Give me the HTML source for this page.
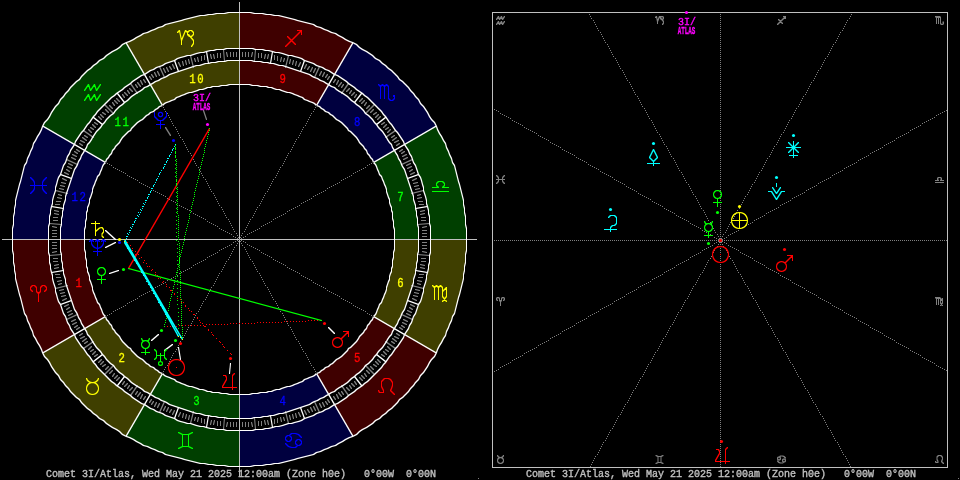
<!DOCTYPE html><html><head><meta charset="utf-8"><title>Comet 3I/Atlas</title><style>html,body{margin:0;padding:0;background:#000;overflow:hidden}svg{display:block}text{white-space:pre;font-family:"Liberation Mono",monospace;stroke-width:.35px;paint-order:stroke}.l{fill:none;stroke-width:1;stroke-linecap:square;stroke-linejoin:round}.p{fill:none;stroke-width:1;shape-rendering:crispEdges}</style></head><body>
<svg width="960" height="480" viewBox="0 0 960 480"><rect width="960" height="480" fill="#000"/>
<path fill="#3f0000" d="M12.5 239.5A227 227 0 0 0 42.91 353L105.27 317A155 155 0 0 1 84.5 239.5Z"/>
<path fill="#3f3f00" d="M42.91 353A227 227 0 0 0 126 436.09L162 373.73A155 155 0 0 1 105.27 317Z"/>
<path fill="#003f00" d="M126 436.09A227 227 0 0 0 239.5 466.5L239.5 394.5A155 155 0 0 1 162 373.73Z"/>
<path fill="#00003f" d="M239.5 466.5A227 227 0 0 0 353 436.09L317 373.73A155 155 0 0 1 239.5 394.5Z"/>
<path fill="#3f0000" d="M353 436.09A227 227 0 0 0 436.09 353L373.73 317A155 155 0 0 1 317 373.73Z"/>
<path fill="#3f3f00" d="M436.09 353A227 227 0 0 0 466.5 239.5L394.5 239.5A155 155 0 0 1 373.73 317Z"/>
<path fill="#003f00" d="M466.5 239.5A227 227 0 0 0 436.09 126L373.73 162A155 155 0 0 1 394.5 239.5Z"/>
<path fill="#00003f" d="M436.09 126A227 227 0 0 0 353 42.91L317 105.27A155 155 0 0 1 373.73 162Z"/>
<path fill="#3f0000" d="M353 42.91A227 227 0 0 0 239.5 12.5L239.5 84.5A155 155 0 0 1 317 105.27Z"/>
<path fill="#3f3f00" d="M239.5 12.5A227 227 0 0 0 126 42.91L162 105.27A155 155 0 0 1 239.5 84.5Z"/>
<path fill="#003f00" d="M126 42.91A227 227 0 0 0 42.91 126L105.27 162A155 155 0 0 1 162 105.27Z"/>
<path fill="#00003f" d="M42.91 126A227 227 0 0 0 12.5 239.5L84.5 239.5A155 155 0 0 1 105.27 162Z"/>
<circle cx="239.5" cy="239.5" r="185" fill="none" stroke="#000000" stroke-width="12"/>
<path transform="translate(.5,.5)" fill="#808080" d="M51.5 241.5H56.5V242.5H51.5ZM51.5 244.5H56.5V245.5H51.5ZM51.5 247.5H56.5V248.5H51.5ZM51.5 251.5L55.5 250.5L56.5 250.5L56.5 251.5L52.5 252.5L51.5 252.5ZM48.5 254.5L60.5 253.5L61.5 253.5L61.5 254.5L49.5 255.5L48.5 255.5ZM52.5 257.5H57.5V258.5H52.5ZM52.5 260.5H57.5V261.5H52.5ZM53.5 264.5L57.5 263.5L58.5 263.5L58.5 264.5L54.5 265.5L53.5 265.5ZM53.5 267.5L57.5 266.5L58.5 266.5L58.5 267.5L54.5 268.5L53.5 268.5Z"/>
<path transform="translate(.5,.5)" fill="#ffffff" d="M50.5 271.5L62.5 269.5L63.5 269.5L63.5 270.5L51.5 272.5L50.5 272.5Z"/>
<path transform="translate(.5,.5)" fill="#808080" d="M54.5 273.5H59.5V274.5H54.5ZM55.5 276.5H60.5V277.5H55.5ZM56.5 280.5L60.5 279.5L61.5 279.5L61.5 280.5L57.5 281.5L56.5 281.5ZM57.5 283.5L60.5 282.5L61.5 282.5L61.5 283.5L58.5 284.5L57.5 284.5ZM54.5 287.5L66.5 284.5L67.5 284.5L67.5 285.5L55.5 288.5L54.5 288.5ZM58.5 289.5L62.5 288.5L63.5 288.5L63.5 289.5L59.5 290.5L58.5 290.5ZM59.5 292.5L63.5 291.5L64.5 291.5L64.5 292.5L60.5 293.5L59.5 293.5ZM60.5 295.5L64.5 294.5L65.5 294.5L65.5 295.5L61.5 296.5L60.5 296.5ZM61.5 299.5L65.5 297.5L66.5 297.5L66.5 298.5L62.5 300.5L61.5 300.5Z"/>
<path transform="translate(.5,.5)" fill="#ffffff" d="M59.5 303.5L70.5 299.5L71.5 299.5L71.5 300.5L60.5 304.5L59.5 304.5Z"/>
<path transform="translate(.5,.5)" fill="#808080" d="M63.5 305.5L67.5 303.5L68.5 303.5L68.5 304.5L64.5 306.5L63.5 306.5ZM65.5 308.5L68.5 306.5L69.5 306.5L69.5 307.5L66.5 309.5L65.5 309.5ZM66.5 311.5L70.5 309.5L71.5 309.5L71.5 310.5L67.5 312.5L66.5 312.5ZM67.5 314.5L71.5 312.5L72.5 312.5L72.5 313.5L68.5 315.5L67.5 315.5ZM65.5 318.5L76.5 313.5L77.5 313.5L77.5 314.5L66.5 319.5L65.5 319.5ZM70.5 320.5L74.5 318.5L75.5 318.5L75.5 319.5L71.5 321.5L70.5 321.5ZM71.5 323.5L75.5 321.5L76.5 321.5L76.5 322.5L72.5 324.5L71.5 324.5ZM73.5 326.5L76.5 324.5L77.5 324.5L77.5 325.5L74.5 327.5L73.5 327.5ZM75.5 328.5L78.5 326.5L79.5 326.5L79.5 327.5L76.5 329.5L75.5 329.5Z"/>
<path transform="translate(.5,.5)" fill="#ffffff" d="M42.5 351.5L104.5 315.5L105.5 315.5L105.5 316.5L43.5 352.5L42.5 352.5Z"/>
<path transform="translate(.5,.5)" fill="#808080" d="M78.5 334.5L81.5 332.5L82.5 332.5L82.5 333.5L79.5 335.5L78.5 335.5ZM79.5 337.5L83.5 335.5L84.5 335.5L84.5 336.5L80.5 338.5L79.5 338.5ZM81.5 340.5L85.5 337.5L86.5 337.5L86.5 338.5L82.5 341.5L81.5 341.5ZM83.5 342.5L86.5 340.5L87.5 340.5L87.5 341.5L84.5 343.5L83.5 343.5ZM82.5 347.5L92.5 340.5L93.5 340.5L93.5 341.5L83.5 348.5L82.5 348.5ZM87.5 348.5L90.5 345.5L91.5 345.5L91.5 346.5L88.5 349.5L87.5 349.5ZM89.5 350.5L92.5 348.5L93.5 348.5L93.5 349.5L90.5 351.5L89.5 351.5ZM91.5 353.5L94.5 350.5L95.5 350.5L95.5 351.5L92.5 354.5L91.5 354.5ZM93.5 355.5L96.5 353.5L97.5 353.5L97.5 354.5L94.5 356.5L93.5 356.5Z"/>
<path transform="translate(.5,.5)" fill="#ffffff" d="M92.5 360.5L101.5 353.5L102.5 353.5L102.5 354.5L93.5 361.5L92.5 361.5Z"/>
<path transform="translate(.5,.5)" fill="#808080" d="M97.5 361.5L100.5 358.5L101.5 358.5L101.5 359.5L98.5 362.5L97.5 362.5ZM99.5 363.5L102.5 360.5L103.5 360.5L103.5 361.5L100.5 364.5L99.5 364.5ZM101.5 365.5L104.5 363.5L105.5 363.5L105.5 364.5L102.5 366.5L101.5 366.5ZM104.5 368.5L107.5 365.5L108.5 365.5L108.5 366.5L105.5 369.5L104.5 369.5ZM103.5 373.5L112.5 364.5L113.5 364.5L113.5 365.5L104.5 374.5L103.5 374.5ZM108.5 372.5L111.5 369.5L112.5 369.5L112.5 370.5L109.5 373.5L108.5 373.5ZM111.5 375.5L113.5 372.5L114.5 372.5L114.5 373.5L112.5 376.5L111.5 376.5ZM113.5 377.5L116.5 374.5L117.5 374.5L117.5 375.5L114.5 378.5L113.5 378.5ZM115.5 379.5L118.5 376.5L119.5 376.5L119.5 377.5L116.5 380.5L115.5 380.5Z"/>
<path transform="translate(.5,.5)" fill="#ffffff" d="M116.5 384.5L123.5 375.5L124.5 375.5L124.5 376.5L117.5 385.5L116.5 385.5Z"/>
<path transform="translate(.5,.5)" fill="#808080" d="M121.5 383.5L123.5 380.5L124.5 380.5L124.5 381.5L122.5 384.5L121.5 384.5ZM123.5 385.5L126.5 382.5L127.5 382.5L127.5 383.5L124.5 386.5L123.5 386.5ZM126.5 387.5L128.5 384.5L129.5 384.5L129.5 385.5L127.5 388.5L126.5 388.5ZM128.5 389.5L131.5 386.5L132.5 386.5L132.5 387.5L129.5 390.5L128.5 390.5ZM129.5 394.5L136.5 384.5L137.5 384.5L137.5 385.5L130.5 395.5L129.5 395.5ZM134.5 393.5L136.5 390.5L137.5 390.5L137.5 391.5L135.5 394.5L134.5 394.5ZM136.5 395.5L139.5 391.5L140.5 391.5L140.5 392.5L137.5 396.5L136.5 396.5ZM139.5 397.5L141.5 393.5L142.5 393.5L142.5 394.5L140.5 398.5L139.5 398.5ZM142.5 398.5L144.5 395.5L145.5 395.5L145.5 396.5L143.5 399.5L142.5 399.5Z"/>
<path transform="translate(.5,.5)" fill="#ffffff" d="M125.5 434.5L161.5 372.5L162.5 372.5L162.5 373.5L126.5 435.5L125.5 435.5Z"/>
<path transform="translate(.5,.5)" fill="#808080" d="M148.5 401.5L150.5 398.5L151.5 398.5L151.5 399.5L149.5 402.5L148.5 402.5ZM150.5 403.5L152.5 400.5L153.5 400.5L153.5 401.5L151.5 404.5L150.5 404.5ZM153.5 405.5L155.5 401.5L156.5 401.5L156.5 402.5L154.5 406.5L153.5 406.5ZM156.5 406.5L158.5 402.5L159.5 402.5L159.5 403.5L157.5 407.5L156.5 407.5ZM158.5 411.5L163.5 400.5L164.5 400.5L164.5 401.5L159.5 412.5L158.5 412.5ZM162.5 409.5L164.5 405.5L165.5 405.5L165.5 406.5L163.5 410.5L162.5 410.5ZM165.5 410.5L167.5 406.5L168.5 406.5L168.5 407.5L166.5 411.5L165.5 411.5ZM168.5 411.5L170.5 408.5L171.5 408.5L171.5 409.5L169.5 412.5L168.5 412.5ZM171.5 413.5L173.5 409.5L174.5 409.5L174.5 410.5L172.5 414.5L171.5 414.5Z"/>
<path transform="translate(.5,.5)" fill="#ffffff" d="M173.5 417.5L177.5 406.5L178.5 406.5L178.5 407.5L174.5 418.5L173.5 418.5Z"/>
<path transform="translate(.5,.5)" fill="#808080" d="M177.5 415.5L179.5 411.5L180.5 411.5L180.5 412.5L178.5 416.5L177.5 416.5ZM181.5 416.5L182.5 412.5L183.5 412.5L183.5 413.5L182.5 417.5L181.5 417.5ZM184.5 417.5L185.5 413.5L186.5 413.5L186.5 414.5L185.5 418.5L184.5 418.5ZM187.5 418.5L188.5 414.5L189.5 414.5L189.5 415.5L188.5 419.5L187.5 419.5ZM189.5 422.5L192.5 410.5L193.5 410.5L193.5 411.5L190.5 423.5L189.5 423.5ZM193.5 419.5L194.5 416.5L195.5 416.5L195.5 417.5L194.5 420.5L193.5 420.5ZM196.5 420.5L197.5 416.5L198.5 416.5L198.5 417.5L197.5 421.5L196.5 421.5ZM200.5 417.5H201.5V422.5H200.5ZM203.5 418.5H204.5V423.5H203.5Z"/>
<path transform="translate(.5,.5)" fill="#ffffff" d="M205.5 426.5L207.5 414.5L208.5 414.5L208.5 415.5L206.5 427.5L205.5 427.5Z"/>
<path transform="translate(.5,.5)" fill="#808080" d="M209.5 423.5L210.5 419.5L211.5 419.5L211.5 420.5L210.5 424.5L209.5 424.5ZM212.5 423.5L213.5 419.5L214.5 419.5L214.5 420.5L213.5 424.5L212.5 424.5ZM216.5 420.5H217.5V425.5H216.5ZM219.5 420.5H220.5V425.5H219.5ZM222.5 428.5L223.5 416.5L224.5 416.5L224.5 417.5L223.5 429.5L222.5 429.5ZM225.5 425.5L226.5 421.5L227.5 421.5L227.5 422.5L226.5 426.5L225.5 426.5ZM229.5 421.5H230.5V426.5H229.5ZM232.5 421.5H233.5V426.5H232.5ZM235.5 421.5H236.5V426.5H235.5ZM241.5 421.5H242.5V426.5H241.5ZM244.5 421.5H245.5V426.5H244.5ZM247.5 421.5H248.5V426.5H247.5ZM250.5 421.5L251.5 421.5L252.5 425.5L252.5 426.5L251.5 426.5L250.5 422.5ZM253.5 416.5L254.5 416.5L255.5 428.5L255.5 429.5L254.5 429.5L253.5 417.5ZM257.5 420.5H258.5V425.5H257.5ZM260.5 420.5H261.5V425.5H260.5ZM263.5 419.5L264.5 419.5L265.5 423.5L265.5 424.5L264.5 424.5L263.5 420.5ZM266.5 419.5L267.5 419.5L268.5 423.5L268.5 424.5L267.5 424.5L266.5 420.5Z"/>
<path transform="translate(.5,.5)" fill="#ffffff" d="M269.5 414.5L270.5 414.5L272.5 426.5L272.5 427.5L271.5 427.5L269.5 415.5Z"/>
<path transform="translate(.5,.5)" fill="#808080" d="M273.5 418.5H274.5V423.5H273.5ZM276.5 417.5H277.5V422.5H276.5ZM279.5 416.5L280.5 416.5L281.5 420.5L281.5 421.5L280.5 421.5L279.5 417.5ZM282.5 416.5L283.5 416.5L284.5 419.5L284.5 420.5L283.5 420.5L282.5 417.5ZM284.5 410.5L285.5 410.5L288.5 422.5L288.5 423.5L287.5 423.5L284.5 411.5ZM288.5 414.5L289.5 414.5L290.5 418.5L290.5 419.5L289.5 419.5L288.5 415.5ZM291.5 413.5L292.5 413.5L293.5 417.5L293.5 418.5L292.5 418.5L291.5 414.5ZM294.5 412.5L295.5 412.5L296.5 416.5L296.5 417.5L295.5 417.5L294.5 413.5ZM297.5 411.5L298.5 411.5L300.5 415.5L300.5 416.5L299.5 416.5L297.5 412.5Z"/>
<path transform="translate(.5,.5)" fill="#ffffff" d="M299.5 406.5L300.5 406.5L304.5 417.5L304.5 418.5L303.5 418.5L299.5 407.5Z"/>
<path transform="translate(.5,.5)" fill="#808080" d="M303.5 409.5L304.5 409.5L306.5 413.5L306.5 414.5L305.5 414.5L303.5 410.5ZM306.5 408.5L307.5 408.5L309.5 411.5L309.5 412.5L308.5 412.5L306.5 409.5ZM309.5 406.5L310.5 406.5L312.5 410.5L312.5 411.5L311.5 411.5L309.5 407.5ZM312.5 405.5L313.5 405.5L315.5 409.5L315.5 410.5L314.5 410.5L312.5 406.5ZM313.5 400.5L314.5 400.5L319.5 411.5L319.5 412.5L318.5 412.5L313.5 401.5ZM318.5 402.5L319.5 402.5L321.5 406.5L321.5 407.5L320.5 407.5L318.5 403.5ZM321.5 401.5L322.5 401.5L324.5 405.5L324.5 406.5L323.5 406.5L321.5 402.5ZM324.5 400.5L325.5 400.5L327.5 403.5L327.5 404.5L326.5 404.5L324.5 401.5ZM326.5 398.5L327.5 398.5L329.5 401.5L329.5 402.5L328.5 402.5L326.5 399.5Z"/>
<path transform="translate(.5,.5)" fill="#ffffff" d="M315.5 372.5L316.5 372.5L352.5 434.5L352.5 435.5L351.5 435.5L315.5 373.5Z"/>
<path transform="translate(.5,.5)" fill="#808080" d="M332.5 395.5L333.5 395.5L335.5 398.5L335.5 399.5L334.5 399.5L332.5 396.5ZM335.5 393.5L336.5 393.5L338.5 397.5L338.5 398.5L337.5 398.5L335.5 394.5ZM337.5 391.5L338.5 391.5L341.5 395.5L341.5 396.5L340.5 396.5L337.5 392.5ZM340.5 390.5L341.5 390.5L343.5 393.5L343.5 394.5L342.5 394.5L340.5 391.5ZM340.5 384.5L341.5 384.5L348.5 394.5L348.5 395.5L347.5 395.5L340.5 385.5ZM345.5 386.5L346.5 386.5L349.5 389.5L349.5 390.5L348.5 390.5L345.5 387.5ZM348.5 384.5L349.5 384.5L351.5 387.5L351.5 388.5L350.5 388.5L348.5 385.5ZM350.5 382.5L351.5 382.5L354.5 385.5L354.5 386.5L353.5 386.5L350.5 383.5ZM353.5 380.5L354.5 380.5L356.5 383.5L356.5 384.5L355.5 384.5L353.5 381.5Z"/>
<path transform="translate(.5,.5)" fill="#ffffff" d="M353.5 375.5L354.5 375.5L361.5 384.5L361.5 385.5L360.5 385.5L353.5 376.5Z"/>
<path transform="translate(.5,.5)" fill="#808080" d="M358.5 376.5L359.5 376.5L362.5 379.5L362.5 380.5L361.5 380.5L358.5 377.5ZM360.5 374.5L361.5 374.5L364.5 377.5L364.5 378.5L363.5 378.5L360.5 375.5ZM363.5 372.5L364.5 372.5L366.5 375.5L366.5 376.5L365.5 376.5L363.5 373.5ZM365.5 369.5L366.5 369.5L369.5 372.5L369.5 373.5L368.5 373.5L365.5 370.5ZM364.5 364.5L365.5 364.5L374.5 373.5L374.5 374.5L373.5 374.5L364.5 365.5ZM369.5 365.5L370.5 365.5L373.5 368.5L373.5 369.5L372.5 369.5L369.5 366.5ZM372.5 363.5L373.5 363.5L376.5 365.5L376.5 366.5L375.5 366.5L372.5 364.5ZM374.5 360.5L375.5 360.5L378.5 363.5L378.5 364.5L377.5 364.5L374.5 361.5ZM376.5 358.5L377.5 358.5L380.5 361.5L380.5 362.5L379.5 362.5L376.5 359.5Z"/>
<path transform="translate(.5,.5)" fill="#ffffff" d="M375.5 353.5L376.5 353.5L385.5 360.5L385.5 361.5L384.5 361.5L375.5 354.5Z"/>
<path transform="translate(.5,.5)" fill="#808080" d="M380.5 353.5L381.5 353.5L384.5 355.5L384.5 356.5L383.5 356.5L380.5 354.5ZM382.5 350.5L383.5 350.5L386.5 353.5L386.5 354.5L385.5 354.5L382.5 351.5ZM384.5 348.5L385.5 348.5L388.5 350.5L388.5 351.5L387.5 351.5L384.5 349.5ZM386.5 345.5L387.5 345.5L390.5 348.5L390.5 349.5L389.5 349.5L386.5 346.5ZM384.5 340.5L385.5 340.5L395.5 347.5L395.5 348.5L394.5 348.5L384.5 341.5ZM390.5 340.5L391.5 340.5L394.5 342.5L394.5 343.5L393.5 343.5L390.5 341.5ZM391.5 337.5L392.5 337.5L396.5 340.5L396.5 341.5L395.5 341.5L391.5 338.5ZM393.5 335.5L394.5 335.5L398.5 337.5L398.5 338.5L397.5 338.5L393.5 336.5ZM395.5 332.5L396.5 332.5L399.5 334.5L399.5 335.5L398.5 335.5L395.5 333.5Z"/>
<path transform="translate(.5,.5)" fill="#ffffff" d="M372.5 315.5L373.5 315.5L435.5 351.5L435.5 352.5L434.5 352.5L372.5 316.5Z"/>
<path transform="translate(.5,.5)" fill="#808080" d="M398.5 326.5L399.5 326.5L402.5 328.5L402.5 329.5L401.5 329.5L398.5 327.5ZM400.5 324.5L401.5 324.5L404.5 326.5L404.5 327.5L403.5 327.5L400.5 325.5ZM401.5 321.5L402.5 321.5L406.5 323.5L406.5 324.5L405.5 324.5L401.5 322.5ZM402.5 318.5L403.5 318.5L407.5 320.5L407.5 321.5L406.5 321.5L402.5 319.5ZM400.5 313.5L401.5 313.5L412.5 318.5L412.5 319.5L411.5 319.5L400.5 314.5ZM405.5 312.5L406.5 312.5L410.5 314.5L410.5 315.5L409.5 315.5L405.5 313.5ZM406.5 309.5L407.5 309.5L411.5 311.5L411.5 312.5L410.5 312.5L406.5 310.5ZM408.5 306.5L409.5 306.5L412.5 308.5L412.5 309.5L411.5 309.5L408.5 307.5ZM409.5 303.5L410.5 303.5L414.5 305.5L414.5 306.5L413.5 306.5L409.5 304.5Z"/>
<path transform="translate(.5,.5)" fill="#ffffff" d="M406.5 299.5L407.5 299.5L418.5 303.5L418.5 304.5L417.5 304.5L406.5 300.5Z"/>
<path transform="translate(.5,.5)" fill="#808080" d="M411.5 297.5L412.5 297.5L416.5 299.5L416.5 300.5L415.5 300.5L411.5 298.5ZM412.5 294.5L413.5 294.5L417.5 295.5L417.5 296.5L416.5 296.5L412.5 295.5ZM413.5 291.5L414.5 291.5L418.5 292.5L418.5 293.5L417.5 293.5L413.5 292.5ZM414.5 288.5L415.5 288.5L419.5 289.5L419.5 290.5L418.5 290.5L414.5 289.5ZM410.5 284.5L411.5 284.5L423.5 287.5L423.5 288.5L422.5 288.5L410.5 285.5ZM416.5 282.5L417.5 282.5L420.5 283.5L420.5 284.5L419.5 284.5L416.5 283.5ZM416.5 279.5L417.5 279.5L421.5 280.5L421.5 281.5L420.5 281.5L416.5 280.5ZM417.5 276.5H422.5V277.5H417.5ZM418.5 273.5H423.5V274.5H418.5Z"/>
<path transform="translate(.5,.5)" fill="#ffffff" d="M414.5 269.5L415.5 269.5L427.5 271.5L427.5 272.5L426.5 272.5L414.5 270.5Z"/>
<path transform="translate(.5,.5)" fill="#808080" d="M419.5 266.5L420.5 266.5L424.5 267.5L424.5 268.5L423.5 268.5L419.5 267.5ZM419.5 263.5L420.5 263.5L424.5 264.5L424.5 265.5L423.5 265.5L419.5 264.5ZM420.5 260.5H425.5V261.5H420.5ZM420.5 257.5H425.5V258.5H420.5ZM416.5 253.5L417.5 253.5L429.5 254.5L429.5 255.5L428.5 255.5L416.5 254.5ZM421.5 250.5L422.5 250.5L426.5 251.5L426.5 252.5L425.5 252.5L421.5 251.5ZM421.5 247.5H426.5V248.5H421.5ZM421.5 244.5H426.5V245.5H421.5ZM421.5 241.5H426.5V242.5H421.5ZM421.5 235.5H426.5V236.5H421.5ZM421.5 232.5H426.5V233.5H421.5ZM421.5 229.5H426.5V230.5H421.5ZM421.5 226.5L425.5 225.5L426.5 225.5L426.5 226.5L422.5 227.5L421.5 227.5ZM416.5 223.5L428.5 222.5L429.5 222.5L429.5 223.5L417.5 224.5L416.5 224.5ZM420.5 219.5H425.5V220.5H420.5ZM420.5 216.5H425.5V217.5H420.5ZM419.5 213.5L423.5 212.5L424.5 212.5L424.5 213.5L420.5 214.5L419.5 214.5ZM419.5 210.5L423.5 209.5L424.5 209.5L424.5 210.5L420.5 211.5L419.5 211.5Z"/>
<path transform="translate(.5,.5)" fill="#ffffff" d="M414.5 207.5L426.5 205.5L427.5 205.5L427.5 206.5L415.5 208.5L414.5 208.5Z"/>
<path transform="translate(.5,.5)" fill="#808080" d="M418.5 203.5H423.5V204.5H418.5ZM417.5 200.5H422.5V201.5H417.5ZM416.5 197.5L420.5 196.5L421.5 196.5L421.5 197.5L417.5 198.5L416.5 198.5ZM416.5 194.5L419.5 193.5L420.5 193.5L420.5 194.5L417.5 195.5L416.5 195.5ZM410.5 192.5L422.5 189.5L423.5 189.5L423.5 190.5L411.5 193.5L410.5 193.5ZM414.5 188.5L418.5 187.5L419.5 187.5L419.5 188.5L415.5 189.5L414.5 189.5ZM413.5 185.5L417.5 184.5L418.5 184.5L418.5 185.5L414.5 186.5L413.5 186.5ZM412.5 182.5L416.5 181.5L417.5 181.5L417.5 182.5L413.5 183.5L412.5 183.5ZM411.5 179.5L415.5 177.5L416.5 177.5L416.5 178.5L412.5 180.5L411.5 180.5Z"/>
<path transform="translate(.5,.5)" fill="#ffffff" d="M406.5 177.5L417.5 173.5L418.5 173.5L418.5 174.5L407.5 178.5L406.5 178.5Z"/>
<path transform="translate(.5,.5)" fill="#808080" d="M409.5 173.5L413.5 171.5L414.5 171.5L414.5 172.5L410.5 174.5L409.5 174.5ZM408.5 170.5L411.5 168.5L412.5 168.5L412.5 169.5L409.5 171.5L408.5 171.5ZM406.5 167.5L410.5 165.5L411.5 165.5L411.5 166.5L407.5 168.5L406.5 168.5ZM405.5 164.5L409.5 162.5L410.5 162.5L410.5 163.5L406.5 165.5L405.5 165.5ZM400.5 163.5L411.5 158.5L412.5 158.5L412.5 159.5L401.5 164.5L400.5 164.5ZM402.5 158.5L406.5 156.5L407.5 156.5L407.5 157.5L403.5 159.5L402.5 159.5ZM401.5 155.5L405.5 153.5L406.5 153.5L406.5 154.5L402.5 156.5L401.5 156.5ZM400.5 152.5L403.5 150.5L404.5 150.5L404.5 151.5L401.5 153.5L400.5 153.5ZM398.5 150.5L401.5 148.5L402.5 148.5L402.5 149.5L399.5 151.5L398.5 151.5Z"/>
<path transform="translate(.5,.5)" fill="#ffffff" d="M372.5 161.5L434.5 125.5L435.5 125.5L435.5 126.5L373.5 162.5L372.5 162.5Z"/>
<path transform="translate(.5,.5)" fill="#808080" d="M395.5 144.5L398.5 142.5L399.5 142.5L399.5 143.5L396.5 145.5L395.5 145.5ZM393.5 141.5L397.5 139.5L398.5 139.5L398.5 140.5L394.5 142.5L393.5 142.5ZM391.5 139.5L395.5 136.5L396.5 136.5L396.5 137.5L392.5 140.5L391.5 140.5ZM390.5 136.5L393.5 134.5L394.5 134.5L394.5 135.5L391.5 137.5L390.5 137.5ZM384.5 136.5L394.5 129.5L395.5 129.5L395.5 130.5L385.5 137.5L384.5 137.5ZM386.5 131.5L389.5 128.5L390.5 128.5L390.5 129.5L387.5 132.5L386.5 132.5ZM384.5 128.5L387.5 126.5L388.5 126.5L388.5 127.5L385.5 129.5L384.5 129.5ZM382.5 126.5L385.5 123.5L386.5 123.5L386.5 124.5L383.5 127.5L382.5 127.5ZM380.5 123.5L383.5 121.5L384.5 121.5L384.5 122.5L381.5 124.5L380.5 124.5Z"/>
<path transform="translate(.5,.5)" fill="#ffffff" d="M375.5 123.5L384.5 116.5L385.5 116.5L385.5 117.5L376.5 124.5L375.5 124.5Z"/>
<path transform="translate(.5,.5)" fill="#808080" d="M376.5 118.5L379.5 115.5L380.5 115.5L380.5 116.5L377.5 119.5L376.5 119.5ZM374.5 116.5L377.5 113.5L378.5 113.5L378.5 114.5L375.5 117.5L374.5 117.5ZM372.5 113.5L375.5 111.5L376.5 111.5L376.5 112.5L373.5 114.5L372.5 114.5ZM369.5 111.5L372.5 108.5L373.5 108.5L373.5 109.5L370.5 112.5L369.5 112.5ZM364.5 112.5L373.5 103.5L374.5 103.5L374.5 104.5L365.5 113.5L364.5 113.5ZM365.5 107.5L368.5 104.5L369.5 104.5L369.5 105.5L366.5 108.5L365.5 108.5ZM363.5 104.5L365.5 101.5L366.5 101.5L366.5 102.5L364.5 105.5L363.5 105.5ZM360.5 102.5L363.5 99.5L364.5 99.5L364.5 100.5L361.5 103.5L360.5 103.5ZM358.5 100.5L361.5 97.5L362.5 97.5L362.5 98.5L359.5 101.5L358.5 101.5Z"/>
<path transform="translate(.5,.5)" fill="#ffffff" d="M353.5 101.5L360.5 92.5L361.5 92.5L361.5 93.5L354.5 102.5L353.5 102.5Z"/>
<path transform="translate(.5,.5)" fill="#808080" d="M353.5 96.5L355.5 93.5L356.5 93.5L356.5 94.5L354.5 97.5L353.5 97.5ZM350.5 94.5L353.5 91.5L354.5 91.5L354.5 92.5L351.5 95.5L350.5 95.5ZM348.5 92.5L350.5 89.5L351.5 89.5L351.5 90.5L349.5 93.5L348.5 93.5ZM345.5 90.5L348.5 87.5L349.5 87.5L349.5 88.5L346.5 91.5L345.5 91.5ZM340.5 92.5L347.5 82.5L348.5 82.5L348.5 83.5L341.5 93.5L340.5 93.5ZM340.5 86.5L342.5 83.5L343.5 83.5L343.5 84.5L341.5 87.5L340.5 87.5ZM337.5 85.5L340.5 81.5L341.5 81.5L341.5 82.5L338.5 86.5L337.5 86.5ZM335.5 83.5L337.5 79.5L338.5 79.5L338.5 80.5L336.5 84.5L335.5 84.5ZM332.5 81.5L334.5 78.5L335.5 78.5L335.5 79.5L333.5 82.5L332.5 82.5Z"/>
<path transform="translate(.5,.5)" fill="#ffffff" d="M315.5 104.5L351.5 42.5L352.5 42.5L352.5 43.5L316.5 105.5L315.5 105.5Z"/>
<path transform="translate(.5,.5)" fill="#808080" d="M326.5 78.5L328.5 75.5L329.5 75.5L329.5 76.5L327.5 79.5L326.5 79.5ZM324.5 76.5L326.5 73.5L327.5 73.5L327.5 74.5L325.5 77.5L324.5 77.5ZM321.5 75.5L323.5 71.5L324.5 71.5L324.5 72.5L322.5 76.5L321.5 76.5ZM318.5 74.5L320.5 70.5L321.5 70.5L321.5 71.5L319.5 75.5L318.5 75.5ZM313.5 76.5L318.5 65.5L319.5 65.5L319.5 66.5L314.5 77.5L313.5 77.5ZM312.5 71.5L314.5 67.5L315.5 67.5L315.5 68.5L313.5 72.5L312.5 72.5ZM309.5 70.5L311.5 66.5L312.5 66.5L312.5 67.5L310.5 71.5L309.5 71.5ZM306.5 68.5L308.5 65.5L309.5 65.5L309.5 66.5L307.5 69.5L306.5 69.5ZM303.5 67.5L305.5 63.5L306.5 63.5L306.5 64.5L304.5 68.5L303.5 68.5Z"/>
<path transform="translate(.5,.5)" fill="#ffffff" d="M299.5 70.5L303.5 59.5L304.5 59.5L304.5 60.5L300.5 71.5L299.5 71.5Z"/>
<path transform="translate(.5,.5)" fill="#808080" d="M297.5 65.5L299.5 61.5L300.5 61.5L300.5 62.5L298.5 66.5L297.5 66.5ZM294.5 64.5L295.5 60.5L296.5 60.5L296.5 61.5L295.5 65.5L294.5 65.5ZM291.5 63.5L292.5 59.5L293.5 59.5L293.5 60.5L292.5 64.5L291.5 64.5ZM288.5 62.5L289.5 58.5L290.5 58.5L290.5 59.5L289.5 63.5L288.5 63.5ZM284.5 66.5L287.5 54.5L288.5 54.5L288.5 55.5L285.5 67.5L284.5 67.5ZM282.5 60.5L283.5 57.5L284.5 57.5L284.5 58.5L283.5 61.5L282.5 61.5ZM279.5 60.5L280.5 56.5L281.5 56.5L281.5 57.5L280.5 61.5L279.5 61.5ZM276.5 55.5H277.5V60.5H276.5ZM273.5 54.5H274.5V59.5H273.5Z"/>
<path transform="translate(.5,.5)" fill="#ffffff" d="M269.5 62.5L271.5 50.5L272.5 50.5L272.5 51.5L270.5 63.5L269.5 63.5Z"/>
<path transform="translate(.5,.5)" fill="#808080" d="M266.5 57.5L267.5 53.5L268.5 53.5L268.5 54.5L267.5 58.5L266.5 58.5ZM263.5 57.5L264.5 53.5L265.5 53.5L265.5 54.5L264.5 58.5L263.5 58.5ZM260.5 52.5H261.5V57.5H260.5ZM257.5 52.5H258.5V57.5H257.5ZM253.5 60.5L254.5 48.5L255.5 48.5L255.5 49.5L254.5 61.5L253.5 61.5ZM250.5 55.5L251.5 51.5L252.5 51.5L252.5 52.5L251.5 56.5L250.5 56.5ZM247.5 51.5H248.5V56.5H247.5ZM244.5 51.5H245.5V56.5H244.5ZM241.5 51.5H242.5V56.5H241.5ZM235.5 51.5H236.5V56.5H235.5ZM232.5 51.5H233.5V56.5H232.5ZM229.5 51.5H230.5V56.5H229.5ZM225.5 51.5L226.5 51.5L227.5 55.5L227.5 56.5L226.5 56.5L225.5 52.5ZM222.5 48.5L223.5 48.5L224.5 60.5L224.5 61.5L223.5 61.5L222.5 49.5ZM219.5 52.5H220.5V57.5H219.5ZM216.5 52.5H217.5V57.5H216.5ZM212.5 53.5L213.5 53.5L214.5 57.5L214.5 58.5L213.5 58.5L212.5 54.5ZM209.5 53.5L210.5 53.5L211.5 57.5L211.5 58.5L210.5 58.5L209.5 54.5Z"/>
<path transform="translate(.5,.5)" fill="#ffffff" d="M205.5 50.5L206.5 50.5L208.5 62.5L208.5 63.5L207.5 63.5L205.5 51.5Z"/>
<path transform="translate(.5,.5)" fill="#808080" d="M203.5 54.5H204.5V59.5H203.5ZM200.5 55.5H201.5V60.5H200.5ZM196.5 56.5L197.5 56.5L198.5 60.5L198.5 61.5L197.5 61.5L196.5 57.5ZM193.5 57.5L194.5 57.5L195.5 60.5L195.5 61.5L194.5 61.5L193.5 58.5ZM189.5 54.5L190.5 54.5L193.5 66.5L193.5 67.5L192.5 67.5L189.5 55.5ZM187.5 58.5L188.5 58.5L189.5 62.5L189.5 63.5L188.5 63.5L187.5 59.5ZM184.5 59.5L185.5 59.5L186.5 63.5L186.5 64.5L185.5 64.5L184.5 60.5ZM181.5 60.5L182.5 60.5L183.5 64.5L183.5 65.5L182.5 65.5L181.5 61.5ZM177.5 61.5L178.5 61.5L180.5 65.5L180.5 66.5L179.5 66.5L177.5 62.5Z"/>
<path transform="translate(.5,.5)" fill="#ffffff" d="M173.5 59.5L174.5 59.5L178.5 70.5L178.5 71.5L177.5 71.5L173.5 60.5Z"/>
<path transform="translate(.5,.5)" fill="#808080" d="M171.5 63.5L172.5 63.5L174.5 67.5L174.5 68.5L173.5 68.5L171.5 64.5ZM168.5 65.5L169.5 65.5L171.5 68.5L171.5 69.5L170.5 69.5L168.5 66.5ZM165.5 66.5L166.5 66.5L168.5 70.5L168.5 71.5L167.5 71.5L165.5 67.5ZM162.5 67.5L163.5 67.5L165.5 71.5L165.5 72.5L164.5 72.5L162.5 68.5ZM158.5 65.5L159.5 65.5L164.5 76.5L164.5 77.5L163.5 77.5L158.5 66.5ZM156.5 70.5L157.5 70.5L159.5 74.5L159.5 75.5L158.5 75.5L156.5 71.5ZM153.5 71.5L154.5 71.5L156.5 75.5L156.5 76.5L155.5 76.5L153.5 72.5ZM150.5 73.5L151.5 73.5L153.5 76.5L153.5 77.5L152.5 77.5L150.5 74.5ZM148.5 75.5L149.5 75.5L151.5 78.5L151.5 79.5L150.5 79.5L148.5 76.5Z"/>
<path transform="translate(.5,.5)" fill="#ffffff" d="M125.5 42.5L126.5 42.5L162.5 104.5L162.5 105.5L161.5 105.5L125.5 43.5Z"/>
<path transform="translate(.5,.5)" fill="#808080" d="M142.5 78.5L143.5 78.5L145.5 81.5L145.5 82.5L144.5 82.5L142.5 79.5ZM139.5 79.5L140.5 79.5L142.5 83.5L142.5 84.5L141.5 84.5L139.5 80.5ZM136.5 81.5L137.5 81.5L140.5 85.5L140.5 86.5L139.5 86.5L136.5 82.5ZM134.5 83.5L135.5 83.5L137.5 86.5L137.5 87.5L136.5 87.5L134.5 84.5ZM129.5 82.5L130.5 82.5L137.5 92.5L137.5 93.5L136.5 93.5L129.5 83.5ZM128.5 87.5L129.5 87.5L132.5 90.5L132.5 91.5L131.5 91.5L128.5 88.5ZM126.5 89.5L127.5 89.5L129.5 92.5L129.5 93.5L128.5 93.5L126.5 90.5ZM123.5 91.5L124.5 91.5L127.5 94.5L127.5 95.5L126.5 95.5L123.5 92.5ZM121.5 93.5L122.5 93.5L124.5 96.5L124.5 97.5L123.5 97.5L121.5 94.5Z"/>
<path transform="translate(.5,.5)" fill="#ffffff" d="M116.5 92.5L117.5 92.5L124.5 101.5L124.5 102.5L123.5 102.5L116.5 93.5Z"/>
<path transform="translate(.5,.5)" fill="#808080" d="M115.5 97.5L116.5 97.5L119.5 100.5L119.5 101.5L118.5 101.5L115.5 98.5ZM113.5 99.5L114.5 99.5L117.5 102.5L117.5 103.5L116.5 103.5L113.5 100.5ZM111.5 101.5L112.5 101.5L114.5 104.5L114.5 105.5L113.5 105.5L111.5 102.5ZM108.5 104.5L109.5 104.5L112.5 107.5L112.5 108.5L111.5 108.5L108.5 105.5ZM103.5 103.5L104.5 103.5L113.5 112.5L113.5 113.5L112.5 113.5L103.5 104.5ZM104.5 108.5L105.5 108.5L108.5 111.5L108.5 112.5L107.5 112.5L104.5 109.5ZM101.5 111.5L102.5 111.5L105.5 113.5L105.5 114.5L104.5 114.5L101.5 112.5ZM99.5 113.5L100.5 113.5L103.5 116.5L103.5 117.5L102.5 117.5L99.5 114.5ZM97.5 115.5L98.5 115.5L101.5 118.5L101.5 119.5L100.5 119.5L97.5 116.5Z"/>
<path transform="translate(.5,.5)" fill="#ffffff" d="M92.5 116.5L93.5 116.5L102.5 123.5L102.5 124.5L101.5 124.5L92.5 117.5Z"/>
<path transform="translate(.5,.5)" fill="#808080" d="M93.5 121.5L94.5 121.5L97.5 123.5L97.5 124.5L96.5 124.5L93.5 122.5ZM91.5 123.5L92.5 123.5L95.5 126.5L95.5 127.5L94.5 127.5L91.5 124.5ZM89.5 126.5L90.5 126.5L93.5 128.5L93.5 129.5L92.5 129.5L89.5 127.5ZM87.5 128.5L88.5 128.5L91.5 131.5L91.5 132.5L90.5 132.5L87.5 129.5ZM82.5 129.5L83.5 129.5L93.5 136.5L93.5 137.5L92.5 137.5L82.5 130.5ZM83.5 134.5L84.5 134.5L87.5 136.5L87.5 137.5L86.5 137.5L83.5 135.5ZM81.5 136.5L82.5 136.5L86.5 139.5L86.5 140.5L85.5 140.5L81.5 137.5ZM79.5 139.5L80.5 139.5L84.5 141.5L84.5 142.5L83.5 142.5L79.5 140.5ZM78.5 142.5L79.5 142.5L82.5 144.5L82.5 145.5L81.5 145.5L78.5 143.5Z"/>
<path transform="translate(.5,.5)" fill="#ffffff" d="M42.5 125.5L43.5 125.5L105.5 161.5L105.5 162.5L104.5 162.5L42.5 126.5Z"/>
<path transform="translate(.5,.5)" fill="#808080" d="M75.5 148.5L76.5 148.5L79.5 150.5L79.5 151.5L78.5 151.5L75.5 149.5ZM73.5 150.5L74.5 150.5L77.5 152.5L77.5 153.5L76.5 153.5L73.5 151.5ZM71.5 153.5L72.5 153.5L76.5 155.5L76.5 156.5L75.5 156.5L71.5 154.5ZM70.5 156.5L71.5 156.5L75.5 158.5L75.5 159.5L74.5 159.5L70.5 157.5ZM65.5 158.5L66.5 158.5L77.5 163.5L77.5 164.5L76.5 164.5L65.5 159.5ZM67.5 162.5L68.5 162.5L72.5 164.5L72.5 165.5L71.5 165.5L67.5 163.5ZM66.5 165.5L67.5 165.5L71.5 167.5L71.5 168.5L70.5 168.5L66.5 166.5ZM65.5 168.5L66.5 168.5L69.5 170.5L69.5 171.5L68.5 171.5L65.5 169.5ZM63.5 171.5L64.5 171.5L68.5 173.5L68.5 174.5L67.5 174.5L63.5 172.5Z"/>
<path transform="translate(.5,.5)" fill="#ffffff" d="M59.5 173.5L60.5 173.5L71.5 177.5L71.5 178.5L70.5 178.5L59.5 174.5Z"/>
<path transform="translate(.5,.5)" fill="#808080" d="M61.5 177.5L62.5 177.5L66.5 179.5L66.5 180.5L65.5 180.5L61.5 178.5ZM60.5 181.5L61.5 181.5L65.5 182.5L65.5 183.5L64.5 183.5L60.5 182.5ZM59.5 184.5L60.5 184.5L64.5 185.5L64.5 186.5L63.5 186.5L59.5 185.5ZM58.5 187.5L59.5 187.5L63.5 188.5L63.5 189.5L62.5 189.5L58.5 188.5ZM54.5 189.5L55.5 189.5L67.5 192.5L67.5 193.5L66.5 193.5L54.5 190.5ZM57.5 193.5L58.5 193.5L61.5 194.5L61.5 195.5L60.5 195.5L57.5 194.5ZM56.5 196.5L57.5 196.5L61.5 197.5L61.5 198.5L60.5 198.5L56.5 197.5ZM55.5 200.5H60.5V201.5H55.5ZM54.5 203.5H59.5V204.5H54.5Z"/>
<path transform="translate(.5,.5)" fill="#ffffff" d="M50.5 205.5L51.5 205.5L63.5 207.5L63.5 208.5L62.5 208.5L50.5 206.5Z"/>
<path transform="translate(.5,.5)" fill="#808080" d="M53.5 209.5L54.5 209.5L58.5 210.5L58.5 211.5L57.5 211.5L53.5 210.5ZM53.5 212.5L54.5 212.5L58.5 213.5L58.5 214.5L57.5 214.5L53.5 213.5ZM52.5 216.5H57.5V217.5H52.5ZM52.5 219.5H57.5V220.5H52.5ZM48.5 222.5L49.5 222.5L61.5 223.5L61.5 224.5L60.5 224.5L48.5 223.5ZM51.5 225.5L52.5 225.5L56.5 226.5L56.5 227.5L55.5 227.5L51.5 226.5ZM51.5 229.5H56.5V230.5H51.5ZM51.5 232.5H56.5V233.5H51.5ZM51.5 235.5H56.5V236.5H51.5Z"/>
<path transform="translate(.5,.5)" fill="#c0c0c0" d="M1.5 238.5H476.5V239.5H1.5ZM238.5 1.5H239.5V476.5H238.5Z"/>
<path transform="translate(.5,.5)" fill="#ffffff" d="M465.5 238.5H466.5V242.5H465.5ZM465.5 241.5H466.5V246.5H465.5ZM465.5 245.5H466.5V250.5H465.5ZM464.5 253.5L465.5 249.5L466.5 249.5L466.5 250.5L465.5 254.5L464.5 254.5ZM464.5 253.5H465.5V258.5H464.5ZM464.5 257.5H465.5V262.5H464.5ZM463.5 265.5L464.5 261.5L465.5 261.5L465.5 262.5L464.5 266.5L463.5 266.5ZM463.5 265.5H464.5V270.5H463.5ZM462.5 273.5L463.5 269.5L464.5 269.5L464.5 270.5L463.5 274.5L462.5 274.5ZM462.5 273.5H463.5V278.5H462.5ZM461.5 281.5L462.5 277.5L463.5 277.5L463.5 278.5L462.5 282.5L461.5 282.5ZM460.5 285.5L461.5 281.5L462.5 281.5L462.5 282.5L461.5 286.5L460.5 286.5ZM459.5 289.5L460.5 285.5L461.5 285.5L461.5 286.5L460.5 290.5L459.5 290.5ZM458.5 293.5L459.5 289.5L460.5 289.5L460.5 290.5L459.5 294.5L458.5 294.5ZM457.5 296.5L458.5 293.5L459.5 293.5L459.5 294.5L458.5 297.5L457.5 297.5ZM456.5 300.5L457.5 296.5L458.5 296.5L458.5 297.5L457.5 301.5L456.5 301.5ZM455.5 304.5L456.5 300.5L457.5 300.5L457.5 301.5L456.5 305.5L455.5 305.5ZM454.5 308.5L455.5 304.5L456.5 304.5L456.5 305.5L455.5 309.5L454.5 309.5ZM453.5 312.5L454.5 308.5L455.5 308.5L455.5 309.5L454.5 313.5L453.5 313.5ZM451.5 315.5L453.5 312.5L454.5 312.5L454.5 313.5L452.5 316.5L451.5 316.5ZM450.5 319.5L451.5 315.5L452.5 315.5L452.5 316.5L451.5 320.5L450.5 320.5ZM448.5 323.5L450.5 319.5L451.5 319.5L451.5 320.5L449.5 324.5L448.5 324.5ZM447.5 326.5L448.5 323.5L449.5 323.5L449.5 324.5L448.5 327.5L447.5 327.5ZM445.5 330.5L447.5 326.5L448.5 326.5L448.5 327.5L446.5 331.5L445.5 331.5ZM444.5 334.5L445.5 330.5L446.5 330.5L446.5 331.5L445.5 335.5L444.5 335.5ZM442.5 337.5L444.5 334.5L445.5 334.5L445.5 335.5L443.5 338.5L442.5 338.5ZM440.5 341.5L442.5 337.5L443.5 337.5L443.5 338.5L441.5 342.5L440.5 342.5ZM438.5 344.5L440.5 341.5L441.5 341.5L441.5 342.5L439.5 345.5L438.5 345.5ZM436.5 348.5L438.5 344.5L439.5 344.5L439.5 345.5L437.5 349.5L436.5 349.5ZM435.5 351.5L436.5 348.5L437.5 348.5L437.5 349.5L436.5 352.5L435.5 352.5ZM433.5 355.5L435.5 351.5L436.5 351.5L436.5 352.5L434.5 356.5L433.5 356.5ZM430.5 358.5L433.5 355.5L434.5 355.5L434.5 356.5L431.5 359.5L430.5 359.5ZM428.5 361.5L430.5 358.5L431.5 358.5L431.5 359.5L429.5 362.5L428.5 362.5ZM426.5 365.5L428.5 361.5L429.5 361.5L429.5 362.5L427.5 366.5L426.5 366.5ZM424.5 368.5L426.5 365.5L427.5 365.5L427.5 366.5L425.5 369.5L424.5 369.5ZM422.5 371.5L424.5 368.5L425.5 368.5L425.5 369.5L423.5 372.5L422.5 372.5ZM419.5 374.5L422.5 371.5L423.5 371.5L423.5 372.5L420.5 375.5L419.5 375.5ZM417.5 378.5L419.5 374.5L420.5 374.5L420.5 375.5L418.5 379.5L417.5 379.5ZM414.5 381.5L417.5 378.5L418.5 378.5L418.5 379.5L415.5 382.5L414.5 382.5ZM412.5 384.5L414.5 381.5L415.5 381.5L415.5 382.5L413.5 385.5L412.5 385.5ZM409.5 387.5L412.5 384.5L413.5 384.5L413.5 385.5L410.5 388.5L409.5 388.5ZM407.5 390.5L409.5 387.5L410.5 387.5L410.5 388.5L408.5 391.5L407.5 391.5ZM404.5 393.5L407.5 390.5L408.5 390.5L408.5 391.5L405.5 394.5L404.5 394.5ZM401.5 396.5L404.5 393.5L405.5 393.5L405.5 394.5L402.5 397.5L401.5 397.5ZM398.5 398.5L401.5 396.5L402.5 396.5L402.5 397.5L399.5 399.5L398.5 399.5ZM396.5 401.5L398.5 398.5L399.5 398.5L399.5 399.5L397.5 402.5L396.5 402.5ZM393.5 404.5L396.5 401.5L397.5 401.5L397.5 402.5L394.5 405.5L393.5 405.5ZM390.5 407.5L393.5 404.5L394.5 404.5L394.5 405.5L391.5 408.5L390.5 408.5ZM387.5 409.5L390.5 407.5L391.5 407.5L391.5 408.5L388.5 410.5L387.5 410.5ZM384.5 412.5L387.5 409.5L388.5 409.5L388.5 410.5L385.5 413.5L384.5 413.5ZM381.5 414.5L384.5 412.5L385.5 412.5L385.5 413.5L382.5 415.5L381.5 415.5ZM378.5 417.5L381.5 414.5L382.5 414.5L382.5 415.5L379.5 418.5L378.5 418.5ZM374.5 419.5L378.5 417.5L379.5 417.5L379.5 418.5L375.5 420.5L374.5 420.5ZM371.5 422.5L374.5 419.5L375.5 419.5L375.5 420.5L372.5 423.5L371.5 423.5ZM368.5 424.5L371.5 422.5L372.5 422.5L372.5 423.5L369.5 425.5L368.5 425.5ZM365.5 426.5L368.5 424.5L369.5 424.5L369.5 425.5L366.5 427.5L365.5 427.5ZM361.5 428.5L365.5 426.5L366.5 426.5L366.5 427.5L362.5 429.5L361.5 429.5ZM358.5 430.5L361.5 428.5L362.5 428.5L362.5 429.5L359.5 431.5L358.5 431.5ZM355.5 433.5L358.5 430.5L359.5 430.5L359.5 431.5L356.5 434.5L355.5 434.5ZM351.5 435.5L355.5 433.5L356.5 433.5L356.5 434.5L352.5 436.5L351.5 436.5ZM348.5 436.5L351.5 435.5L352.5 435.5L352.5 436.5L349.5 437.5L348.5 437.5ZM344.5 438.5L348.5 436.5L349.5 436.5L349.5 437.5L345.5 439.5L344.5 439.5ZM341.5 440.5L344.5 438.5L345.5 438.5L345.5 439.5L342.5 441.5L341.5 441.5ZM337.5 442.5L341.5 440.5L342.5 440.5L342.5 441.5L338.5 443.5L337.5 443.5ZM334.5 444.5L337.5 442.5L338.5 442.5L338.5 443.5L335.5 445.5L334.5 445.5ZM330.5 445.5L334.5 444.5L335.5 444.5L335.5 445.5L331.5 446.5L330.5 446.5ZM326.5 447.5L330.5 445.5L331.5 445.5L331.5 446.5L327.5 448.5L326.5 448.5ZM323.5 448.5L326.5 447.5L327.5 447.5L327.5 448.5L324.5 449.5L323.5 449.5ZM319.5 450.5L323.5 448.5L324.5 448.5L324.5 449.5L320.5 451.5L319.5 451.5ZM315.5 451.5L319.5 450.5L320.5 450.5L320.5 451.5L316.5 452.5L315.5 452.5ZM312.5 453.5L315.5 451.5L316.5 451.5L316.5 452.5L313.5 454.5L312.5 454.5ZM308.5 454.5L312.5 453.5L313.5 453.5L313.5 454.5L309.5 455.5L308.5 455.5ZM304.5 455.5L308.5 454.5L309.5 454.5L309.5 455.5L305.5 456.5L304.5 456.5ZM300.5 456.5L304.5 455.5L305.5 455.5L305.5 456.5L301.5 457.5L300.5 457.5ZM296.5 457.5L300.5 456.5L301.5 456.5L301.5 457.5L297.5 458.5L296.5 458.5ZM293.5 458.5L296.5 457.5L297.5 457.5L297.5 458.5L294.5 459.5L293.5 459.5ZM289.5 459.5L293.5 458.5L294.5 458.5L294.5 459.5L290.5 460.5L289.5 460.5ZM285.5 460.5L289.5 459.5L290.5 459.5L290.5 460.5L286.5 461.5L285.5 461.5ZM281.5 461.5L285.5 460.5L286.5 460.5L286.5 461.5L282.5 462.5L281.5 462.5ZM277.5 462.5L281.5 461.5L282.5 461.5L282.5 462.5L278.5 463.5L277.5 463.5ZM273.5 462.5H278.5V463.5H273.5ZM269.5 463.5L273.5 462.5L274.5 462.5L274.5 463.5L270.5 464.5L269.5 464.5ZM265.5 463.5H270.5V464.5H265.5ZM261.5 464.5L265.5 463.5L266.5 463.5L266.5 464.5L262.5 465.5L261.5 465.5ZM257.5 464.5H262.5V465.5H257.5ZM253.5 464.5H258.5V465.5H253.5ZM249.5 465.5L253.5 464.5L254.5 464.5L254.5 465.5L250.5 466.5L249.5 466.5ZM245.5 465.5H250.5V466.5H245.5ZM241.5 465.5H246.5V466.5H241.5ZM238.5 465.5H242.5V466.5H238.5ZM235.5 465.5H239.5V466.5H235.5ZM231.5 465.5H236.5V466.5H231.5ZM227.5 465.5H232.5V466.5H227.5ZM223.5 464.5L224.5 464.5L228.5 465.5L228.5 466.5L227.5 466.5L223.5 465.5ZM219.5 464.5H224.5V465.5H219.5ZM215.5 464.5H220.5V465.5H215.5ZM211.5 463.5L212.5 463.5L216.5 464.5L216.5 465.5L215.5 465.5L211.5 464.5ZM207.5 463.5H212.5V464.5H207.5ZM203.5 462.5L204.5 462.5L208.5 463.5L208.5 464.5L207.5 464.5L203.5 463.5ZM199.5 462.5H204.5V463.5H199.5ZM195.5 461.5L196.5 461.5L200.5 462.5L200.5 463.5L199.5 463.5L195.5 462.5ZM191.5 460.5L192.5 460.5L196.5 461.5L196.5 462.5L195.5 462.5L191.5 461.5ZM187.5 459.5L188.5 459.5L192.5 460.5L192.5 461.5L191.5 461.5L187.5 460.5ZM183.5 458.5L184.5 458.5L188.5 459.5L188.5 460.5L187.5 460.5L183.5 459.5ZM180.5 457.5L181.5 457.5L184.5 458.5L184.5 459.5L183.5 459.5L180.5 458.5ZM176.5 456.5L177.5 456.5L181.5 457.5L181.5 458.5L180.5 458.5L176.5 457.5ZM172.5 455.5L173.5 455.5L177.5 456.5L177.5 457.5L176.5 457.5L172.5 456.5ZM168.5 454.5L169.5 454.5L173.5 455.5L173.5 456.5L172.5 456.5L168.5 455.5ZM164.5 453.5L165.5 453.5L169.5 454.5L169.5 455.5L168.5 455.5L164.5 454.5ZM161.5 451.5L162.5 451.5L165.5 453.5L165.5 454.5L164.5 454.5L161.5 452.5ZM157.5 450.5L158.5 450.5L162.5 451.5L162.5 452.5L161.5 452.5L157.5 451.5ZM153.5 448.5L154.5 448.5L158.5 450.5L158.5 451.5L157.5 451.5L153.5 449.5ZM150.5 447.5L151.5 447.5L154.5 448.5L154.5 449.5L153.5 449.5L150.5 448.5ZM146.5 445.5L147.5 445.5L151.5 447.5L151.5 448.5L150.5 448.5L146.5 446.5ZM142.5 444.5L143.5 444.5L147.5 445.5L147.5 446.5L146.5 446.5L142.5 445.5ZM139.5 442.5L140.5 442.5L143.5 444.5L143.5 445.5L142.5 445.5L139.5 443.5ZM135.5 440.5L136.5 440.5L140.5 442.5L140.5 443.5L139.5 443.5L135.5 441.5ZM132.5 438.5L133.5 438.5L136.5 440.5L136.5 441.5L135.5 441.5L132.5 439.5ZM128.5 436.5L129.5 436.5L133.5 438.5L133.5 439.5L132.5 439.5L128.5 437.5ZM125.5 435.5L126.5 435.5L129.5 436.5L129.5 437.5L128.5 437.5L125.5 436.5ZM121.5 433.5L122.5 433.5L126.5 435.5L126.5 436.5L125.5 436.5L121.5 434.5ZM118.5 430.5L119.5 430.5L122.5 433.5L122.5 434.5L121.5 434.5L118.5 431.5ZM115.5 428.5L116.5 428.5L119.5 430.5L119.5 431.5L118.5 431.5L115.5 429.5ZM111.5 426.5L112.5 426.5L116.5 428.5L116.5 429.5L115.5 429.5L111.5 427.5ZM108.5 424.5L109.5 424.5L112.5 426.5L112.5 427.5L111.5 427.5L108.5 425.5ZM105.5 422.5L106.5 422.5L109.5 424.5L109.5 425.5L108.5 425.5L105.5 423.5ZM102.5 419.5L103.5 419.5L106.5 422.5L106.5 423.5L105.5 423.5L102.5 420.5ZM98.5 417.5L99.5 417.5L103.5 419.5L103.5 420.5L102.5 420.5L98.5 418.5ZM95.5 414.5L96.5 414.5L99.5 417.5L99.5 418.5L98.5 418.5L95.5 415.5ZM92.5 412.5L93.5 412.5L96.5 414.5L96.5 415.5L95.5 415.5L92.5 413.5ZM89.5 409.5L90.5 409.5L93.5 412.5L93.5 413.5L92.5 413.5L89.5 410.5ZM86.5 407.5L87.5 407.5L90.5 409.5L90.5 410.5L89.5 410.5L86.5 408.5ZM83.5 404.5L84.5 404.5L87.5 407.5L87.5 408.5L86.5 408.5L83.5 405.5ZM80.5 401.5L81.5 401.5L84.5 404.5L84.5 405.5L83.5 405.5L80.5 402.5ZM78.5 398.5L79.5 398.5L81.5 401.5L81.5 402.5L80.5 402.5L78.5 399.5ZM75.5 396.5L76.5 396.5L79.5 398.5L79.5 399.5L78.5 399.5L75.5 397.5ZM72.5 393.5L73.5 393.5L76.5 396.5L76.5 397.5L75.5 397.5L72.5 394.5ZM69.5 390.5L70.5 390.5L73.5 393.5L73.5 394.5L72.5 394.5L69.5 391.5ZM67.5 387.5L68.5 387.5L70.5 390.5L70.5 391.5L69.5 391.5L67.5 388.5ZM64.5 384.5L65.5 384.5L68.5 387.5L68.5 388.5L67.5 388.5L64.5 385.5ZM62.5 381.5L63.5 381.5L65.5 384.5L65.5 385.5L64.5 385.5L62.5 382.5ZM59.5 378.5L60.5 378.5L63.5 381.5L63.5 382.5L62.5 382.5L59.5 379.5ZM57.5 374.5L58.5 374.5L60.5 378.5L60.5 379.5L59.5 379.5L57.5 375.5ZM54.5 371.5L55.5 371.5L58.5 374.5L58.5 375.5L57.5 375.5L54.5 372.5ZM52.5 368.5L53.5 368.5L55.5 371.5L55.5 372.5L54.5 372.5L52.5 369.5ZM50.5 365.5L51.5 365.5L53.5 368.5L53.5 369.5L52.5 369.5L50.5 366.5ZM48.5 361.5L49.5 361.5L51.5 365.5L51.5 366.5L50.5 366.5L48.5 362.5ZM46.5 358.5L47.5 358.5L49.5 361.5L49.5 362.5L48.5 362.5L46.5 359.5ZM43.5 355.5L44.5 355.5L47.5 358.5L47.5 359.5L46.5 359.5L43.5 356.5ZM41.5 351.5L42.5 351.5L44.5 355.5L44.5 356.5L43.5 356.5L41.5 352.5ZM40.5 348.5L41.5 348.5L42.5 351.5L42.5 352.5L41.5 352.5L40.5 349.5ZM38.5 344.5L39.5 344.5L41.5 348.5L41.5 349.5L40.5 349.5L38.5 345.5ZM36.5 341.5L37.5 341.5L39.5 344.5L39.5 345.5L38.5 345.5L36.5 342.5ZM34.5 337.5L35.5 337.5L37.5 341.5L37.5 342.5L36.5 342.5L34.5 338.5ZM32.5 334.5L33.5 334.5L35.5 337.5L35.5 338.5L34.5 338.5L32.5 335.5ZM31.5 330.5L32.5 330.5L33.5 334.5L33.5 335.5L32.5 335.5L31.5 331.5ZM29.5 326.5L30.5 326.5L32.5 330.5L32.5 331.5L31.5 331.5L29.5 327.5ZM28.5 323.5L29.5 323.5L30.5 326.5L30.5 327.5L29.5 327.5L28.5 324.5ZM26.5 319.5L27.5 319.5L29.5 323.5L29.5 324.5L28.5 324.5L26.5 320.5ZM25.5 315.5L26.5 315.5L27.5 319.5L27.5 320.5L26.5 320.5L25.5 316.5ZM23.5 312.5L24.5 312.5L26.5 315.5L26.5 316.5L25.5 316.5L23.5 313.5ZM22.5 308.5L23.5 308.5L24.5 312.5L24.5 313.5L23.5 313.5L22.5 309.5ZM21.5 304.5L22.5 304.5L23.5 308.5L23.5 309.5L22.5 309.5L21.5 305.5ZM20.5 300.5L21.5 300.5L22.5 304.5L22.5 305.5L21.5 305.5L20.5 301.5ZM19.5 296.5L20.5 296.5L21.5 300.5L21.5 301.5L20.5 301.5L19.5 297.5ZM18.5 293.5L19.5 293.5L20.5 296.5L20.5 297.5L19.5 297.5L18.5 294.5ZM17.5 289.5L18.5 289.5L19.5 293.5L19.5 294.5L18.5 294.5L17.5 290.5ZM16.5 285.5L17.5 285.5L18.5 289.5L18.5 290.5L17.5 290.5L16.5 286.5ZM15.5 281.5L16.5 281.5L17.5 285.5L17.5 286.5L16.5 286.5L15.5 282.5ZM14.5 277.5L15.5 277.5L16.5 281.5L16.5 282.5L15.5 282.5L14.5 278.5ZM14.5 273.5H15.5V278.5H14.5ZM13.5 269.5L14.5 269.5L15.5 273.5L15.5 274.5L14.5 274.5L13.5 270.5ZM13.5 265.5H14.5V270.5H13.5ZM12.5 261.5L13.5 261.5L14.5 265.5L14.5 266.5L13.5 266.5L12.5 262.5ZM12.5 257.5H13.5V262.5H12.5ZM12.5 253.5H13.5V258.5H12.5ZM11.5 249.5L12.5 249.5L13.5 253.5L13.5 254.5L12.5 254.5L11.5 250.5ZM11.5 245.5H12.5V250.5H11.5ZM11.5 241.5H12.5V246.5H11.5ZM11.5 238.5H12.5V242.5H11.5ZM11.5 235.5H12.5V239.5H11.5ZM11.5 231.5H12.5V236.5H11.5ZM11.5 227.5H12.5V232.5H11.5ZM11.5 227.5L12.5 223.5L13.5 223.5L13.5 224.5L12.5 228.5L11.5 228.5ZM12.5 219.5H13.5V224.5H12.5ZM12.5 215.5H13.5V220.5H12.5ZM12.5 215.5L13.5 211.5L14.5 211.5L14.5 212.5L13.5 216.5L12.5 216.5ZM13.5 207.5H14.5V212.5H13.5ZM13.5 207.5L14.5 203.5L15.5 203.5L15.5 204.5L14.5 208.5L13.5 208.5ZM14.5 199.5H15.5V204.5H14.5ZM14.5 199.5L15.5 195.5L16.5 195.5L16.5 196.5L15.5 200.5L14.5 200.5ZM15.5 195.5L16.5 191.5L17.5 191.5L17.5 192.5L16.5 196.5L15.5 196.5ZM16.5 191.5L17.5 187.5L18.5 187.5L18.5 188.5L17.5 192.5L16.5 192.5ZM17.5 187.5L18.5 183.5L19.5 183.5L19.5 184.5L18.5 188.5L17.5 188.5ZM18.5 183.5L19.5 180.5L20.5 180.5L20.5 181.5L19.5 184.5L18.5 184.5ZM19.5 180.5L20.5 176.5L21.5 176.5L21.5 177.5L20.5 181.5L19.5 181.5ZM20.5 176.5L21.5 172.5L22.5 172.5L22.5 173.5L21.5 177.5L20.5 177.5ZM21.5 172.5L22.5 168.5L23.5 168.5L23.5 169.5L22.5 173.5L21.5 173.5ZM22.5 168.5L23.5 164.5L24.5 164.5L24.5 165.5L23.5 169.5L22.5 169.5ZM23.5 164.5L25.5 161.5L26.5 161.5L26.5 162.5L24.5 165.5L23.5 165.5ZM25.5 161.5L26.5 157.5L27.5 157.5L27.5 158.5L26.5 162.5L25.5 162.5ZM26.5 157.5L28.5 153.5L29.5 153.5L29.5 154.5L27.5 158.5L26.5 158.5ZM28.5 153.5L29.5 150.5L30.5 150.5L30.5 151.5L29.5 154.5L28.5 154.5ZM29.5 150.5L31.5 146.5L32.5 146.5L32.5 147.5L30.5 151.5L29.5 151.5ZM31.5 146.5L32.5 142.5L33.5 142.5L33.5 143.5L32.5 147.5L31.5 147.5ZM32.5 142.5L34.5 139.5L35.5 139.5L35.5 140.5L33.5 143.5L32.5 143.5ZM34.5 139.5L36.5 135.5L37.5 135.5L37.5 136.5L35.5 140.5L34.5 140.5ZM36.5 135.5L38.5 132.5L39.5 132.5L39.5 133.5L37.5 136.5L36.5 136.5ZM38.5 132.5L40.5 128.5L41.5 128.5L41.5 129.5L39.5 133.5L38.5 133.5ZM40.5 128.5L41.5 125.5L42.5 125.5L42.5 126.5L41.5 129.5L40.5 129.5ZM41.5 125.5L43.5 121.5L44.5 121.5L44.5 122.5L42.5 126.5L41.5 126.5ZM43.5 121.5L46.5 118.5L47.5 118.5L47.5 119.5L44.5 122.5L43.5 122.5ZM46.5 118.5L48.5 115.5L49.5 115.5L49.5 116.5L47.5 119.5L46.5 119.5ZM48.5 115.5L50.5 111.5L51.5 111.5L51.5 112.5L49.5 116.5L48.5 116.5ZM50.5 111.5L52.5 108.5L53.5 108.5L53.5 109.5L51.5 112.5L50.5 112.5ZM52.5 108.5L54.5 105.5L55.5 105.5L55.5 106.5L53.5 109.5L52.5 109.5ZM54.5 105.5L57.5 102.5L58.5 102.5L58.5 103.5L55.5 106.5L54.5 106.5ZM57.5 102.5L59.5 98.5L60.5 98.5L60.5 99.5L58.5 103.5L57.5 103.5ZM59.5 98.5L62.5 95.5L63.5 95.5L63.5 96.5L60.5 99.5L59.5 99.5ZM62.5 95.5L64.5 92.5L65.5 92.5L65.5 93.5L63.5 96.5L62.5 96.5ZM64.5 92.5L67.5 89.5L68.5 89.5L68.5 90.5L65.5 93.5L64.5 93.5ZM67.5 89.5L69.5 86.5L70.5 86.5L70.5 87.5L68.5 90.5L67.5 90.5ZM69.5 86.5L72.5 83.5L73.5 83.5L73.5 84.5L70.5 87.5L69.5 87.5ZM72.5 83.5L75.5 80.5L76.5 80.5L76.5 81.5L73.5 84.5L72.5 84.5ZM75.5 80.5L78.5 78.5L79.5 78.5L79.5 79.5L76.5 81.5L75.5 81.5ZM78.5 78.5L80.5 75.5L81.5 75.5L81.5 76.5L79.5 79.5L78.5 79.5ZM80.5 75.5L83.5 72.5L84.5 72.5L84.5 73.5L81.5 76.5L80.5 76.5ZM83.5 72.5L86.5 69.5L87.5 69.5L87.5 70.5L84.5 73.5L83.5 73.5ZM86.5 69.5L89.5 67.5L90.5 67.5L90.5 68.5L87.5 70.5L86.5 70.5ZM89.5 67.5L92.5 64.5L93.5 64.5L93.5 65.5L90.5 68.5L89.5 68.5ZM92.5 64.5L95.5 62.5L96.5 62.5L96.5 63.5L93.5 65.5L92.5 65.5ZM95.5 62.5L98.5 59.5L99.5 59.5L99.5 60.5L96.5 63.5L95.5 63.5ZM98.5 59.5L102.5 57.5L103.5 57.5L103.5 58.5L99.5 60.5L98.5 60.5ZM102.5 57.5L105.5 54.5L106.5 54.5L106.5 55.5L103.5 58.5L102.5 58.5ZM105.5 54.5L108.5 52.5L109.5 52.5L109.5 53.5L106.5 55.5L105.5 55.5ZM108.5 52.5L111.5 50.5L112.5 50.5L112.5 51.5L109.5 53.5L108.5 53.5ZM111.5 50.5L115.5 48.5L116.5 48.5L116.5 49.5L112.5 51.5L111.5 51.5ZM115.5 48.5L118.5 46.5L119.5 46.5L119.5 47.5L116.5 49.5L115.5 49.5ZM118.5 46.5L121.5 43.5L122.5 43.5L122.5 44.5L119.5 47.5L118.5 47.5ZM121.5 43.5L125.5 41.5L126.5 41.5L126.5 42.5L122.5 44.5L121.5 44.5ZM125.5 41.5L128.5 40.5L129.5 40.5L129.5 41.5L126.5 42.5L125.5 42.5ZM128.5 40.5L132.5 38.5L133.5 38.5L133.5 39.5L129.5 41.5L128.5 41.5ZM132.5 38.5L135.5 36.5L136.5 36.5L136.5 37.5L133.5 39.5L132.5 39.5ZM135.5 36.5L139.5 34.5L140.5 34.5L140.5 35.5L136.5 37.5L135.5 37.5ZM139.5 34.5L142.5 32.5L143.5 32.5L143.5 33.5L140.5 35.5L139.5 35.5ZM142.5 32.5L146.5 31.5L147.5 31.5L147.5 32.5L143.5 33.5L142.5 33.5ZM146.5 31.5L150.5 29.5L151.5 29.5L151.5 30.5L147.5 32.5L146.5 32.5ZM150.5 29.5L153.5 28.5L154.5 28.5L154.5 29.5L151.5 30.5L150.5 30.5ZM153.5 28.5L157.5 26.5L158.5 26.5L158.5 27.5L154.5 29.5L153.5 29.5ZM157.5 26.5L161.5 25.5L162.5 25.5L162.5 26.5L158.5 27.5L157.5 27.5ZM161.5 25.5L164.5 23.5L165.5 23.5L165.5 24.5L162.5 26.5L161.5 26.5ZM164.5 23.5L168.5 22.5L169.5 22.5L169.5 23.5L165.5 24.5L164.5 24.5ZM168.5 22.5L172.5 21.5L173.5 21.5L173.5 22.5L169.5 23.5L168.5 23.5ZM172.5 21.5L176.5 20.5L177.5 20.5L177.5 21.5L173.5 22.5L172.5 22.5ZM176.5 20.5L180.5 19.5L181.5 19.5L181.5 20.5L177.5 21.5L176.5 21.5ZM180.5 19.5L183.5 18.5L184.5 18.5L184.5 19.5L181.5 20.5L180.5 20.5ZM183.5 18.5L187.5 17.5L188.5 17.5L188.5 18.5L184.5 19.5L183.5 19.5ZM187.5 17.5L191.5 16.5L192.5 16.5L192.5 17.5L188.5 18.5L187.5 18.5ZM191.5 16.5L195.5 15.5L196.5 15.5L196.5 16.5L192.5 17.5L191.5 17.5ZM195.5 15.5L199.5 14.5L200.5 14.5L200.5 15.5L196.5 16.5L195.5 16.5ZM199.5 14.5H204.5V15.5H199.5ZM203.5 14.5L207.5 13.5L208.5 13.5L208.5 14.5L204.5 15.5L203.5 15.5ZM207.5 13.5H212.5V14.5H207.5ZM211.5 13.5L215.5 12.5L216.5 12.5L216.5 13.5L212.5 14.5L211.5 14.5ZM215.5 12.5H220.5V13.5H215.5ZM219.5 12.5H224.5V13.5H219.5ZM223.5 12.5L227.5 11.5L228.5 11.5L228.5 12.5L224.5 13.5L223.5 13.5ZM227.5 11.5H232.5V12.5H227.5ZM231.5 11.5H236.5V12.5H231.5ZM235.5 11.5H239.5V12.5H235.5ZM238.5 11.5H242.5V12.5H238.5ZM241.5 11.5H246.5V12.5H241.5ZM245.5 11.5H250.5V12.5H245.5ZM249.5 11.5L250.5 11.5L254.5 12.5L254.5 13.5L253.5 13.5L249.5 12.5ZM253.5 12.5H258.5V13.5H253.5ZM257.5 12.5H262.5V13.5H257.5ZM261.5 12.5L262.5 12.5L266.5 13.5L266.5 14.5L265.5 14.5L261.5 13.5ZM265.5 13.5H270.5V14.5H265.5ZM269.5 13.5L270.5 13.5L274.5 14.5L274.5 15.5L273.5 15.5L269.5 14.5ZM273.5 14.5H278.5V15.5H273.5ZM277.5 14.5L278.5 14.5L282.5 15.5L282.5 16.5L281.5 16.5L277.5 15.5ZM281.5 15.5L282.5 15.5L286.5 16.5L286.5 17.5L285.5 17.5L281.5 16.5ZM285.5 16.5L286.5 16.5L290.5 17.5L290.5 18.5L289.5 18.5L285.5 17.5ZM289.5 17.5L290.5 17.5L294.5 18.5L294.5 19.5L293.5 19.5L289.5 18.5ZM293.5 18.5L294.5 18.5L297.5 19.5L297.5 20.5L296.5 20.5L293.5 19.5ZM296.5 19.5L297.5 19.5L301.5 20.5L301.5 21.5L300.5 21.5L296.5 20.5ZM300.5 20.5L301.5 20.5L305.5 21.5L305.5 22.5L304.5 22.5L300.5 21.5ZM304.5 21.5L305.5 21.5L309.5 22.5L309.5 23.5L308.5 23.5L304.5 22.5ZM308.5 22.5L309.5 22.5L313.5 23.5L313.5 24.5L312.5 24.5L308.5 23.5ZM312.5 23.5L313.5 23.5L316.5 25.5L316.5 26.5L315.5 26.5L312.5 24.5ZM315.5 25.5L316.5 25.5L320.5 26.5L320.5 27.5L319.5 27.5L315.5 26.5ZM319.5 26.5L320.5 26.5L324.5 28.5L324.5 29.5L323.5 29.5L319.5 27.5ZM323.5 28.5L324.5 28.5L327.5 29.5L327.5 30.5L326.5 30.5L323.5 29.5ZM326.5 29.5L327.5 29.5L331.5 31.5L331.5 32.5L330.5 32.5L326.5 30.5ZM330.5 31.5L331.5 31.5L335.5 32.5L335.5 33.5L334.5 33.5L330.5 32.5ZM334.5 32.5L335.5 32.5L338.5 34.5L338.5 35.5L337.5 35.5L334.5 33.5ZM337.5 34.5L338.5 34.5L342.5 36.5L342.5 37.5L341.5 37.5L337.5 35.5ZM341.5 36.5L342.5 36.5L345.5 38.5L345.5 39.5L344.5 39.5L341.5 37.5ZM344.5 38.5L345.5 38.5L349.5 40.5L349.5 41.5L348.5 41.5L344.5 39.5ZM348.5 40.5L349.5 40.5L352.5 41.5L352.5 42.5L351.5 42.5L348.5 41.5ZM351.5 41.5L352.5 41.5L356.5 43.5L356.5 44.5L355.5 44.5L351.5 42.5ZM355.5 43.5L356.5 43.5L359.5 46.5L359.5 47.5L358.5 47.5L355.5 44.5ZM358.5 46.5L359.5 46.5L362.5 48.5L362.5 49.5L361.5 49.5L358.5 47.5ZM361.5 48.5L362.5 48.5L366.5 50.5L366.5 51.5L365.5 51.5L361.5 49.5ZM365.5 50.5L366.5 50.5L369.5 52.5L369.5 53.5L368.5 53.5L365.5 51.5ZM368.5 52.5L369.5 52.5L372.5 54.5L372.5 55.5L371.5 55.5L368.5 53.5ZM371.5 54.5L372.5 54.5L375.5 57.5L375.5 58.5L374.5 58.5L371.5 55.5ZM374.5 57.5L375.5 57.5L379.5 59.5L379.5 60.5L378.5 60.5L374.5 58.5ZM378.5 59.5L379.5 59.5L382.5 62.5L382.5 63.5L381.5 63.5L378.5 60.5ZM381.5 62.5L382.5 62.5L385.5 64.5L385.5 65.5L384.5 65.5L381.5 63.5ZM384.5 64.5L385.5 64.5L388.5 67.5L388.5 68.5L387.5 68.5L384.5 65.5ZM387.5 67.5L388.5 67.5L391.5 69.5L391.5 70.5L390.5 70.5L387.5 68.5ZM390.5 69.5L391.5 69.5L394.5 72.5L394.5 73.5L393.5 73.5L390.5 70.5ZM393.5 72.5L394.5 72.5L397.5 75.5L397.5 76.5L396.5 76.5L393.5 73.5ZM396.5 75.5L397.5 75.5L399.5 78.5L399.5 79.5L398.5 79.5L396.5 76.5ZM398.5 78.5L399.5 78.5L402.5 80.5L402.5 81.5L401.5 81.5L398.5 79.5ZM401.5 80.5L402.5 80.5L405.5 83.5L405.5 84.5L404.5 84.5L401.5 81.5ZM404.5 83.5L405.5 83.5L408.5 86.5L408.5 87.5L407.5 87.5L404.5 84.5ZM407.5 86.5L408.5 86.5L410.5 89.5L410.5 90.5L409.5 90.5L407.5 87.5ZM409.5 89.5L410.5 89.5L413.5 92.5L413.5 93.5L412.5 93.5L409.5 90.5ZM412.5 92.5L413.5 92.5L415.5 95.5L415.5 96.5L414.5 96.5L412.5 93.5ZM414.5 95.5L415.5 95.5L418.5 98.5L418.5 99.5L417.5 99.5L414.5 96.5ZM417.5 98.5L418.5 98.5L420.5 102.5L420.5 103.5L419.5 103.5L417.5 99.5ZM419.5 102.5L420.5 102.5L423.5 105.5L423.5 106.5L422.5 106.5L419.5 103.5ZM422.5 105.5L423.5 105.5L425.5 108.5L425.5 109.5L424.5 109.5L422.5 106.5ZM424.5 108.5L425.5 108.5L427.5 111.5L427.5 112.5L426.5 112.5L424.5 109.5ZM426.5 111.5L427.5 111.5L429.5 115.5L429.5 116.5L428.5 116.5L426.5 112.5ZM428.5 115.5L429.5 115.5L431.5 118.5L431.5 119.5L430.5 119.5L428.5 116.5ZM430.5 118.5L431.5 118.5L434.5 121.5L434.5 122.5L433.5 122.5L430.5 119.5ZM433.5 121.5L434.5 121.5L436.5 125.5L436.5 126.5L435.5 126.5L433.5 122.5ZM435.5 125.5L436.5 125.5L437.5 128.5L437.5 129.5L436.5 129.5L435.5 126.5ZM436.5 128.5L437.5 128.5L439.5 132.5L439.5 133.5L438.5 133.5L436.5 129.5ZM438.5 132.5L439.5 132.5L441.5 135.5L441.5 136.5L440.5 136.5L438.5 133.5ZM440.5 135.5L441.5 135.5L443.5 139.5L443.5 140.5L442.5 140.5L440.5 136.5ZM442.5 139.5L443.5 139.5L445.5 142.5L445.5 143.5L444.5 143.5L442.5 140.5ZM444.5 142.5L445.5 142.5L446.5 146.5L446.5 147.5L445.5 147.5L444.5 143.5ZM445.5 146.5L446.5 146.5L448.5 150.5L448.5 151.5L447.5 151.5L445.5 147.5ZM447.5 150.5L448.5 150.5L449.5 153.5L449.5 154.5L448.5 154.5L447.5 151.5ZM448.5 153.5L449.5 153.5L451.5 157.5L451.5 158.5L450.5 158.5L448.5 154.5ZM450.5 157.5L451.5 157.5L452.5 161.5L452.5 162.5L451.5 162.5L450.5 158.5ZM451.5 161.5L452.5 161.5L454.5 164.5L454.5 165.5L453.5 165.5L451.5 162.5ZM453.5 164.5L454.5 164.5L455.5 168.5L455.5 169.5L454.5 169.5L453.5 165.5ZM454.5 168.5L455.5 168.5L456.5 172.5L456.5 173.5L455.5 173.5L454.5 169.5ZM455.5 172.5L456.5 172.5L457.5 176.5L457.5 177.5L456.5 177.5L455.5 173.5ZM456.5 176.5L457.5 176.5L458.5 180.5L458.5 181.5L457.5 181.5L456.5 177.5ZM457.5 180.5L458.5 180.5L459.5 183.5L459.5 184.5L458.5 184.5L457.5 181.5ZM458.5 183.5L459.5 183.5L460.5 187.5L460.5 188.5L459.5 188.5L458.5 184.5ZM459.5 187.5L460.5 187.5L461.5 191.5L461.5 192.5L460.5 192.5L459.5 188.5ZM460.5 191.5L461.5 191.5L462.5 195.5L462.5 196.5L461.5 196.5L460.5 192.5ZM461.5 195.5L462.5 195.5L463.5 199.5L463.5 200.5L462.5 200.5L461.5 196.5ZM462.5 199.5H463.5V204.5H462.5ZM462.5 203.5L463.5 203.5L464.5 207.5L464.5 208.5L463.5 208.5L462.5 204.5ZM463.5 207.5H464.5V212.5H463.5ZM463.5 211.5L464.5 211.5L465.5 215.5L465.5 216.5L464.5 216.5L463.5 212.5ZM464.5 215.5H465.5V220.5H464.5ZM464.5 219.5H465.5V224.5H464.5ZM464.5 223.5L465.5 223.5L466.5 227.5L466.5 228.5L465.5 228.5L464.5 224.5ZM465.5 227.5H466.5V232.5H465.5ZM465.5 231.5H466.5V236.5H465.5ZM465.5 235.5H466.5V239.5H465.5ZM429.5 238.5H430.5V242.5H429.5ZM429.5 241.5H430.5V245.5H429.5ZM429.5 244.5H430.5V249.5H429.5ZM429.5 248.5H430.5V252.5H429.5ZM428.5 254.5L429.5 251.5L430.5 251.5L430.5 252.5L429.5 255.5L428.5 255.5ZM428.5 254.5H429.5V259.5H428.5ZM428.5 258.5H429.5V262.5H428.5ZM427.5 264.5L428.5 261.5L429.5 261.5L429.5 262.5L428.5 265.5L427.5 265.5ZM427.5 264.5H428.5V268.5H427.5ZM426.5 271.5L427.5 267.5L428.5 267.5L428.5 268.5L427.5 272.5L426.5 272.5ZM425.5 274.5L426.5 271.5L427.5 271.5L427.5 272.5L426.5 275.5L425.5 275.5ZM425.5 274.5H426.5V278.5H425.5ZM424.5 281.5L425.5 277.5L426.5 277.5L426.5 278.5L425.5 282.5L424.5 282.5ZM423.5 284.5L424.5 281.5L425.5 281.5L425.5 282.5L424.5 285.5L423.5 285.5ZM422.5 287.5L423.5 284.5L424.5 284.5L424.5 285.5L423.5 288.5L422.5 288.5ZM422.5 287.5H423.5V291.5H422.5ZM421.5 293.5L422.5 290.5L423.5 290.5L423.5 291.5L422.5 294.5L421.5 294.5ZM420.5 297.5L421.5 293.5L422.5 293.5L422.5 294.5L421.5 298.5L420.5 298.5ZM419.5 300.5L420.5 297.5L421.5 297.5L421.5 298.5L420.5 301.5L419.5 301.5ZM417.5 303.5L419.5 300.5L420.5 300.5L420.5 301.5L418.5 304.5L417.5 304.5ZM416.5 306.5L417.5 303.5L418.5 303.5L418.5 304.5L417.5 307.5L416.5 307.5ZM415.5 309.5L416.5 306.5L417.5 306.5L417.5 307.5L416.5 310.5L415.5 310.5ZM414.5 312.5L415.5 309.5L416.5 309.5L416.5 310.5L415.5 313.5L414.5 313.5ZM412.5 315.5L414.5 312.5L415.5 312.5L415.5 313.5L413.5 316.5L412.5 316.5ZM411.5 318.5L412.5 315.5L413.5 315.5L413.5 316.5L412.5 319.5L411.5 319.5ZM410.5 321.5L411.5 318.5L412.5 318.5L412.5 319.5L411.5 322.5L410.5 322.5ZM408.5 324.5L410.5 321.5L411.5 321.5L411.5 322.5L409.5 325.5L408.5 325.5ZM407.5 327.5L408.5 324.5L409.5 324.5L409.5 325.5L408.5 328.5L407.5 328.5ZM405.5 330.5L407.5 327.5L408.5 327.5L408.5 328.5L406.5 331.5L405.5 331.5ZM403.5 333.5L405.5 330.5L406.5 330.5L406.5 331.5L404.5 334.5L403.5 334.5ZM402.5 336.5L403.5 333.5L404.5 333.5L404.5 334.5L403.5 337.5L402.5 337.5ZM400.5 339.5L402.5 336.5L403.5 336.5L403.5 337.5L401.5 340.5L400.5 340.5ZM398.5 342.5L400.5 339.5L401.5 339.5L401.5 340.5L399.5 343.5L398.5 343.5ZM396.5 345.5L398.5 342.5L399.5 342.5L399.5 343.5L397.5 346.5L396.5 346.5ZM394.5 347.5L396.5 345.5L397.5 345.5L397.5 346.5L395.5 348.5L394.5 348.5ZM392.5 350.5L394.5 347.5L395.5 347.5L395.5 348.5L393.5 351.5L392.5 351.5ZM390.5 353.5L392.5 350.5L393.5 350.5L393.5 351.5L391.5 354.5L390.5 354.5ZM388.5 355.5L390.5 353.5L391.5 353.5L391.5 354.5L389.5 356.5L388.5 356.5ZM386.5 358.5L388.5 355.5L389.5 355.5L389.5 356.5L387.5 359.5L386.5 359.5ZM384.5 361.5L386.5 358.5L387.5 358.5L387.5 359.5L385.5 362.5L384.5 362.5ZM382.5 363.5L384.5 361.5L385.5 361.5L385.5 362.5L383.5 364.5L382.5 364.5ZM380.5 366.5L382.5 363.5L383.5 363.5L383.5 364.5L381.5 367.5L380.5 367.5ZM378.5 368.5L380.5 366.5L381.5 366.5L381.5 367.5L379.5 369.5L378.5 369.5ZM375.5 371.5L378.5 368.5L379.5 368.5L379.5 369.5L376.5 372.5L375.5 372.5ZM373.5 373.5L375.5 371.5L376.5 371.5L376.5 372.5L374.5 374.5L373.5 374.5ZM371.5 375.5L373.5 373.5L374.5 373.5L374.5 374.5L372.5 376.5L371.5 376.5ZM368.5 378.5L371.5 375.5L372.5 375.5L372.5 376.5L369.5 379.5L368.5 379.5ZM366.5 380.5L368.5 378.5L369.5 378.5L369.5 379.5L367.5 381.5L366.5 381.5ZM363.5 382.5L366.5 380.5L367.5 380.5L367.5 381.5L364.5 383.5L363.5 383.5ZM361.5 384.5L363.5 382.5L364.5 382.5L364.5 383.5L362.5 385.5L361.5 385.5ZM358.5 386.5L361.5 384.5L362.5 384.5L362.5 385.5L359.5 387.5L358.5 387.5ZM355.5 388.5L358.5 386.5L359.5 386.5L359.5 387.5L356.5 389.5L355.5 389.5ZM353.5 390.5L355.5 388.5L356.5 388.5L356.5 389.5L354.5 391.5L353.5 391.5ZM350.5 392.5L353.5 390.5L354.5 390.5L354.5 391.5L351.5 393.5L350.5 393.5ZM347.5 394.5L350.5 392.5L351.5 392.5L351.5 393.5L348.5 395.5L347.5 395.5ZM345.5 396.5L347.5 394.5L348.5 394.5L348.5 395.5L346.5 397.5L345.5 397.5ZM342.5 398.5L345.5 396.5L346.5 396.5L346.5 397.5L343.5 399.5L342.5 399.5ZM339.5 400.5L342.5 398.5L343.5 398.5L343.5 399.5L340.5 401.5L339.5 401.5ZM336.5 402.5L339.5 400.5L340.5 400.5L340.5 401.5L337.5 403.5L336.5 403.5ZM333.5 403.5L336.5 402.5L337.5 402.5L337.5 403.5L334.5 404.5L333.5 404.5ZM330.5 405.5L333.5 403.5L334.5 403.5L334.5 404.5L331.5 406.5L330.5 406.5ZM327.5 407.5L330.5 405.5L331.5 405.5L331.5 406.5L328.5 408.5L327.5 408.5ZM324.5 408.5L327.5 407.5L328.5 407.5L328.5 408.5L325.5 409.5L324.5 409.5ZM321.5 410.5L324.5 408.5L325.5 408.5L325.5 409.5L322.5 411.5L321.5 411.5ZM318.5 411.5L321.5 410.5L322.5 410.5L322.5 411.5L319.5 412.5L318.5 412.5ZM315.5 412.5L318.5 411.5L319.5 411.5L319.5 412.5L316.5 413.5L315.5 413.5ZM312.5 414.5L315.5 412.5L316.5 412.5L316.5 413.5L313.5 415.5L312.5 415.5ZM309.5 415.5L312.5 414.5L313.5 414.5L313.5 415.5L310.5 416.5L309.5 416.5ZM306.5 416.5L309.5 415.5L310.5 415.5L310.5 416.5L307.5 417.5L306.5 417.5ZM303.5 417.5L306.5 416.5L307.5 416.5L307.5 417.5L304.5 418.5L303.5 418.5ZM300.5 419.5L303.5 417.5L304.5 417.5L304.5 418.5L301.5 420.5L300.5 420.5ZM297.5 420.5L300.5 419.5L301.5 419.5L301.5 420.5L298.5 421.5L297.5 421.5ZM293.5 421.5L297.5 420.5L298.5 420.5L298.5 421.5L294.5 422.5L293.5 422.5ZM290.5 422.5L293.5 421.5L294.5 421.5L294.5 422.5L291.5 423.5L290.5 423.5ZM287.5 422.5H291.5V423.5H287.5ZM284.5 423.5L287.5 422.5L288.5 422.5L288.5 423.5L285.5 424.5L284.5 424.5ZM281.5 424.5L284.5 423.5L285.5 423.5L285.5 424.5L282.5 425.5L281.5 425.5ZM277.5 425.5L281.5 424.5L282.5 424.5L282.5 425.5L278.5 426.5L277.5 426.5ZM274.5 425.5H278.5V426.5H274.5ZM271.5 426.5L274.5 425.5L275.5 425.5L275.5 426.5L272.5 427.5L271.5 427.5ZM267.5 427.5L271.5 426.5L272.5 426.5L272.5 427.5L268.5 428.5L267.5 428.5ZM264.5 427.5H268.5V428.5H264.5ZM261.5 428.5L264.5 427.5L265.5 427.5L265.5 428.5L262.5 429.5L261.5 429.5ZM258.5 428.5H262.5V429.5H258.5ZM254.5 428.5H259.5V429.5H254.5ZM251.5 429.5L254.5 428.5L255.5 428.5L255.5 429.5L252.5 430.5L251.5 430.5ZM248.5 429.5H252.5V430.5H248.5ZM244.5 429.5H249.5V430.5H244.5ZM241.5 429.5H245.5V430.5H241.5ZM238.5 429.5H242.5V430.5H238.5ZM235.5 429.5H239.5V430.5H235.5ZM232.5 429.5H236.5V430.5H232.5ZM228.5 429.5H233.5V430.5H228.5ZM225.5 429.5H229.5V430.5H225.5ZM222.5 428.5L223.5 428.5L226.5 429.5L226.5 430.5L225.5 430.5L222.5 429.5ZM218.5 428.5H223.5V429.5H218.5ZM215.5 428.5H219.5V429.5H215.5ZM212.5 427.5L213.5 427.5L216.5 428.5L216.5 429.5L215.5 429.5L212.5 428.5ZM209.5 427.5H213.5V428.5H209.5ZM205.5 426.5L206.5 426.5L210.5 427.5L210.5 428.5L209.5 428.5L205.5 427.5ZM202.5 425.5L203.5 425.5L206.5 426.5L206.5 427.5L205.5 427.5L202.5 426.5ZM199.5 425.5H203.5V426.5H199.5ZM195.5 424.5L196.5 424.5L200.5 425.5L200.5 426.5L199.5 426.5L195.5 425.5ZM192.5 423.5L193.5 423.5L196.5 424.5L196.5 425.5L195.5 425.5L192.5 424.5ZM189.5 422.5L190.5 422.5L193.5 423.5L193.5 424.5L192.5 424.5L189.5 423.5ZM186.5 422.5H190.5V423.5H186.5ZM183.5 421.5L184.5 421.5L187.5 422.5L187.5 423.5L186.5 423.5L183.5 422.5ZM179.5 420.5L180.5 420.5L184.5 421.5L184.5 422.5L183.5 422.5L179.5 421.5ZM176.5 419.5L177.5 419.5L180.5 420.5L180.5 421.5L179.5 421.5L176.5 420.5ZM173.5 417.5L174.5 417.5L177.5 419.5L177.5 420.5L176.5 420.5L173.5 418.5ZM170.5 416.5L171.5 416.5L174.5 417.5L174.5 418.5L173.5 418.5L170.5 417.5ZM167.5 415.5L168.5 415.5L171.5 416.5L171.5 417.5L170.5 417.5L167.5 416.5ZM164.5 414.5L165.5 414.5L168.5 415.5L168.5 416.5L167.5 416.5L164.5 415.5ZM161.5 412.5L162.5 412.5L165.5 414.5L165.5 415.5L164.5 415.5L161.5 413.5ZM158.5 411.5L159.5 411.5L162.5 412.5L162.5 413.5L161.5 413.5L158.5 412.5ZM155.5 410.5L156.5 410.5L159.5 411.5L159.5 412.5L158.5 412.5L155.5 411.5ZM152.5 408.5L153.5 408.5L156.5 410.5L156.5 411.5L155.5 411.5L152.5 409.5ZM149.5 407.5L150.5 407.5L153.5 408.5L153.5 409.5L152.5 409.5L149.5 408.5ZM146.5 405.5L147.5 405.5L150.5 407.5L150.5 408.5L149.5 408.5L146.5 406.5ZM143.5 403.5L144.5 403.5L147.5 405.5L147.5 406.5L146.5 406.5L143.5 404.5ZM140.5 402.5L141.5 402.5L144.5 403.5L144.5 404.5L143.5 404.5L140.5 403.5ZM137.5 400.5L138.5 400.5L141.5 402.5L141.5 403.5L140.5 403.5L137.5 401.5ZM134.5 398.5L135.5 398.5L138.5 400.5L138.5 401.5L137.5 401.5L134.5 399.5ZM131.5 396.5L132.5 396.5L135.5 398.5L135.5 399.5L134.5 399.5L131.5 397.5ZM129.5 394.5L130.5 394.5L132.5 396.5L132.5 397.5L131.5 397.5L129.5 395.5ZM126.5 392.5L127.5 392.5L130.5 394.5L130.5 395.5L129.5 395.5L126.5 393.5ZM123.5 390.5L124.5 390.5L127.5 392.5L127.5 393.5L126.5 393.5L123.5 391.5ZM121.5 388.5L122.5 388.5L124.5 390.5L124.5 391.5L123.5 391.5L121.5 389.5ZM118.5 386.5L119.5 386.5L122.5 388.5L122.5 389.5L121.5 389.5L118.5 387.5ZM115.5 384.5L116.5 384.5L119.5 386.5L119.5 387.5L118.5 387.5L115.5 385.5ZM113.5 382.5L114.5 382.5L116.5 384.5L116.5 385.5L115.5 385.5L113.5 383.5ZM110.5 380.5L111.5 380.5L114.5 382.5L114.5 383.5L113.5 383.5L110.5 381.5ZM108.5 378.5L109.5 378.5L111.5 380.5L111.5 381.5L110.5 381.5L108.5 379.5ZM105.5 375.5L106.5 375.5L109.5 378.5L109.5 379.5L108.5 379.5L105.5 376.5ZM103.5 373.5L104.5 373.5L106.5 375.5L106.5 376.5L105.5 376.5L103.5 374.5ZM101.5 371.5L102.5 371.5L104.5 373.5L104.5 374.5L103.5 374.5L101.5 372.5ZM98.5 368.5L99.5 368.5L102.5 371.5L102.5 372.5L101.5 372.5L98.5 369.5ZM96.5 366.5L97.5 366.5L99.5 368.5L99.5 369.5L98.5 369.5L96.5 367.5ZM94.5 363.5L95.5 363.5L97.5 366.5L97.5 367.5L96.5 367.5L94.5 364.5ZM92.5 361.5L93.5 361.5L95.5 363.5L95.5 364.5L94.5 364.5L92.5 362.5ZM90.5 358.5L91.5 358.5L93.5 361.5L93.5 362.5L92.5 362.5L90.5 359.5ZM88.5 355.5L89.5 355.5L91.5 358.5L91.5 359.5L90.5 359.5L88.5 356.5ZM86.5 353.5L87.5 353.5L89.5 355.5L89.5 356.5L88.5 356.5L86.5 354.5ZM84.5 350.5L85.5 350.5L87.5 353.5L87.5 354.5L86.5 354.5L84.5 351.5ZM82.5 347.5L83.5 347.5L85.5 350.5L85.5 351.5L84.5 351.5L82.5 348.5ZM80.5 345.5L81.5 345.5L83.5 347.5L83.5 348.5L82.5 348.5L80.5 346.5ZM78.5 342.5L79.5 342.5L81.5 345.5L81.5 346.5L80.5 346.5L78.5 343.5ZM76.5 339.5L77.5 339.5L79.5 342.5L79.5 343.5L78.5 343.5L76.5 340.5ZM74.5 336.5L75.5 336.5L77.5 339.5L77.5 340.5L76.5 340.5L74.5 337.5ZM73.5 333.5L74.5 333.5L75.5 336.5L75.5 337.5L74.5 337.5L73.5 334.5ZM71.5 330.5L72.5 330.5L74.5 333.5L74.5 334.5L73.5 334.5L71.5 331.5ZM69.5 327.5L70.5 327.5L72.5 330.5L72.5 331.5L71.5 331.5L69.5 328.5ZM68.5 324.5L69.5 324.5L70.5 327.5L70.5 328.5L69.5 328.5L68.5 325.5ZM66.5 321.5L67.5 321.5L69.5 324.5L69.5 325.5L68.5 325.5L66.5 322.5ZM65.5 318.5L66.5 318.5L67.5 321.5L67.5 322.5L66.5 322.5L65.5 319.5ZM64.5 315.5L65.5 315.5L66.5 318.5L66.5 319.5L65.5 319.5L64.5 316.5ZM62.5 312.5L63.5 312.5L65.5 315.5L65.5 316.5L64.5 316.5L62.5 313.5ZM61.5 309.5L62.5 309.5L63.5 312.5L63.5 313.5L62.5 313.5L61.5 310.5ZM60.5 306.5L61.5 306.5L62.5 309.5L62.5 310.5L61.5 310.5L60.5 307.5ZM59.5 303.5L60.5 303.5L61.5 306.5L61.5 307.5L60.5 307.5L59.5 304.5ZM57.5 300.5L58.5 300.5L60.5 303.5L60.5 304.5L59.5 304.5L57.5 301.5ZM56.5 297.5L57.5 297.5L58.5 300.5L58.5 301.5L57.5 301.5L56.5 298.5ZM55.5 293.5L56.5 293.5L57.5 297.5L57.5 298.5L56.5 298.5L55.5 294.5ZM54.5 290.5L55.5 290.5L56.5 293.5L56.5 294.5L55.5 294.5L54.5 291.5ZM54.5 287.5H55.5V291.5H54.5ZM53.5 284.5L54.5 284.5L55.5 287.5L55.5 288.5L54.5 288.5L53.5 285.5ZM52.5 281.5L53.5 281.5L54.5 284.5L54.5 285.5L53.5 285.5L52.5 282.5ZM51.5 277.5L52.5 277.5L53.5 281.5L53.5 282.5L52.5 282.5L51.5 278.5ZM51.5 274.5H52.5V278.5H51.5ZM50.5 271.5L51.5 271.5L52.5 274.5L52.5 275.5L51.5 275.5L50.5 272.5ZM49.5 267.5L50.5 267.5L51.5 271.5L51.5 272.5L50.5 272.5L49.5 268.5ZM49.5 264.5H50.5V268.5H49.5ZM48.5 261.5L49.5 261.5L50.5 264.5L50.5 265.5L49.5 265.5L48.5 262.5ZM48.5 258.5H49.5V262.5H48.5ZM48.5 254.5H49.5V259.5H48.5ZM47.5 251.5L48.5 251.5L49.5 254.5L49.5 255.5L48.5 255.5L47.5 252.5ZM47.5 248.5H48.5V252.5H47.5ZM47.5 244.5H48.5V249.5H47.5ZM47.5 241.5H48.5V245.5H47.5ZM47.5 238.5H48.5V242.5H47.5ZM47.5 235.5H48.5V239.5H47.5ZM47.5 232.5H48.5V236.5H47.5ZM47.5 228.5H48.5V233.5H47.5ZM47.5 225.5H48.5V229.5H47.5ZM47.5 225.5L48.5 222.5L49.5 222.5L49.5 223.5L48.5 226.5L47.5 226.5ZM48.5 218.5H49.5V223.5H48.5ZM48.5 215.5H49.5V219.5H48.5ZM48.5 215.5L49.5 212.5L50.5 212.5L50.5 213.5L49.5 216.5L48.5 216.5ZM49.5 209.5H50.5V213.5H49.5ZM49.5 209.5L50.5 205.5L51.5 205.5L51.5 206.5L50.5 210.5L49.5 210.5ZM50.5 205.5L51.5 202.5L52.5 202.5L52.5 203.5L51.5 206.5L50.5 206.5ZM51.5 199.5H52.5V203.5H51.5ZM51.5 199.5L52.5 195.5L53.5 195.5L53.5 196.5L52.5 200.5L51.5 200.5ZM52.5 195.5L53.5 192.5L54.5 192.5L54.5 193.5L53.5 196.5L52.5 196.5ZM53.5 192.5L54.5 189.5L55.5 189.5L55.5 190.5L54.5 193.5L53.5 193.5ZM54.5 186.5H55.5V190.5H54.5ZM54.5 186.5L55.5 183.5L56.5 183.5L56.5 184.5L55.5 187.5L54.5 187.5ZM55.5 183.5L56.5 179.5L57.5 179.5L57.5 180.5L56.5 184.5L55.5 184.5ZM56.5 179.5L57.5 176.5L58.5 176.5L58.5 177.5L57.5 180.5L56.5 180.5ZM57.5 176.5L59.5 173.5L60.5 173.5L60.5 174.5L58.5 177.5L57.5 177.5ZM59.5 173.5L60.5 170.5L61.5 170.5L61.5 171.5L60.5 174.5L59.5 174.5ZM60.5 170.5L61.5 167.5L62.5 167.5L62.5 168.5L61.5 171.5L60.5 171.5ZM61.5 167.5L62.5 164.5L63.5 164.5L63.5 165.5L62.5 168.5L61.5 168.5ZM62.5 164.5L64.5 161.5L65.5 161.5L65.5 162.5L63.5 165.5L62.5 165.5ZM64.5 161.5L65.5 158.5L66.5 158.5L66.5 159.5L65.5 162.5L64.5 162.5ZM65.5 158.5L66.5 155.5L67.5 155.5L67.5 156.5L66.5 159.5L65.5 159.5ZM66.5 155.5L68.5 152.5L69.5 152.5L69.5 153.5L67.5 156.5L66.5 156.5ZM68.5 152.5L69.5 149.5L70.5 149.5L70.5 150.5L69.5 153.5L68.5 153.5ZM69.5 149.5L71.5 146.5L72.5 146.5L72.5 147.5L70.5 150.5L69.5 150.5ZM71.5 146.5L73.5 143.5L74.5 143.5L74.5 144.5L72.5 147.5L71.5 147.5ZM73.5 143.5L74.5 140.5L75.5 140.5L75.5 141.5L74.5 144.5L73.5 144.5ZM74.5 140.5L76.5 137.5L77.5 137.5L77.5 138.5L75.5 141.5L74.5 141.5ZM76.5 137.5L78.5 134.5L79.5 134.5L79.5 135.5L77.5 138.5L76.5 138.5ZM78.5 134.5L80.5 131.5L81.5 131.5L81.5 132.5L79.5 135.5L78.5 135.5ZM80.5 131.5L82.5 129.5L83.5 129.5L83.5 130.5L81.5 132.5L80.5 132.5ZM82.5 129.5L84.5 126.5L85.5 126.5L85.5 127.5L83.5 130.5L82.5 130.5ZM84.5 126.5L86.5 123.5L87.5 123.5L87.5 124.5L85.5 127.5L84.5 127.5ZM86.5 123.5L88.5 121.5L89.5 121.5L89.5 122.5L87.5 124.5L86.5 124.5ZM88.5 121.5L90.5 118.5L91.5 118.5L91.5 119.5L89.5 122.5L88.5 122.5ZM90.5 118.5L92.5 115.5L93.5 115.5L93.5 116.5L91.5 119.5L90.5 119.5ZM92.5 115.5L94.5 113.5L95.5 113.5L95.5 114.5L93.5 116.5L92.5 116.5ZM94.5 113.5L96.5 110.5L97.5 110.5L97.5 111.5L95.5 114.5L94.5 114.5ZM96.5 110.5L98.5 108.5L99.5 108.5L99.5 109.5L97.5 111.5L96.5 111.5ZM98.5 108.5L101.5 105.5L102.5 105.5L102.5 106.5L99.5 109.5L98.5 109.5ZM101.5 105.5L103.5 103.5L104.5 103.5L104.5 104.5L102.5 106.5L101.5 106.5ZM103.5 103.5L105.5 101.5L106.5 101.5L106.5 102.5L104.5 104.5L103.5 104.5ZM105.5 101.5L108.5 98.5L109.5 98.5L109.5 99.5L106.5 102.5L105.5 102.5ZM108.5 98.5L110.5 96.5L111.5 96.5L111.5 97.5L109.5 99.5L108.5 99.5ZM110.5 96.5L113.5 94.5L114.5 94.5L114.5 95.5L111.5 97.5L110.5 97.5ZM113.5 94.5L115.5 92.5L116.5 92.5L116.5 93.5L114.5 95.5L113.5 95.5ZM115.5 92.5L118.5 90.5L119.5 90.5L119.5 91.5L116.5 93.5L115.5 93.5ZM118.5 90.5L121.5 88.5L122.5 88.5L122.5 89.5L119.5 91.5L118.5 91.5ZM121.5 88.5L123.5 86.5L124.5 86.5L124.5 87.5L122.5 89.5L121.5 89.5ZM123.5 86.5L126.5 84.5L127.5 84.5L127.5 85.5L124.5 87.5L123.5 87.5ZM126.5 84.5L129.5 82.5L130.5 82.5L130.5 83.5L127.5 85.5L126.5 85.5ZM129.5 82.5L131.5 80.5L132.5 80.5L132.5 81.5L130.5 83.5L129.5 83.5ZM131.5 80.5L134.5 78.5L135.5 78.5L135.5 79.5L132.5 81.5L131.5 81.5ZM134.5 78.5L137.5 76.5L138.5 76.5L138.5 77.5L135.5 79.5L134.5 79.5ZM137.5 76.5L140.5 74.5L141.5 74.5L141.5 75.5L138.5 77.5L137.5 77.5ZM140.5 74.5L143.5 73.5L144.5 73.5L144.5 74.5L141.5 75.5L140.5 75.5ZM143.5 73.5L146.5 71.5L147.5 71.5L147.5 72.5L144.5 74.5L143.5 74.5ZM146.5 71.5L149.5 69.5L150.5 69.5L150.5 70.5L147.5 72.5L146.5 72.5ZM149.5 69.5L152.5 68.5L153.5 68.5L153.5 69.5L150.5 70.5L149.5 70.5ZM152.5 68.5L155.5 66.5L156.5 66.5L156.5 67.5L153.5 69.5L152.5 69.5ZM155.5 66.5L158.5 65.5L159.5 65.5L159.5 66.5L156.5 67.5L155.5 67.5ZM158.5 65.5L161.5 64.5L162.5 64.5L162.5 65.5L159.5 66.5L158.5 66.5ZM161.5 64.5L164.5 62.5L165.5 62.5L165.5 63.5L162.5 65.5L161.5 65.5ZM164.5 62.5L167.5 61.5L168.5 61.5L168.5 62.5L165.5 63.5L164.5 63.5ZM167.5 61.5L170.5 60.5L171.5 60.5L171.5 61.5L168.5 62.5L167.5 62.5ZM170.5 60.5L173.5 59.5L174.5 59.5L174.5 60.5L171.5 61.5L170.5 61.5ZM173.5 59.5L176.5 57.5L177.5 57.5L177.5 58.5L174.5 60.5L173.5 60.5ZM176.5 57.5L179.5 56.5L180.5 56.5L180.5 57.5L177.5 58.5L176.5 58.5ZM179.5 56.5L183.5 55.5L184.5 55.5L184.5 56.5L180.5 57.5L179.5 57.5ZM183.5 55.5L186.5 54.5L187.5 54.5L187.5 55.5L184.5 56.5L183.5 56.5ZM186.5 54.5H190.5V55.5H186.5ZM189.5 54.5L192.5 53.5L193.5 53.5L193.5 54.5L190.5 55.5L189.5 55.5ZM192.5 53.5L195.5 52.5L196.5 52.5L196.5 53.5L193.5 54.5L192.5 54.5ZM195.5 52.5L199.5 51.5L200.5 51.5L200.5 52.5L196.5 53.5L195.5 53.5ZM199.5 51.5H203.5V52.5H199.5ZM202.5 51.5L205.5 50.5L206.5 50.5L206.5 51.5L203.5 52.5L202.5 52.5ZM205.5 50.5L209.5 49.5L210.5 49.5L210.5 50.5L206.5 51.5L205.5 51.5ZM209.5 49.5H213.5V50.5H209.5ZM212.5 49.5L215.5 48.5L216.5 48.5L216.5 49.5L213.5 50.5L212.5 50.5ZM215.5 48.5H219.5V49.5H215.5ZM218.5 48.5H223.5V49.5H218.5ZM222.5 48.5L225.5 47.5L226.5 47.5L226.5 48.5L223.5 49.5L222.5 49.5ZM225.5 47.5H229.5V48.5H225.5ZM228.5 47.5H233.5V48.5H228.5ZM232.5 47.5H236.5V48.5H232.5ZM235.5 47.5H239.5V48.5H235.5ZM238.5 47.5H242.5V48.5H238.5ZM241.5 47.5H245.5V48.5H241.5ZM244.5 47.5H249.5V48.5H244.5ZM248.5 47.5H252.5V48.5H248.5ZM251.5 47.5L252.5 47.5L255.5 48.5L255.5 49.5L254.5 49.5L251.5 48.5ZM254.5 48.5H259.5V49.5H254.5ZM258.5 48.5H262.5V49.5H258.5ZM261.5 48.5L262.5 48.5L265.5 49.5L265.5 50.5L264.5 50.5L261.5 49.5ZM264.5 49.5H268.5V50.5H264.5ZM267.5 49.5L268.5 49.5L272.5 50.5L272.5 51.5L271.5 51.5L267.5 50.5ZM271.5 50.5L272.5 50.5L275.5 51.5L275.5 52.5L274.5 52.5L271.5 51.5ZM274.5 51.5H278.5V52.5H274.5ZM277.5 51.5L278.5 51.5L282.5 52.5L282.5 53.5L281.5 53.5L277.5 52.5ZM281.5 52.5L282.5 52.5L285.5 53.5L285.5 54.5L284.5 54.5L281.5 53.5ZM284.5 53.5L285.5 53.5L288.5 54.5L288.5 55.5L287.5 55.5L284.5 54.5ZM287.5 54.5H291.5V55.5H287.5ZM290.5 54.5L291.5 54.5L294.5 55.5L294.5 56.5L293.5 56.5L290.5 55.5ZM293.5 55.5L294.5 55.5L298.5 56.5L298.5 57.5L297.5 57.5L293.5 56.5ZM297.5 56.5L298.5 56.5L301.5 57.5L301.5 58.5L300.5 58.5L297.5 57.5ZM300.5 57.5L301.5 57.5L304.5 59.5L304.5 60.5L303.5 60.5L300.5 58.5ZM303.5 59.5L304.5 59.5L307.5 60.5L307.5 61.5L306.5 61.5L303.5 60.5ZM306.5 60.5L307.5 60.5L310.5 61.5L310.5 62.5L309.5 62.5L306.5 61.5ZM309.5 61.5L310.5 61.5L313.5 62.5L313.5 63.5L312.5 63.5L309.5 62.5ZM312.5 62.5L313.5 62.5L316.5 64.5L316.5 65.5L315.5 65.5L312.5 63.5ZM315.5 64.5L316.5 64.5L319.5 65.5L319.5 66.5L318.5 66.5L315.5 65.5ZM318.5 65.5L319.5 65.5L322.5 66.5L322.5 67.5L321.5 67.5L318.5 66.5ZM321.5 66.5L322.5 66.5L325.5 68.5L325.5 69.5L324.5 69.5L321.5 67.5ZM324.5 68.5L325.5 68.5L328.5 69.5L328.5 70.5L327.5 70.5L324.5 69.5ZM327.5 69.5L328.5 69.5L331.5 71.5L331.5 72.5L330.5 72.5L327.5 70.5ZM330.5 71.5L331.5 71.5L334.5 73.5L334.5 74.5L333.5 74.5L330.5 72.5ZM333.5 73.5L334.5 73.5L337.5 74.5L337.5 75.5L336.5 75.5L333.5 74.5ZM336.5 74.5L337.5 74.5L340.5 76.5L340.5 77.5L339.5 77.5L336.5 75.5ZM339.5 76.5L340.5 76.5L343.5 78.5L343.5 79.5L342.5 79.5L339.5 77.5ZM342.5 78.5L343.5 78.5L346.5 80.5L346.5 81.5L345.5 81.5L342.5 79.5ZM345.5 80.5L346.5 80.5L348.5 82.5L348.5 83.5L347.5 83.5L345.5 81.5ZM347.5 82.5L348.5 82.5L351.5 84.5L351.5 85.5L350.5 85.5L347.5 83.5ZM350.5 84.5L351.5 84.5L354.5 86.5L354.5 87.5L353.5 87.5L350.5 85.5ZM353.5 86.5L354.5 86.5L356.5 88.5L356.5 89.5L355.5 89.5L353.5 87.5ZM355.5 88.5L356.5 88.5L359.5 90.5L359.5 91.5L358.5 91.5L355.5 89.5ZM358.5 90.5L359.5 90.5L362.5 92.5L362.5 93.5L361.5 93.5L358.5 91.5ZM361.5 92.5L362.5 92.5L364.5 94.5L364.5 95.5L363.5 95.5L361.5 93.5ZM363.5 94.5L364.5 94.5L367.5 96.5L367.5 97.5L366.5 97.5L363.5 95.5ZM366.5 96.5L367.5 96.5L369.5 98.5L369.5 99.5L368.5 99.5L366.5 97.5ZM368.5 98.5L369.5 98.5L372.5 101.5L372.5 102.5L371.5 102.5L368.5 99.5ZM371.5 101.5L372.5 101.5L374.5 103.5L374.5 104.5L373.5 104.5L371.5 102.5ZM373.5 103.5L374.5 103.5L376.5 105.5L376.5 106.5L375.5 106.5L373.5 104.5ZM375.5 105.5L376.5 105.5L379.5 108.5L379.5 109.5L378.5 109.5L375.5 106.5ZM378.5 108.5L379.5 108.5L381.5 110.5L381.5 111.5L380.5 111.5L378.5 109.5ZM380.5 110.5L381.5 110.5L383.5 113.5L383.5 114.5L382.5 114.5L380.5 111.5ZM382.5 113.5L383.5 113.5L385.5 115.5L385.5 116.5L384.5 116.5L382.5 114.5ZM384.5 115.5L385.5 115.5L387.5 118.5L387.5 119.5L386.5 119.5L384.5 116.5ZM386.5 118.5L387.5 118.5L389.5 121.5L389.5 122.5L388.5 122.5L386.5 119.5ZM388.5 121.5L389.5 121.5L391.5 123.5L391.5 124.5L390.5 124.5L388.5 122.5ZM390.5 123.5L391.5 123.5L393.5 126.5L393.5 127.5L392.5 127.5L390.5 124.5ZM392.5 126.5L393.5 126.5L395.5 129.5L395.5 130.5L394.5 130.5L392.5 127.5ZM394.5 129.5L395.5 129.5L397.5 131.5L397.5 132.5L396.5 132.5L394.5 130.5ZM396.5 131.5L397.5 131.5L399.5 134.5L399.5 135.5L398.5 135.5L396.5 132.5ZM398.5 134.5L399.5 134.5L401.5 137.5L401.5 138.5L400.5 138.5L398.5 135.5ZM400.5 137.5L401.5 137.5L403.5 140.5L403.5 141.5L402.5 141.5L400.5 138.5ZM402.5 140.5L403.5 140.5L404.5 143.5L404.5 144.5L403.5 144.5L402.5 141.5ZM403.5 143.5L404.5 143.5L406.5 146.5L406.5 147.5L405.5 147.5L403.5 144.5ZM405.5 146.5L406.5 146.5L408.5 149.5L408.5 150.5L407.5 150.5L405.5 147.5ZM407.5 149.5L408.5 149.5L409.5 152.5L409.5 153.5L408.5 153.5L407.5 150.5ZM408.5 152.5L409.5 152.5L411.5 155.5L411.5 156.5L410.5 156.5L408.5 153.5ZM410.5 155.5L411.5 155.5L412.5 158.5L412.5 159.5L411.5 159.5L410.5 156.5ZM411.5 158.5L412.5 158.5L413.5 161.5L413.5 162.5L412.5 162.5L411.5 159.5ZM412.5 161.5L413.5 161.5L415.5 164.5L415.5 165.5L414.5 165.5L412.5 162.5ZM414.5 164.5L415.5 164.5L416.5 167.5L416.5 168.5L415.5 168.5L414.5 165.5ZM415.5 167.5L416.5 167.5L417.5 170.5L417.5 171.5L416.5 171.5L415.5 168.5ZM416.5 170.5L417.5 170.5L418.5 173.5L418.5 174.5L417.5 174.5L416.5 171.5ZM417.5 173.5L418.5 173.5L420.5 176.5L420.5 177.5L419.5 177.5L417.5 174.5ZM419.5 176.5L420.5 176.5L421.5 179.5L421.5 180.5L420.5 180.5L419.5 177.5ZM420.5 179.5L421.5 179.5L422.5 183.5L422.5 184.5L421.5 184.5L420.5 180.5ZM421.5 183.5L422.5 183.5L423.5 186.5L423.5 187.5L422.5 187.5L421.5 184.5ZM422.5 186.5H423.5V190.5H422.5ZM422.5 189.5L423.5 189.5L424.5 192.5L424.5 193.5L423.5 193.5L422.5 190.5ZM423.5 192.5L424.5 192.5L425.5 195.5L425.5 196.5L424.5 196.5L423.5 193.5ZM424.5 195.5L425.5 195.5L426.5 199.5L426.5 200.5L425.5 200.5L424.5 196.5ZM425.5 199.5H426.5V203.5H425.5ZM425.5 202.5L426.5 202.5L427.5 205.5L427.5 206.5L426.5 206.5L425.5 203.5ZM426.5 205.5L427.5 205.5L428.5 209.5L428.5 210.5L427.5 210.5L426.5 206.5ZM427.5 209.5H428.5V213.5H427.5ZM427.5 212.5L428.5 212.5L429.5 215.5L429.5 216.5L428.5 216.5L427.5 213.5ZM428.5 215.5H429.5V219.5H428.5ZM428.5 218.5H429.5V223.5H428.5ZM428.5 222.5L429.5 222.5L430.5 225.5L430.5 226.5L429.5 226.5L428.5 223.5ZM429.5 225.5H430.5V229.5H429.5ZM429.5 228.5H430.5V233.5H429.5ZM429.5 232.5H430.5V236.5H429.5ZM429.5 235.5H430.5V239.5H429.5ZM417.5 238.5H418.5V242.5H417.5ZM417.5 241.5H418.5V245.5H417.5ZM417.5 244.5H418.5V248.5H417.5ZM417.5 247.5H418.5V251.5H417.5ZM416.5 253.5L417.5 250.5L418.5 250.5L418.5 251.5L417.5 254.5L416.5 254.5ZM416.5 253.5H417.5V257.5H416.5ZM416.5 256.5H417.5V260.5H416.5ZM415.5 262.5L416.5 259.5L417.5 259.5L417.5 260.5L416.5 263.5L415.5 263.5ZM415.5 262.5H416.5V267.5H415.5ZM414.5 269.5L415.5 266.5L416.5 266.5L416.5 267.5L415.5 270.5L414.5 270.5ZM414.5 269.5H415.5V273.5H414.5ZM413.5 275.5L414.5 272.5L415.5 272.5L415.5 273.5L414.5 276.5L413.5 276.5ZM412.5 278.5L413.5 275.5L414.5 275.5L414.5 276.5L413.5 279.5L412.5 279.5ZM412.5 278.5H413.5V282.5H412.5ZM411.5 284.5L412.5 281.5L413.5 281.5L413.5 282.5L412.5 285.5L411.5 285.5ZM410.5 287.5L411.5 284.5L412.5 284.5L412.5 285.5L411.5 288.5L410.5 288.5ZM409.5 290.5L410.5 287.5L411.5 287.5L411.5 288.5L410.5 291.5L409.5 291.5ZM408.5 293.5L409.5 290.5L410.5 290.5L410.5 291.5L409.5 294.5L408.5 294.5ZM407.5 296.5L408.5 293.5L409.5 293.5L409.5 294.5L408.5 297.5L407.5 297.5ZM406.5 299.5L407.5 296.5L408.5 296.5L408.5 297.5L407.5 300.5L406.5 300.5ZM405.5 302.5L406.5 299.5L407.5 299.5L407.5 300.5L406.5 303.5L405.5 303.5ZM404.5 305.5L405.5 302.5L406.5 302.5L406.5 303.5L405.5 306.5L404.5 306.5ZM403.5 308.5L404.5 305.5L405.5 305.5L405.5 306.5L404.5 309.5L403.5 309.5ZM401.5 311.5L403.5 308.5L404.5 308.5L404.5 309.5L402.5 312.5L401.5 312.5ZM400.5 313.5L401.5 311.5L402.5 311.5L402.5 312.5L401.5 314.5L400.5 314.5ZM399.5 316.5L400.5 313.5L401.5 313.5L401.5 314.5L400.5 317.5L399.5 317.5ZM397.5 319.5L399.5 316.5L400.5 316.5L400.5 317.5L398.5 320.5L397.5 320.5ZM396.5 322.5L397.5 319.5L398.5 319.5L398.5 320.5L397.5 323.5L396.5 323.5ZM394.5 325.5L396.5 322.5L397.5 322.5L397.5 323.5L395.5 326.5L394.5 326.5ZM393.5 327.5L394.5 325.5L395.5 325.5L395.5 326.5L394.5 328.5L393.5 328.5ZM391.5 330.5L393.5 327.5L394.5 327.5L394.5 328.5L392.5 331.5L391.5 331.5ZM390.5 333.5L391.5 330.5L392.5 330.5L392.5 331.5L391.5 334.5L390.5 334.5ZM388.5 335.5L390.5 333.5L391.5 333.5L391.5 334.5L389.5 336.5L388.5 336.5ZM386.5 338.5L388.5 335.5L389.5 335.5L389.5 336.5L387.5 339.5L386.5 339.5ZM385.5 340.5L386.5 338.5L387.5 338.5L387.5 339.5L386.5 341.5L385.5 341.5ZM383.5 343.5L385.5 340.5L386.5 340.5L386.5 341.5L384.5 344.5L383.5 344.5ZM381.5 346.5L383.5 343.5L384.5 343.5L384.5 344.5L382.5 347.5L381.5 347.5ZM379.5 348.5L381.5 346.5L382.5 346.5L382.5 347.5L380.5 349.5L379.5 349.5ZM377.5 350.5L379.5 348.5L380.5 348.5L380.5 349.5L378.5 351.5L377.5 351.5ZM375.5 353.5L377.5 350.5L378.5 350.5L378.5 351.5L376.5 354.5L375.5 354.5ZM373.5 355.5L375.5 353.5L376.5 353.5L376.5 354.5L374.5 356.5L373.5 356.5ZM371.5 358.5L373.5 355.5L374.5 355.5L374.5 356.5L372.5 359.5L371.5 359.5ZM369.5 360.5L371.5 358.5L372.5 358.5L372.5 359.5L370.5 361.5L369.5 361.5ZM367.5 362.5L369.5 360.5L370.5 360.5L370.5 361.5L368.5 363.5L367.5 363.5ZM364.5 364.5L367.5 362.5L368.5 362.5L368.5 363.5L365.5 365.5L364.5 365.5ZM362.5 367.5L364.5 364.5L365.5 364.5L365.5 365.5L363.5 368.5L362.5 368.5ZM360.5 369.5L362.5 367.5L363.5 367.5L363.5 368.5L361.5 370.5L360.5 370.5ZM358.5 371.5L360.5 369.5L361.5 369.5L361.5 370.5L359.5 372.5L358.5 372.5ZM355.5 373.5L358.5 371.5L359.5 371.5L359.5 372.5L356.5 374.5L355.5 374.5ZM353.5 375.5L355.5 373.5L356.5 373.5L356.5 374.5L354.5 376.5L353.5 376.5ZM350.5 377.5L353.5 375.5L354.5 375.5L354.5 376.5L351.5 378.5L350.5 378.5ZM348.5 379.5L350.5 377.5L351.5 377.5L351.5 378.5L349.5 380.5L348.5 380.5ZM346.5 381.5L348.5 379.5L349.5 379.5L349.5 380.5L347.5 382.5L346.5 382.5ZM343.5 383.5L346.5 381.5L347.5 381.5L347.5 382.5L344.5 384.5L343.5 384.5ZM340.5 385.5L343.5 383.5L344.5 383.5L344.5 384.5L341.5 386.5L340.5 386.5ZM338.5 386.5L340.5 385.5L341.5 385.5L341.5 386.5L339.5 387.5L338.5 387.5ZM335.5 388.5L338.5 386.5L339.5 386.5L339.5 387.5L336.5 389.5L335.5 389.5ZM333.5 390.5L335.5 388.5L336.5 388.5L336.5 389.5L334.5 391.5L333.5 391.5ZM330.5 391.5L333.5 390.5L334.5 390.5L334.5 391.5L331.5 392.5L330.5 392.5ZM327.5 393.5L330.5 391.5L331.5 391.5L331.5 392.5L328.5 394.5L327.5 394.5ZM325.5 394.5L327.5 393.5L328.5 393.5L328.5 394.5L326.5 395.5L325.5 395.5ZM322.5 396.5L325.5 394.5L326.5 394.5L326.5 395.5L323.5 397.5L322.5 397.5ZM319.5 397.5L322.5 396.5L323.5 396.5L323.5 397.5L320.5 398.5L319.5 398.5ZM316.5 399.5L319.5 397.5L320.5 397.5L320.5 398.5L317.5 400.5L316.5 400.5ZM313.5 400.5L316.5 399.5L317.5 399.5L317.5 400.5L314.5 401.5L313.5 401.5ZM311.5 401.5L313.5 400.5L314.5 400.5L314.5 401.5L312.5 402.5L311.5 402.5ZM308.5 403.5L311.5 401.5L312.5 401.5L312.5 402.5L309.5 404.5L308.5 404.5ZM305.5 404.5L308.5 403.5L309.5 403.5L309.5 404.5L306.5 405.5L305.5 405.5ZM302.5 405.5L305.5 404.5L306.5 404.5L306.5 405.5L303.5 406.5L302.5 406.5ZM299.5 406.5L302.5 405.5L303.5 405.5L303.5 406.5L300.5 407.5L299.5 407.5ZM296.5 407.5L299.5 406.5L300.5 406.5L300.5 407.5L297.5 408.5L296.5 408.5ZM293.5 408.5L296.5 407.5L297.5 407.5L297.5 408.5L294.5 409.5L293.5 409.5ZM290.5 409.5L293.5 408.5L294.5 408.5L294.5 409.5L291.5 410.5L290.5 410.5ZM287.5 410.5L290.5 409.5L291.5 409.5L291.5 410.5L288.5 411.5L287.5 411.5ZM284.5 411.5L287.5 410.5L288.5 410.5L288.5 411.5L285.5 412.5L284.5 412.5ZM281.5 412.5L284.5 411.5L285.5 411.5L285.5 412.5L282.5 413.5L281.5 413.5ZM278.5 412.5H282.5V413.5H278.5ZM275.5 413.5L278.5 412.5L279.5 412.5L279.5 413.5L276.5 414.5L275.5 414.5ZM272.5 414.5L275.5 413.5L276.5 413.5L276.5 414.5L273.5 415.5L272.5 415.5ZM269.5 414.5H273.5V415.5H269.5ZM266.5 415.5L269.5 414.5L270.5 414.5L270.5 415.5L267.5 416.5L266.5 416.5ZM262.5 415.5H267.5V416.5H262.5ZM259.5 416.5L262.5 415.5L263.5 415.5L263.5 416.5L260.5 417.5L259.5 417.5ZM256.5 416.5H260.5V417.5H256.5ZM253.5 416.5H257.5V417.5H253.5ZM250.5 417.5L253.5 416.5L254.5 416.5L254.5 417.5L251.5 418.5L250.5 418.5ZM247.5 417.5H251.5V418.5H247.5ZM244.5 417.5H248.5V418.5H244.5ZM241.5 417.5H245.5V418.5H241.5ZM238.5 417.5H242.5V418.5H238.5ZM235.5 417.5H239.5V418.5H235.5ZM232.5 417.5H236.5V418.5H232.5ZM229.5 417.5H233.5V418.5H229.5ZM226.5 417.5H230.5V418.5H226.5ZM223.5 416.5L224.5 416.5L227.5 417.5L227.5 418.5L226.5 418.5L223.5 417.5ZM220.5 416.5H224.5V417.5H220.5ZM217.5 416.5H221.5V417.5H217.5ZM214.5 415.5L215.5 415.5L218.5 416.5L218.5 417.5L217.5 417.5L214.5 416.5ZM210.5 415.5H215.5V416.5H210.5ZM207.5 414.5L208.5 414.5L211.5 415.5L211.5 416.5L210.5 416.5L207.5 415.5ZM204.5 414.5H208.5V415.5H204.5ZM201.5 413.5L202.5 413.5L205.5 414.5L205.5 415.5L204.5 415.5L201.5 414.5ZM198.5 412.5L199.5 412.5L202.5 413.5L202.5 414.5L201.5 414.5L198.5 413.5ZM195.5 412.5H199.5V413.5H195.5ZM192.5 411.5L193.5 411.5L196.5 412.5L196.5 413.5L195.5 413.5L192.5 412.5ZM189.5 410.5L190.5 410.5L193.5 411.5L193.5 412.5L192.5 412.5L189.5 411.5ZM186.5 409.5L187.5 409.5L190.5 410.5L190.5 411.5L189.5 411.5L186.5 410.5ZM183.5 408.5L184.5 408.5L187.5 409.5L187.5 410.5L186.5 410.5L183.5 409.5ZM180.5 407.5L181.5 407.5L184.5 408.5L184.5 409.5L183.5 409.5L180.5 408.5ZM177.5 406.5L178.5 406.5L181.5 407.5L181.5 408.5L180.5 408.5L177.5 407.5ZM174.5 405.5L175.5 405.5L178.5 406.5L178.5 407.5L177.5 407.5L174.5 406.5ZM171.5 404.5L172.5 404.5L175.5 405.5L175.5 406.5L174.5 406.5L171.5 405.5ZM168.5 403.5L169.5 403.5L172.5 404.5L172.5 405.5L171.5 405.5L168.5 404.5ZM165.5 401.5L166.5 401.5L169.5 403.5L169.5 404.5L168.5 404.5L165.5 402.5ZM163.5 400.5L164.5 400.5L166.5 401.5L166.5 402.5L165.5 402.5L163.5 401.5ZM160.5 399.5L161.5 399.5L164.5 400.5L164.5 401.5L163.5 401.5L160.5 400.5ZM157.5 397.5L158.5 397.5L161.5 399.5L161.5 400.5L160.5 400.5L157.5 398.5ZM154.5 396.5L155.5 396.5L158.5 397.5L158.5 398.5L157.5 398.5L154.5 397.5ZM151.5 394.5L152.5 394.5L155.5 396.5L155.5 397.5L154.5 397.5L151.5 395.5ZM149.5 393.5L150.5 393.5L152.5 394.5L152.5 395.5L151.5 395.5L149.5 394.5ZM146.5 391.5L147.5 391.5L150.5 393.5L150.5 394.5L149.5 394.5L146.5 392.5ZM143.5 390.5L144.5 390.5L147.5 391.5L147.5 392.5L146.5 392.5L143.5 391.5ZM141.5 388.5L142.5 388.5L144.5 390.5L144.5 391.5L143.5 391.5L141.5 389.5ZM138.5 386.5L139.5 386.5L142.5 388.5L142.5 389.5L141.5 389.5L138.5 387.5ZM136.5 385.5L137.5 385.5L139.5 386.5L139.5 387.5L138.5 387.5L136.5 386.5ZM133.5 383.5L134.5 383.5L137.5 385.5L137.5 386.5L136.5 386.5L133.5 384.5ZM130.5 381.5L131.5 381.5L134.5 383.5L134.5 384.5L133.5 384.5L130.5 382.5ZM128.5 379.5L129.5 379.5L131.5 381.5L131.5 382.5L130.5 382.5L128.5 380.5ZM126.5 377.5L127.5 377.5L129.5 379.5L129.5 380.5L128.5 380.5L126.5 378.5ZM123.5 375.5L124.5 375.5L127.5 377.5L127.5 378.5L126.5 378.5L123.5 376.5ZM121.5 373.5L122.5 373.5L124.5 375.5L124.5 376.5L123.5 376.5L121.5 374.5ZM118.5 371.5L119.5 371.5L122.5 373.5L122.5 374.5L121.5 374.5L118.5 372.5ZM116.5 369.5L117.5 369.5L119.5 371.5L119.5 372.5L118.5 372.5L116.5 370.5ZM114.5 367.5L115.5 367.5L117.5 369.5L117.5 370.5L116.5 370.5L114.5 368.5ZM112.5 364.5L113.5 364.5L115.5 367.5L115.5 368.5L114.5 368.5L112.5 365.5ZM109.5 362.5L110.5 362.5L113.5 364.5L113.5 365.5L112.5 365.5L109.5 363.5ZM107.5 360.5L108.5 360.5L110.5 362.5L110.5 363.5L109.5 363.5L107.5 361.5ZM105.5 358.5L106.5 358.5L108.5 360.5L108.5 361.5L107.5 361.5L105.5 359.5ZM103.5 355.5L104.5 355.5L106.5 358.5L106.5 359.5L105.5 359.5L103.5 356.5ZM101.5 353.5L102.5 353.5L104.5 355.5L104.5 356.5L103.5 356.5L101.5 354.5ZM99.5 350.5L100.5 350.5L102.5 353.5L102.5 354.5L101.5 354.5L99.5 351.5ZM97.5 348.5L98.5 348.5L100.5 350.5L100.5 351.5L99.5 351.5L97.5 349.5ZM95.5 346.5L96.5 346.5L98.5 348.5L98.5 349.5L97.5 349.5L95.5 347.5ZM93.5 343.5L94.5 343.5L96.5 346.5L96.5 347.5L95.5 347.5L93.5 344.5ZM91.5 340.5L92.5 340.5L94.5 343.5L94.5 344.5L93.5 344.5L91.5 341.5ZM90.5 338.5L91.5 338.5L92.5 340.5L92.5 341.5L91.5 341.5L90.5 339.5ZM88.5 335.5L89.5 335.5L91.5 338.5L91.5 339.5L90.5 339.5L88.5 336.5ZM86.5 333.5L87.5 333.5L89.5 335.5L89.5 336.5L88.5 336.5L86.5 334.5ZM85.5 330.5L86.5 330.5L87.5 333.5L87.5 334.5L86.5 334.5L85.5 331.5ZM83.5 327.5L84.5 327.5L86.5 330.5L86.5 331.5L85.5 331.5L83.5 328.5ZM82.5 325.5L83.5 325.5L84.5 327.5L84.5 328.5L83.5 328.5L82.5 326.5ZM80.5 322.5L81.5 322.5L83.5 325.5L83.5 326.5L82.5 326.5L80.5 323.5ZM79.5 319.5L80.5 319.5L81.5 322.5L81.5 323.5L80.5 323.5L79.5 320.5ZM77.5 316.5L78.5 316.5L80.5 319.5L80.5 320.5L79.5 320.5L77.5 317.5ZM76.5 313.5L77.5 313.5L78.5 316.5L78.5 317.5L77.5 317.5L76.5 314.5ZM75.5 311.5L76.5 311.5L77.5 313.5L77.5 314.5L76.5 314.5L75.5 312.5ZM73.5 308.5L74.5 308.5L76.5 311.5L76.5 312.5L75.5 312.5L73.5 309.5ZM72.5 305.5L73.5 305.5L74.5 308.5L74.5 309.5L73.5 309.5L72.5 306.5ZM71.5 302.5L72.5 302.5L73.5 305.5L73.5 306.5L72.5 306.5L71.5 303.5ZM70.5 299.5L71.5 299.5L72.5 302.5L72.5 303.5L71.5 303.5L70.5 300.5ZM69.5 296.5L70.5 296.5L71.5 299.5L71.5 300.5L70.5 300.5L69.5 297.5ZM68.5 293.5L69.5 293.5L70.5 296.5L70.5 297.5L69.5 297.5L68.5 294.5ZM67.5 290.5L68.5 290.5L69.5 293.5L69.5 294.5L68.5 294.5L67.5 291.5ZM66.5 287.5L67.5 287.5L68.5 290.5L68.5 291.5L67.5 291.5L66.5 288.5ZM65.5 284.5L66.5 284.5L67.5 287.5L67.5 288.5L66.5 288.5L65.5 285.5ZM64.5 281.5L65.5 281.5L66.5 284.5L66.5 285.5L65.5 285.5L64.5 282.5ZM64.5 278.5H65.5V282.5H64.5ZM63.5 275.5L64.5 275.5L65.5 278.5L65.5 279.5L64.5 279.5L63.5 276.5ZM62.5 272.5L63.5 272.5L64.5 275.5L64.5 276.5L63.5 276.5L62.5 273.5ZM62.5 269.5H63.5V273.5H62.5ZM61.5 266.5L62.5 266.5L63.5 269.5L63.5 270.5L62.5 270.5L61.5 267.5ZM61.5 262.5H62.5V267.5H61.5ZM60.5 259.5L61.5 259.5L62.5 262.5L62.5 263.5L61.5 263.5L60.5 260.5ZM60.5 256.5H61.5V260.5H60.5ZM60.5 253.5H61.5V257.5H60.5ZM59.5 250.5L60.5 250.5L61.5 253.5L61.5 254.5L60.5 254.5L59.5 251.5ZM59.5 247.5H60.5V251.5H59.5ZM59.5 244.5H60.5V248.5H59.5ZM59.5 241.5H60.5V245.5H59.5ZM59.5 238.5H60.5V242.5H59.5ZM59.5 235.5H60.5V239.5H59.5ZM59.5 232.5H60.5V236.5H59.5ZM59.5 229.5H60.5V233.5H59.5ZM59.5 226.5H60.5V230.5H59.5ZM59.5 226.5L60.5 223.5L61.5 223.5L61.5 224.5L60.5 227.5L59.5 227.5ZM60.5 220.5H61.5V224.5H60.5ZM60.5 217.5H61.5V221.5H60.5ZM60.5 217.5L61.5 214.5L62.5 214.5L62.5 215.5L61.5 218.5L60.5 218.5ZM61.5 210.5H62.5V215.5H61.5ZM61.5 210.5L62.5 207.5L63.5 207.5L63.5 208.5L62.5 211.5L61.5 211.5ZM62.5 204.5H63.5V208.5H62.5ZM62.5 204.5L63.5 201.5L64.5 201.5L64.5 202.5L63.5 205.5L62.5 205.5ZM63.5 201.5L64.5 198.5L65.5 198.5L65.5 199.5L64.5 202.5L63.5 202.5ZM64.5 195.5H65.5V199.5H64.5ZM64.5 195.5L65.5 192.5L66.5 192.5L66.5 193.5L65.5 196.5L64.5 196.5ZM65.5 192.5L66.5 189.5L67.5 189.5L67.5 190.5L66.5 193.5L65.5 193.5ZM66.5 189.5L67.5 186.5L68.5 186.5L68.5 187.5L67.5 190.5L66.5 190.5ZM67.5 186.5L68.5 183.5L69.5 183.5L69.5 184.5L68.5 187.5L67.5 187.5ZM68.5 183.5L69.5 180.5L70.5 180.5L70.5 181.5L69.5 184.5L68.5 184.5ZM69.5 180.5L70.5 177.5L71.5 177.5L71.5 178.5L70.5 181.5L69.5 181.5ZM70.5 177.5L71.5 174.5L72.5 174.5L72.5 175.5L71.5 178.5L70.5 178.5ZM71.5 174.5L72.5 171.5L73.5 171.5L73.5 172.5L72.5 175.5L71.5 175.5ZM72.5 171.5L73.5 168.5L74.5 168.5L74.5 169.5L73.5 172.5L72.5 172.5ZM73.5 168.5L75.5 165.5L76.5 165.5L76.5 166.5L74.5 169.5L73.5 169.5ZM75.5 165.5L76.5 163.5L77.5 163.5L77.5 164.5L76.5 166.5L75.5 166.5ZM76.5 163.5L77.5 160.5L78.5 160.5L78.5 161.5L77.5 164.5L76.5 164.5ZM77.5 160.5L79.5 157.5L80.5 157.5L80.5 158.5L78.5 161.5L77.5 161.5ZM79.5 157.5L80.5 154.5L81.5 154.5L81.5 155.5L80.5 158.5L79.5 158.5ZM80.5 154.5L82.5 151.5L83.5 151.5L83.5 152.5L81.5 155.5L80.5 155.5ZM82.5 151.5L83.5 149.5L84.5 149.5L84.5 150.5L83.5 152.5L82.5 152.5ZM83.5 149.5L85.5 146.5L86.5 146.5L86.5 147.5L84.5 150.5L83.5 150.5ZM85.5 146.5L86.5 143.5L87.5 143.5L87.5 144.5L86.5 147.5L85.5 147.5ZM86.5 143.5L88.5 141.5L89.5 141.5L89.5 142.5L87.5 144.5L86.5 144.5ZM88.5 141.5L90.5 138.5L91.5 138.5L91.5 139.5L89.5 142.5L88.5 142.5ZM90.5 138.5L91.5 136.5L92.5 136.5L92.5 137.5L91.5 139.5L90.5 139.5ZM91.5 136.5L93.5 133.5L94.5 133.5L94.5 134.5L92.5 137.5L91.5 137.5ZM93.5 133.5L95.5 130.5L96.5 130.5L96.5 131.5L94.5 134.5L93.5 134.5ZM95.5 130.5L97.5 128.5L98.5 128.5L98.5 129.5L96.5 131.5L95.5 131.5ZM97.5 128.5L99.5 126.5L100.5 126.5L100.5 127.5L98.5 129.5L97.5 129.5ZM99.5 126.5L101.5 123.5L102.5 123.5L102.5 124.5L100.5 127.5L99.5 127.5ZM101.5 123.5L103.5 121.5L104.5 121.5L104.5 122.5L102.5 124.5L101.5 124.5ZM103.5 121.5L105.5 118.5L106.5 118.5L106.5 119.5L104.5 122.5L103.5 122.5ZM105.5 118.5L107.5 116.5L108.5 116.5L108.5 117.5L106.5 119.5L105.5 119.5ZM107.5 116.5L109.5 114.5L110.5 114.5L110.5 115.5L108.5 117.5L107.5 117.5ZM109.5 114.5L112.5 112.5L113.5 112.5L113.5 113.5L110.5 115.5L109.5 115.5ZM112.5 112.5L114.5 109.5L115.5 109.5L115.5 110.5L113.5 113.5L112.5 113.5ZM114.5 109.5L116.5 107.5L117.5 107.5L117.5 108.5L115.5 110.5L114.5 110.5ZM116.5 107.5L118.5 105.5L119.5 105.5L119.5 106.5L117.5 108.5L116.5 108.5ZM118.5 105.5L121.5 103.5L122.5 103.5L122.5 104.5L119.5 106.5L118.5 106.5ZM121.5 103.5L123.5 101.5L124.5 101.5L124.5 102.5L122.5 104.5L121.5 104.5ZM123.5 101.5L126.5 99.5L127.5 99.5L127.5 100.5L124.5 102.5L123.5 102.5ZM126.5 99.5L128.5 97.5L129.5 97.5L129.5 98.5L127.5 100.5L126.5 100.5ZM128.5 97.5L130.5 95.5L131.5 95.5L131.5 96.5L129.5 98.5L128.5 98.5ZM130.5 95.5L133.5 93.5L134.5 93.5L134.5 94.5L131.5 96.5L130.5 96.5ZM133.5 93.5L136.5 91.5L137.5 91.5L137.5 92.5L134.5 94.5L133.5 94.5ZM136.5 91.5L138.5 90.5L139.5 90.5L139.5 91.5L137.5 92.5L136.5 92.5ZM138.5 90.5L141.5 88.5L142.5 88.5L142.5 89.5L139.5 91.5L138.5 91.5ZM141.5 88.5L143.5 86.5L144.5 86.5L144.5 87.5L142.5 89.5L141.5 89.5ZM143.5 86.5L146.5 85.5L147.5 85.5L147.5 86.5L144.5 87.5L143.5 87.5ZM146.5 85.5L149.5 83.5L150.5 83.5L150.5 84.5L147.5 86.5L146.5 86.5ZM149.5 83.5L151.5 82.5L152.5 82.5L152.5 83.5L150.5 84.5L149.5 84.5ZM151.5 82.5L154.5 80.5L155.5 80.5L155.5 81.5L152.5 83.5L151.5 83.5ZM154.5 80.5L157.5 79.5L158.5 79.5L158.5 80.5L155.5 81.5L154.5 81.5ZM157.5 79.5L160.5 77.5L161.5 77.5L161.5 78.5L158.5 80.5L157.5 80.5ZM160.5 77.5L163.5 76.5L164.5 76.5L164.5 77.5L161.5 78.5L160.5 78.5ZM163.5 76.5L165.5 75.5L166.5 75.5L166.5 76.5L164.5 77.5L163.5 77.5ZM165.5 75.5L168.5 73.5L169.5 73.5L169.5 74.5L166.5 76.5L165.5 76.5ZM168.5 73.5L171.5 72.5L172.5 72.5L172.5 73.5L169.5 74.5L168.5 74.5ZM171.5 72.5L174.5 71.5L175.5 71.5L175.5 72.5L172.5 73.5L171.5 73.5ZM174.5 71.5L177.5 70.5L178.5 70.5L178.5 71.5L175.5 72.5L174.5 72.5ZM177.5 70.5L180.5 69.5L181.5 69.5L181.5 70.5L178.5 71.5L177.5 71.5ZM180.5 69.5L183.5 68.5L184.5 68.5L184.5 69.5L181.5 70.5L180.5 70.5ZM183.5 68.5L186.5 67.5L187.5 67.5L187.5 68.5L184.5 69.5L183.5 69.5ZM186.5 67.5L189.5 66.5L190.5 66.5L190.5 67.5L187.5 68.5L186.5 68.5ZM189.5 66.5L192.5 65.5L193.5 65.5L193.5 66.5L190.5 67.5L189.5 67.5ZM192.5 65.5L195.5 64.5L196.5 64.5L196.5 65.5L193.5 66.5L192.5 66.5ZM195.5 64.5H199.5V65.5H195.5ZM198.5 64.5L201.5 63.5L202.5 63.5L202.5 64.5L199.5 65.5L198.5 65.5ZM201.5 63.5L204.5 62.5L205.5 62.5L205.5 63.5L202.5 64.5L201.5 64.5ZM204.5 62.5H208.5V63.5H204.5ZM207.5 62.5L210.5 61.5L211.5 61.5L211.5 62.5L208.5 63.5L207.5 63.5ZM210.5 61.5H215.5V62.5H210.5ZM214.5 61.5L217.5 60.5L218.5 60.5L218.5 61.5L215.5 62.5L214.5 62.5ZM217.5 60.5H221.5V61.5H217.5ZM220.5 60.5H224.5V61.5H220.5ZM223.5 60.5L226.5 59.5L227.5 59.5L227.5 60.5L224.5 61.5L223.5 61.5ZM226.5 59.5H230.5V60.5H226.5ZM229.5 59.5H233.5V60.5H229.5ZM232.5 59.5H236.5V60.5H232.5ZM235.5 59.5H239.5V60.5H235.5ZM238.5 59.5H242.5V60.5H238.5ZM241.5 59.5H245.5V60.5H241.5ZM244.5 59.5H248.5V60.5H244.5ZM247.5 59.5H251.5V60.5H247.5ZM250.5 59.5L251.5 59.5L254.5 60.5L254.5 61.5L253.5 61.5L250.5 60.5ZM253.5 60.5H257.5V61.5H253.5ZM256.5 60.5H260.5V61.5H256.5ZM259.5 60.5L260.5 60.5L263.5 61.5L263.5 62.5L262.5 62.5L259.5 61.5ZM262.5 61.5H267.5V62.5H262.5ZM266.5 61.5L267.5 61.5L270.5 62.5L270.5 63.5L269.5 63.5L266.5 62.5ZM269.5 62.5H273.5V63.5H269.5ZM272.5 62.5L273.5 62.5L276.5 63.5L276.5 64.5L275.5 64.5L272.5 63.5ZM275.5 63.5L276.5 63.5L279.5 64.5L279.5 65.5L278.5 65.5L275.5 64.5ZM278.5 64.5H282.5V65.5H278.5ZM281.5 64.5L282.5 64.5L285.5 65.5L285.5 66.5L284.5 66.5L281.5 65.5ZM284.5 65.5L285.5 65.5L288.5 66.5L288.5 67.5L287.5 67.5L284.5 66.5ZM287.5 66.5L288.5 66.5L291.5 67.5L291.5 68.5L290.5 68.5L287.5 67.5ZM290.5 67.5L291.5 67.5L294.5 68.5L294.5 69.5L293.5 69.5L290.5 68.5ZM293.5 68.5L294.5 68.5L297.5 69.5L297.5 70.5L296.5 70.5L293.5 69.5ZM296.5 69.5L297.5 69.5L300.5 70.5L300.5 71.5L299.5 71.5L296.5 70.5ZM299.5 70.5L300.5 70.5L303.5 71.5L303.5 72.5L302.5 72.5L299.5 71.5ZM302.5 71.5L303.5 71.5L306.5 72.5L306.5 73.5L305.5 73.5L302.5 72.5ZM305.5 72.5L306.5 72.5L309.5 73.5L309.5 74.5L308.5 74.5L305.5 73.5ZM308.5 73.5L309.5 73.5L312.5 75.5L312.5 76.5L311.5 76.5L308.5 74.5ZM311.5 75.5L312.5 75.5L314.5 76.5L314.5 77.5L313.5 77.5L311.5 76.5ZM313.5 76.5L314.5 76.5L317.5 77.5L317.5 78.5L316.5 78.5L313.5 77.5ZM316.5 77.5L317.5 77.5L320.5 79.5L320.5 80.5L319.5 80.5L316.5 78.5ZM319.5 79.5L320.5 79.5L323.5 80.5L323.5 81.5L322.5 81.5L319.5 80.5ZM322.5 80.5L323.5 80.5L326.5 82.5L326.5 83.5L325.5 83.5L322.5 81.5ZM325.5 82.5L326.5 82.5L328.5 83.5L328.5 84.5L327.5 84.5L325.5 83.5ZM327.5 83.5L328.5 83.5L331.5 85.5L331.5 86.5L330.5 86.5L327.5 84.5ZM330.5 85.5L331.5 85.5L334.5 86.5L334.5 87.5L333.5 87.5L330.5 86.5ZM333.5 86.5L334.5 86.5L336.5 88.5L336.5 89.5L335.5 89.5L333.5 87.5ZM335.5 88.5L336.5 88.5L339.5 90.5L339.5 91.5L338.5 91.5L335.5 89.5ZM338.5 90.5L339.5 90.5L341.5 91.5L341.5 92.5L340.5 92.5L338.5 91.5ZM340.5 91.5L341.5 91.5L344.5 93.5L344.5 94.5L343.5 94.5L340.5 92.5ZM343.5 93.5L344.5 93.5L347.5 95.5L347.5 96.5L346.5 96.5L343.5 94.5ZM346.5 95.5L347.5 95.5L349.5 97.5L349.5 98.5L348.5 98.5L346.5 96.5ZM348.5 97.5L349.5 97.5L351.5 99.5L351.5 100.5L350.5 100.5L348.5 98.5ZM350.5 99.5L351.5 99.5L354.5 101.5L354.5 102.5L353.5 102.5L350.5 100.5ZM353.5 101.5L354.5 101.5L356.5 103.5L356.5 104.5L355.5 104.5L353.5 102.5ZM355.5 103.5L356.5 103.5L359.5 105.5L359.5 106.5L358.5 106.5L355.5 104.5ZM358.5 105.5L359.5 105.5L361.5 107.5L361.5 108.5L360.5 108.5L358.5 106.5ZM360.5 107.5L361.5 107.5L363.5 109.5L363.5 110.5L362.5 110.5L360.5 108.5ZM362.5 109.5L363.5 109.5L365.5 112.5L365.5 113.5L364.5 113.5L362.5 110.5ZM364.5 112.5L365.5 112.5L368.5 114.5L368.5 115.5L367.5 115.5L364.5 113.5ZM367.5 114.5L368.5 114.5L370.5 116.5L370.5 117.5L369.5 117.5L367.5 115.5ZM369.5 116.5L370.5 116.5L372.5 118.5L372.5 119.5L371.5 119.5L369.5 117.5ZM371.5 118.5L372.5 118.5L374.5 121.5L374.5 122.5L373.5 122.5L371.5 119.5ZM373.5 121.5L374.5 121.5L376.5 123.5L376.5 124.5L375.5 124.5L373.5 122.5ZM375.5 123.5L376.5 123.5L378.5 126.5L378.5 127.5L377.5 127.5L375.5 124.5ZM377.5 126.5L378.5 126.5L380.5 128.5L380.5 129.5L379.5 129.5L377.5 127.5ZM379.5 128.5L380.5 128.5L382.5 130.5L382.5 131.5L381.5 131.5L379.5 129.5ZM381.5 130.5L382.5 130.5L384.5 133.5L384.5 134.5L383.5 134.5L381.5 131.5ZM383.5 133.5L384.5 133.5L386.5 136.5L386.5 137.5L385.5 137.5L383.5 134.5ZM385.5 136.5L386.5 136.5L387.5 138.5L387.5 139.5L386.5 139.5L385.5 137.5ZM386.5 138.5L387.5 138.5L389.5 141.5L389.5 142.5L388.5 142.5L386.5 139.5ZM388.5 141.5L389.5 141.5L391.5 143.5L391.5 144.5L390.5 144.5L388.5 142.5ZM390.5 143.5L391.5 143.5L392.5 146.5L392.5 147.5L391.5 147.5L390.5 144.5ZM391.5 146.5L392.5 146.5L394.5 149.5L394.5 150.5L393.5 150.5L391.5 147.5ZM393.5 149.5L394.5 149.5L395.5 151.5L395.5 152.5L394.5 152.5L393.5 150.5ZM394.5 151.5L395.5 151.5L397.5 154.5L397.5 155.5L396.5 155.5L394.5 152.5ZM396.5 154.5L397.5 154.5L398.5 157.5L398.5 158.5L397.5 158.5L396.5 155.5ZM397.5 157.5L398.5 157.5L400.5 160.5L400.5 161.5L399.5 161.5L397.5 158.5ZM399.5 160.5L400.5 160.5L401.5 163.5L401.5 164.5L400.5 164.5L399.5 161.5ZM400.5 163.5L401.5 163.5L402.5 165.5L402.5 166.5L401.5 166.5L400.5 164.5ZM401.5 165.5L402.5 165.5L404.5 168.5L404.5 169.5L403.5 169.5L401.5 166.5ZM403.5 168.5L404.5 168.5L405.5 171.5L405.5 172.5L404.5 172.5L403.5 169.5ZM404.5 171.5L405.5 171.5L406.5 174.5L406.5 175.5L405.5 175.5L404.5 172.5ZM405.5 174.5L406.5 174.5L407.5 177.5L407.5 178.5L406.5 178.5L405.5 175.5ZM406.5 177.5L407.5 177.5L408.5 180.5L408.5 181.5L407.5 181.5L406.5 178.5ZM407.5 180.5L408.5 180.5L409.5 183.5L409.5 184.5L408.5 184.5L407.5 181.5ZM408.5 183.5L409.5 183.5L410.5 186.5L410.5 187.5L409.5 187.5L408.5 184.5ZM409.5 186.5L410.5 186.5L411.5 189.5L411.5 190.5L410.5 190.5L409.5 187.5ZM410.5 189.5L411.5 189.5L412.5 192.5L412.5 193.5L411.5 193.5L410.5 190.5ZM411.5 192.5L412.5 192.5L413.5 195.5L413.5 196.5L412.5 196.5L411.5 193.5ZM412.5 195.5H413.5V199.5H412.5ZM412.5 198.5L413.5 198.5L414.5 201.5L414.5 202.5L413.5 202.5L412.5 199.5ZM413.5 201.5L414.5 201.5L415.5 204.5L415.5 205.5L414.5 205.5L413.5 202.5ZM414.5 204.5H415.5V208.5H414.5ZM414.5 207.5L415.5 207.5L416.5 210.5L416.5 211.5L415.5 211.5L414.5 208.5ZM415.5 210.5H416.5V215.5H415.5ZM415.5 214.5L416.5 214.5L417.5 217.5L417.5 218.5L416.5 218.5L415.5 215.5ZM416.5 217.5H417.5V221.5H416.5ZM416.5 220.5H417.5V224.5H416.5ZM416.5 223.5L417.5 223.5L418.5 226.5L418.5 227.5L417.5 227.5L416.5 224.5ZM417.5 226.5H418.5V230.5H417.5ZM417.5 229.5H418.5V233.5H417.5ZM417.5 232.5H418.5V236.5H417.5ZM417.5 235.5H418.5V239.5H417.5ZM393.5 238.5H394.5V241.5H393.5ZM393.5 240.5H394.5V244.5H393.5ZM393.5 243.5H394.5V247.5H393.5ZM393.5 246.5H394.5V249.5H393.5ZM392.5 251.5L393.5 248.5L394.5 248.5L394.5 249.5L393.5 252.5L392.5 252.5ZM392.5 251.5H393.5V255.5H392.5ZM392.5 254.5H393.5V257.5H392.5ZM391.5 259.5L392.5 256.5L393.5 256.5L393.5 257.5L392.5 260.5L391.5 260.5ZM391.5 259.5H392.5V263.5H391.5ZM391.5 262.5H392.5V266.5H391.5ZM390.5 267.5L391.5 265.5L392.5 265.5L392.5 266.5L391.5 268.5L390.5 268.5ZM390.5 267.5H391.5V271.5H390.5ZM389.5 272.5L390.5 270.5L391.5 270.5L391.5 271.5L390.5 273.5L389.5 273.5ZM388.5 275.5L389.5 272.5L390.5 272.5L390.5 273.5L389.5 276.5L388.5 276.5ZM388.5 275.5H389.5V279.5H388.5ZM387.5 280.5L388.5 278.5L389.5 278.5L389.5 279.5L388.5 281.5L387.5 281.5ZM386.5 283.5L387.5 280.5L388.5 280.5L388.5 281.5L387.5 284.5L386.5 284.5ZM385.5 286.5L386.5 283.5L387.5 283.5L387.5 284.5L386.5 287.5L385.5 287.5ZM385.5 286.5H386.5V289.5H385.5ZM384.5 291.5L385.5 288.5L386.5 288.5L386.5 289.5L385.5 292.5L384.5 292.5ZM383.5 293.5L384.5 291.5L385.5 291.5L385.5 292.5L384.5 294.5L383.5 294.5ZM382.5 296.5L383.5 293.5L384.5 293.5L384.5 294.5L383.5 297.5L382.5 297.5ZM381.5 298.5L382.5 296.5L383.5 296.5L383.5 297.5L382.5 299.5L381.5 299.5ZM380.5 301.5L381.5 298.5L382.5 298.5L382.5 299.5L381.5 302.5L380.5 302.5ZM378.5 303.5L380.5 301.5L381.5 301.5L381.5 302.5L379.5 304.5L378.5 304.5ZM377.5 306.5L378.5 303.5L379.5 303.5L379.5 304.5L378.5 307.5L377.5 307.5ZM376.5 308.5L377.5 306.5L378.5 306.5L378.5 307.5L377.5 309.5L376.5 309.5ZM375.5 311.5L376.5 308.5L377.5 308.5L377.5 309.5L376.5 312.5L375.5 312.5ZM374.5 313.5L375.5 311.5L376.5 311.5L376.5 312.5L375.5 314.5L374.5 314.5ZM372.5 315.5L374.5 313.5L375.5 313.5L375.5 314.5L373.5 316.5L372.5 316.5ZM371.5 318.5L372.5 315.5L373.5 315.5L373.5 316.5L372.5 319.5L371.5 319.5ZM369.5 320.5L371.5 318.5L372.5 318.5L372.5 319.5L370.5 321.5L369.5 321.5ZM368.5 322.5L369.5 320.5L370.5 320.5L370.5 321.5L369.5 323.5L368.5 323.5ZM366.5 324.5L368.5 322.5L369.5 322.5L369.5 323.5L367.5 325.5L366.5 325.5ZM365.5 327.5L366.5 324.5L367.5 324.5L367.5 325.5L366.5 328.5L365.5 328.5ZM363.5 329.5L365.5 327.5L366.5 327.5L366.5 328.5L364.5 330.5L363.5 330.5ZM362.5 331.5L363.5 329.5L364.5 329.5L364.5 330.5L363.5 332.5L362.5 332.5ZM360.5 333.5L362.5 331.5L363.5 331.5L363.5 332.5L361.5 334.5L360.5 334.5ZM358.5 335.5L360.5 333.5L361.5 333.5L361.5 334.5L359.5 336.5L358.5 336.5ZM357.5 337.5L358.5 335.5L359.5 335.5L359.5 336.5L358.5 338.5L357.5 338.5ZM355.5 340.5L357.5 337.5L358.5 337.5L358.5 338.5L356.5 341.5L355.5 341.5ZM353.5 342.5L355.5 340.5L356.5 340.5L356.5 341.5L354.5 343.5L353.5 343.5ZM351.5 344.5L353.5 342.5L354.5 342.5L354.5 343.5L352.5 345.5L351.5 345.5ZM349.5 346.5L351.5 344.5L352.5 344.5L352.5 345.5L350.5 347.5L349.5 347.5ZM347.5 347.5L349.5 346.5L350.5 346.5L350.5 347.5L348.5 348.5L347.5 348.5ZM346.5 349.5L347.5 347.5L348.5 347.5L348.5 348.5L347.5 350.5L346.5 350.5ZM344.5 351.5L346.5 349.5L347.5 349.5L347.5 350.5L345.5 352.5L344.5 352.5ZM342.5 353.5L344.5 351.5L345.5 351.5L345.5 352.5L343.5 354.5L342.5 354.5ZM340.5 355.5L342.5 353.5L343.5 353.5L343.5 354.5L341.5 356.5L340.5 356.5ZM337.5 357.5L340.5 355.5L341.5 355.5L341.5 356.5L338.5 358.5L337.5 358.5ZM335.5 358.5L337.5 357.5L338.5 357.5L338.5 358.5L336.5 359.5L335.5 359.5ZM333.5 360.5L335.5 358.5L336.5 358.5L336.5 359.5L334.5 361.5L333.5 361.5ZM331.5 362.5L333.5 360.5L334.5 360.5L334.5 361.5L332.5 363.5L331.5 363.5ZM329.5 363.5L331.5 362.5L332.5 362.5L332.5 363.5L330.5 364.5L329.5 364.5ZM327.5 365.5L329.5 363.5L330.5 363.5L330.5 364.5L328.5 366.5L327.5 366.5ZM324.5 366.5L327.5 365.5L328.5 365.5L328.5 366.5L325.5 367.5L324.5 367.5ZM322.5 368.5L324.5 366.5L325.5 366.5L325.5 367.5L323.5 369.5L322.5 369.5ZM320.5 369.5L322.5 368.5L323.5 368.5L323.5 369.5L321.5 370.5L320.5 370.5ZM318.5 371.5L320.5 369.5L321.5 369.5L321.5 370.5L319.5 372.5L318.5 372.5ZM315.5 372.5L318.5 371.5L319.5 371.5L319.5 372.5L316.5 373.5L315.5 373.5ZM313.5 374.5L315.5 372.5L316.5 372.5L316.5 373.5L314.5 375.5L313.5 375.5ZM311.5 375.5L313.5 374.5L314.5 374.5L314.5 375.5L312.5 376.5L311.5 376.5ZM308.5 376.5L311.5 375.5L312.5 375.5L312.5 376.5L309.5 377.5L308.5 377.5ZM306.5 377.5L308.5 376.5L309.5 376.5L309.5 377.5L307.5 378.5L306.5 378.5ZM303.5 378.5L306.5 377.5L307.5 377.5L307.5 378.5L304.5 379.5L303.5 379.5ZM301.5 380.5L303.5 378.5L304.5 378.5L304.5 379.5L302.5 381.5L301.5 381.5ZM298.5 381.5L301.5 380.5L302.5 380.5L302.5 381.5L299.5 382.5L298.5 382.5ZM296.5 382.5L298.5 381.5L299.5 381.5L299.5 382.5L297.5 383.5L296.5 383.5ZM293.5 383.5L296.5 382.5L297.5 382.5L297.5 383.5L294.5 384.5L293.5 384.5ZM291.5 384.5L293.5 383.5L294.5 383.5L294.5 384.5L292.5 385.5L291.5 385.5ZM288.5 385.5L291.5 384.5L292.5 384.5L292.5 385.5L289.5 386.5L288.5 386.5ZM286.5 385.5H289.5V386.5H286.5ZM283.5 386.5L286.5 385.5L287.5 385.5L287.5 386.5L284.5 387.5L283.5 387.5ZM280.5 387.5L283.5 386.5L284.5 386.5L284.5 387.5L281.5 388.5L280.5 388.5ZM278.5 388.5L280.5 387.5L281.5 387.5L281.5 388.5L279.5 389.5L278.5 389.5ZM275.5 388.5H279.5V389.5H275.5ZM272.5 389.5L275.5 388.5L276.5 388.5L276.5 389.5L273.5 390.5L272.5 390.5ZM270.5 390.5L272.5 389.5L273.5 389.5L273.5 390.5L271.5 391.5L270.5 391.5ZM267.5 390.5H271.5V391.5H267.5ZM265.5 391.5L267.5 390.5L268.5 390.5L268.5 391.5L266.5 392.5L265.5 392.5ZM262.5 391.5H266.5V392.5H262.5ZM259.5 391.5H263.5V392.5H259.5ZM256.5 392.5L259.5 391.5L260.5 391.5L260.5 392.5L257.5 393.5L256.5 393.5ZM254.5 392.5H257.5V393.5H254.5ZM251.5 392.5H255.5V393.5H251.5ZM248.5 393.5L251.5 392.5L252.5 392.5L252.5 393.5L249.5 394.5L248.5 394.5ZM246.5 393.5H249.5V394.5H246.5ZM243.5 393.5H247.5V394.5H243.5ZM240.5 393.5H244.5V394.5H240.5ZM238.5 393.5H241.5V394.5H238.5ZM236.5 393.5H239.5V394.5H236.5ZM233.5 393.5H237.5V394.5H233.5ZM230.5 393.5H234.5V394.5H230.5ZM228.5 393.5H231.5V394.5H228.5ZM225.5 392.5L226.5 392.5L229.5 393.5L229.5 394.5L228.5 394.5L225.5 393.5ZM222.5 392.5H226.5V393.5H222.5ZM220.5 392.5H223.5V393.5H220.5ZM217.5 391.5L218.5 391.5L221.5 392.5L221.5 393.5L220.5 393.5L217.5 392.5ZM214.5 391.5H218.5V392.5H214.5ZM211.5 391.5H215.5V392.5H211.5ZM209.5 390.5L210.5 390.5L212.5 391.5L212.5 392.5L211.5 392.5L209.5 391.5ZM206.5 390.5H210.5V391.5H206.5ZM204.5 389.5L205.5 389.5L207.5 390.5L207.5 391.5L206.5 391.5L204.5 390.5ZM201.5 388.5L202.5 388.5L205.5 389.5L205.5 390.5L204.5 390.5L201.5 389.5ZM198.5 388.5H202.5V389.5H198.5ZM196.5 387.5L197.5 387.5L199.5 388.5L199.5 389.5L198.5 389.5L196.5 388.5ZM193.5 386.5L194.5 386.5L197.5 387.5L197.5 388.5L196.5 388.5L193.5 387.5ZM190.5 385.5L191.5 385.5L194.5 386.5L194.5 387.5L193.5 387.5L190.5 386.5ZM188.5 385.5H191.5V386.5H188.5ZM185.5 384.5L186.5 384.5L189.5 385.5L189.5 386.5L188.5 386.5L185.5 385.5ZM183.5 383.5L184.5 383.5L186.5 384.5L186.5 385.5L185.5 385.5L183.5 384.5ZM180.5 382.5L181.5 382.5L184.5 383.5L184.5 384.5L183.5 384.5L180.5 383.5ZM178.5 381.5L179.5 381.5L181.5 382.5L181.5 383.5L180.5 383.5L178.5 382.5ZM175.5 380.5L176.5 380.5L179.5 381.5L179.5 382.5L178.5 382.5L175.5 381.5ZM173.5 378.5L174.5 378.5L176.5 380.5L176.5 381.5L175.5 381.5L173.5 379.5ZM170.5 377.5L171.5 377.5L174.5 378.5L174.5 379.5L173.5 379.5L170.5 378.5ZM168.5 376.5L169.5 376.5L171.5 377.5L171.5 378.5L170.5 378.5L168.5 377.5ZM165.5 375.5L166.5 375.5L169.5 376.5L169.5 377.5L168.5 377.5L165.5 376.5ZM163.5 374.5L164.5 374.5L166.5 375.5L166.5 376.5L165.5 376.5L163.5 375.5ZM161.5 372.5L162.5 372.5L164.5 374.5L164.5 375.5L163.5 375.5L161.5 373.5ZM158.5 371.5L159.5 371.5L162.5 372.5L162.5 373.5L161.5 373.5L158.5 372.5ZM156.5 369.5L157.5 369.5L159.5 371.5L159.5 372.5L158.5 372.5L156.5 370.5ZM154.5 368.5L155.5 368.5L157.5 369.5L157.5 370.5L156.5 370.5L154.5 369.5ZM152.5 366.5L153.5 366.5L155.5 368.5L155.5 369.5L154.5 369.5L152.5 367.5ZM149.5 365.5L150.5 365.5L153.5 366.5L153.5 367.5L152.5 367.5L149.5 366.5ZM147.5 363.5L148.5 363.5L150.5 365.5L150.5 366.5L149.5 366.5L147.5 364.5ZM145.5 362.5L146.5 362.5L148.5 363.5L148.5 364.5L147.5 364.5L145.5 363.5ZM143.5 360.5L144.5 360.5L146.5 362.5L146.5 363.5L145.5 363.5L143.5 361.5ZM141.5 358.5L142.5 358.5L144.5 360.5L144.5 361.5L143.5 361.5L141.5 359.5ZM139.5 357.5L140.5 357.5L142.5 358.5L142.5 359.5L141.5 359.5L139.5 358.5ZM136.5 355.5L137.5 355.5L140.5 357.5L140.5 358.5L139.5 358.5L136.5 356.5ZM134.5 353.5L135.5 353.5L137.5 355.5L137.5 356.5L136.5 356.5L134.5 354.5ZM132.5 351.5L133.5 351.5L135.5 353.5L135.5 354.5L134.5 354.5L132.5 352.5ZM130.5 349.5L131.5 349.5L133.5 351.5L133.5 352.5L132.5 352.5L130.5 350.5ZM129.5 347.5L130.5 347.5L131.5 349.5L131.5 350.5L130.5 350.5L129.5 348.5ZM127.5 346.5L128.5 346.5L130.5 347.5L130.5 348.5L129.5 348.5L127.5 347.5ZM125.5 344.5L126.5 344.5L128.5 346.5L128.5 347.5L127.5 347.5L125.5 345.5ZM123.5 342.5L124.5 342.5L126.5 344.5L126.5 345.5L125.5 345.5L123.5 343.5ZM121.5 340.5L122.5 340.5L124.5 342.5L124.5 343.5L123.5 343.5L121.5 341.5ZM119.5 337.5L120.5 337.5L122.5 340.5L122.5 341.5L121.5 341.5L119.5 338.5ZM118.5 335.5L119.5 335.5L120.5 337.5L120.5 338.5L119.5 338.5L118.5 336.5ZM116.5 333.5L117.5 333.5L119.5 335.5L119.5 336.5L118.5 336.5L116.5 334.5ZM114.5 331.5L115.5 331.5L117.5 333.5L117.5 334.5L116.5 334.5L114.5 332.5ZM113.5 329.5L114.5 329.5L115.5 331.5L115.5 332.5L114.5 332.5L113.5 330.5ZM111.5 327.5L112.5 327.5L114.5 329.5L114.5 330.5L113.5 330.5L111.5 328.5ZM110.5 324.5L111.5 324.5L112.5 327.5L112.5 328.5L111.5 328.5L110.5 325.5ZM108.5 322.5L109.5 322.5L111.5 324.5L111.5 325.5L110.5 325.5L108.5 323.5ZM107.5 320.5L108.5 320.5L109.5 322.5L109.5 323.5L108.5 323.5L107.5 321.5ZM105.5 318.5L106.5 318.5L108.5 320.5L108.5 321.5L107.5 321.5L105.5 319.5ZM104.5 315.5L105.5 315.5L106.5 318.5L106.5 319.5L105.5 319.5L104.5 316.5ZM102.5 313.5L103.5 313.5L105.5 315.5L105.5 316.5L104.5 316.5L102.5 314.5ZM101.5 311.5L102.5 311.5L103.5 313.5L103.5 314.5L102.5 314.5L101.5 312.5ZM100.5 308.5L101.5 308.5L102.5 311.5L102.5 312.5L101.5 312.5L100.5 309.5ZM99.5 306.5L100.5 306.5L101.5 308.5L101.5 309.5L100.5 309.5L99.5 307.5ZM98.5 303.5L99.5 303.5L100.5 306.5L100.5 307.5L99.5 307.5L98.5 304.5ZM96.5 301.5L97.5 301.5L99.5 303.5L99.5 304.5L98.5 304.5L96.5 302.5ZM95.5 298.5L96.5 298.5L97.5 301.5L97.5 302.5L96.5 302.5L95.5 299.5ZM94.5 296.5L95.5 296.5L96.5 298.5L96.5 299.5L95.5 299.5L94.5 297.5ZM93.5 293.5L94.5 293.5L95.5 296.5L95.5 297.5L94.5 297.5L93.5 294.5ZM92.5 291.5L93.5 291.5L94.5 293.5L94.5 294.5L93.5 294.5L92.5 292.5ZM91.5 288.5L92.5 288.5L93.5 291.5L93.5 292.5L92.5 292.5L91.5 289.5ZM91.5 286.5H92.5V289.5H91.5ZM90.5 283.5L91.5 283.5L92.5 286.5L92.5 287.5L91.5 287.5L90.5 284.5ZM89.5 280.5L90.5 280.5L91.5 283.5L91.5 284.5L90.5 284.5L89.5 281.5ZM88.5 278.5L89.5 278.5L90.5 280.5L90.5 281.5L89.5 281.5L88.5 279.5ZM88.5 275.5H89.5V279.5H88.5ZM87.5 272.5L88.5 272.5L89.5 275.5L89.5 276.5L88.5 276.5L87.5 273.5ZM86.5 270.5L87.5 270.5L88.5 272.5L88.5 273.5L87.5 273.5L86.5 271.5ZM86.5 267.5H87.5V271.5H86.5ZM85.5 265.5L86.5 265.5L87.5 267.5L87.5 268.5L86.5 268.5L85.5 266.5ZM85.5 262.5H86.5V266.5H85.5ZM85.5 259.5H86.5V263.5H85.5ZM84.5 256.5L85.5 256.5L86.5 259.5L86.5 260.5L85.5 260.5L84.5 257.5ZM84.5 254.5H85.5V257.5H84.5ZM84.5 251.5H85.5V255.5H84.5ZM83.5 248.5L84.5 248.5L85.5 251.5L85.5 252.5L84.5 252.5L83.5 249.5ZM83.5 246.5H84.5V249.5H83.5ZM83.5 243.5H84.5V247.5H83.5ZM83.5 240.5H84.5V244.5H83.5ZM83.5 238.5H84.5V241.5H83.5ZM83.5 236.5H84.5V239.5H83.5ZM83.5 233.5H84.5V237.5H83.5ZM83.5 230.5H84.5V234.5H83.5ZM83.5 228.5H84.5V231.5H83.5ZM83.5 228.5L84.5 225.5L85.5 225.5L85.5 226.5L84.5 229.5L83.5 229.5ZM84.5 222.5H85.5V226.5H84.5ZM84.5 220.5H85.5V223.5H84.5ZM84.5 220.5L85.5 217.5L86.5 217.5L86.5 218.5L85.5 221.5L84.5 221.5ZM85.5 214.5H86.5V218.5H85.5ZM85.5 211.5H86.5V215.5H85.5ZM85.5 211.5L86.5 209.5L87.5 209.5L87.5 210.5L86.5 212.5L85.5 212.5ZM86.5 206.5H87.5V210.5H86.5ZM86.5 206.5L87.5 204.5L88.5 204.5L88.5 205.5L87.5 207.5L86.5 207.5ZM87.5 204.5L88.5 201.5L89.5 201.5L89.5 202.5L88.5 205.5L87.5 205.5ZM88.5 198.5H89.5V202.5H88.5ZM88.5 198.5L89.5 196.5L90.5 196.5L90.5 197.5L89.5 199.5L88.5 199.5ZM89.5 196.5L90.5 193.5L91.5 193.5L91.5 194.5L90.5 197.5L89.5 197.5ZM90.5 193.5L91.5 190.5L92.5 190.5L92.5 191.5L91.5 194.5L90.5 194.5ZM91.5 188.5H92.5V191.5H91.5ZM91.5 188.5L92.5 185.5L93.5 185.5L93.5 186.5L92.5 189.5L91.5 189.5ZM92.5 185.5L93.5 183.5L94.5 183.5L94.5 184.5L93.5 186.5L92.5 186.5ZM93.5 183.5L94.5 180.5L95.5 180.5L95.5 181.5L94.5 184.5L93.5 184.5ZM94.5 180.5L95.5 178.5L96.5 178.5L96.5 179.5L95.5 181.5L94.5 181.5ZM95.5 178.5L96.5 175.5L97.5 175.5L97.5 176.5L96.5 179.5L95.5 179.5ZM96.5 175.5L98.5 173.5L99.5 173.5L99.5 174.5L97.5 176.5L96.5 176.5ZM98.5 173.5L99.5 170.5L100.5 170.5L100.5 171.5L99.5 174.5L98.5 174.5ZM99.5 170.5L100.5 168.5L101.5 168.5L101.5 169.5L100.5 171.5L99.5 171.5ZM100.5 168.5L101.5 165.5L102.5 165.5L102.5 166.5L101.5 169.5L100.5 169.5ZM101.5 165.5L102.5 163.5L103.5 163.5L103.5 164.5L102.5 166.5L101.5 166.5ZM102.5 163.5L104.5 161.5L105.5 161.5L105.5 162.5L103.5 164.5L102.5 164.5ZM104.5 161.5L105.5 158.5L106.5 158.5L106.5 159.5L105.5 162.5L104.5 162.5ZM105.5 158.5L107.5 156.5L108.5 156.5L108.5 157.5L106.5 159.5L105.5 159.5ZM107.5 156.5L108.5 154.5L109.5 154.5L109.5 155.5L108.5 157.5L107.5 157.5ZM108.5 154.5L110.5 152.5L111.5 152.5L111.5 153.5L109.5 155.5L108.5 155.5ZM110.5 152.5L111.5 149.5L112.5 149.5L112.5 150.5L111.5 153.5L110.5 153.5ZM111.5 149.5L113.5 147.5L114.5 147.5L114.5 148.5L112.5 150.5L111.5 150.5ZM113.5 147.5L114.5 145.5L115.5 145.5L115.5 146.5L114.5 148.5L113.5 148.5ZM114.5 145.5L116.5 143.5L117.5 143.5L117.5 144.5L115.5 146.5L114.5 146.5ZM116.5 143.5L118.5 141.5L119.5 141.5L119.5 142.5L117.5 144.5L116.5 144.5ZM118.5 141.5L119.5 139.5L120.5 139.5L120.5 140.5L119.5 142.5L118.5 142.5ZM119.5 139.5L121.5 136.5L122.5 136.5L122.5 137.5L120.5 140.5L119.5 140.5ZM121.5 136.5L123.5 134.5L124.5 134.5L124.5 135.5L122.5 137.5L121.5 137.5ZM123.5 134.5L125.5 132.5L126.5 132.5L126.5 133.5L124.5 135.5L123.5 135.5ZM125.5 132.5L127.5 130.5L128.5 130.5L128.5 131.5L126.5 133.5L125.5 133.5ZM127.5 130.5L129.5 129.5L130.5 129.5L130.5 130.5L128.5 131.5L127.5 131.5ZM129.5 129.5L130.5 127.5L131.5 127.5L131.5 128.5L130.5 130.5L129.5 130.5ZM130.5 127.5L132.5 125.5L133.5 125.5L133.5 126.5L131.5 128.5L130.5 128.5ZM132.5 125.5L134.5 123.5L135.5 123.5L135.5 124.5L133.5 126.5L132.5 126.5ZM134.5 123.5L136.5 121.5L137.5 121.5L137.5 122.5L135.5 124.5L134.5 124.5ZM136.5 121.5L139.5 119.5L140.5 119.5L140.5 120.5L137.5 122.5L136.5 122.5ZM139.5 119.5L141.5 118.5L142.5 118.5L142.5 119.5L140.5 120.5L139.5 120.5ZM141.5 118.5L143.5 116.5L144.5 116.5L144.5 117.5L142.5 119.5L141.5 119.5ZM143.5 116.5L145.5 114.5L146.5 114.5L146.5 115.5L144.5 117.5L143.5 117.5ZM145.5 114.5L147.5 113.5L148.5 113.5L148.5 114.5L146.5 115.5L145.5 115.5ZM147.5 113.5L149.5 111.5L150.5 111.5L150.5 112.5L148.5 114.5L147.5 114.5ZM149.5 111.5L152.5 110.5L153.5 110.5L153.5 111.5L150.5 112.5L149.5 112.5ZM152.5 110.5L154.5 108.5L155.5 108.5L155.5 109.5L153.5 111.5L152.5 111.5ZM154.5 108.5L156.5 107.5L157.5 107.5L157.5 108.5L155.5 109.5L154.5 109.5ZM156.5 107.5L158.5 105.5L159.5 105.5L159.5 106.5L157.5 108.5L156.5 108.5ZM158.5 105.5L161.5 104.5L162.5 104.5L162.5 105.5L159.5 106.5L158.5 106.5ZM161.5 104.5L163.5 102.5L164.5 102.5L164.5 103.5L162.5 105.5L161.5 105.5ZM163.5 102.5L165.5 101.5L166.5 101.5L166.5 102.5L164.5 103.5L163.5 103.5ZM165.5 101.5L168.5 100.5L169.5 100.5L169.5 101.5L166.5 102.5L165.5 102.5ZM168.5 100.5L170.5 99.5L171.5 99.5L171.5 100.5L169.5 101.5L168.5 101.5ZM170.5 99.5L173.5 98.5L174.5 98.5L174.5 99.5L171.5 100.5L170.5 100.5ZM173.5 98.5L175.5 96.5L176.5 96.5L176.5 97.5L174.5 99.5L173.5 99.5ZM175.5 96.5L178.5 95.5L179.5 95.5L179.5 96.5L176.5 97.5L175.5 97.5ZM178.5 95.5L180.5 94.5L181.5 94.5L181.5 95.5L179.5 96.5L178.5 96.5ZM180.5 94.5L183.5 93.5L184.5 93.5L184.5 94.5L181.5 95.5L180.5 95.5ZM183.5 93.5L185.5 92.5L186.5 92.5L186.5 93.5L184.5 94.5L183.5 94.5ZM185.5 92.5L188.5 91.5L189.5 91.5L189.5 92.5L186.5 93.5L185.5 93.5ZM188.5 91.5H191.5V92.5H188.5ZM190.5 91.5L193.5 90.5L194.5 90.5L194.5 91.5L191.5 92.5L190.5 92.5ZM193.5 90.5L196.5 89.5L197.5 89.5L197.5 90.5L194.5 91.5L193.5 91.5ZM196.5 89.5L198.5 88.5L199.5 88.5L199.5 89.5L197.5 90.5L196.5 90.5ZM198.5 88.5H202.5V89.5H198.5ZM201.5 88.5L204.5 87.5L205.5 87.5L205.5 88.5L202.5 89.5L201.5 89.5ZM204.5 87.5L206.5 86.5L207.5 86.5L207.5 87.5L205.5 88.5L204.5 88.5ZM206.5 86.5H210.5V87.5H206.5ZM209.5 86.5L211.5 85.5L212.5 85.5L212.5 86.5L210.5 87.5L209.5 87.5ZM211.5 85.5H215.5V86.5H211.5ZM214.5 85.5H218.5V86.5H214.5ZM217.5 85.5L220.5 84.5L221.5 84.5L221.5 85.5L218.5 86.5L217.5 86.5ZM220.5 84.5H223.5V85.5H220.5ZM222.5 84.5H226.5V85.5H222.5ZM225.5 84.5L228.5 83.5L229.5 83.5L229.5 84.5L226.5 85.5L225.5 85.5ZM228.5 83.5H231.5V84.5H228.5ZM230.5 83.5H234.5V84.5H230.5ZM233.5 83.5H237.5V84.5H233.5ZM236.5 83.5H239.5V84.5H236.5ZM238.5 83.5H241.5V84.5H238.5ZM240.5 83.5H244.5V84.5H240.5ZM243.5 83.5H247.5V84.5H243.5ZM246.5 83.5H249.5V84.5H246.5ZM248.5 83.5L249.5 83.5L252.5 84.5L252.5 85.5L251.5 85.5L248.5 84.5ZM251.5 84.5H255.5V85.5H251.5ZM254.5 84.5H257.5V85.5H254.5ZM256.5 84.5L257.5 84.5L260.5 85.5L260.5 86.5L259.5 86.5L256.5 85.5ZM259.5 85.5H263.5V86.5H259.5ZM262.5 85.5H266.5V86.5H262.5ZM265.5 85.5L266.5 85.5L268.5 86.5L268.5 87.5L267.5 87.5L265.5 86.5ZM267.5 86.5H271.5V87.5H267.5ZM270.5 86.5L271.5 86.5L273.5 87.5L273.5 88.5L272.5 88.5L270.5 87.5ZM272.5 87.5L273.5 87.5L276.5 88.5L276.5 89.5L275.5 89.5L272.5 88.5ZM275.5 88.5H279.5V89.5H275.5ZM278.5 88.5L279.5 88.5L281.5 89.5L281.5 90.5L280.5 90.5L278.5 89.5ZM280.5 89.5L281.5 89.5L284.5 90.5L284.5 91.5L283.5 91.5L280.5 90.5ZM283.5 90.5L284.5 90.5L287.5 91.5L287.5 92.5L286.5 92.5L283.5 91.5ZM286.5 91.5H289.5V92.5H286.5ZM288.5 91.5L289.5 91.5L292.5 92.5L292.5 93.5L291.5 93.5L288.5 92.5ZM291.5 92.5L292.5 92.5L294.5 93.5L294.5 94.5L293.5 94.5L291.5 93.5ZM293.5 93.5L294.5 93.5L297.5 94.5L297.5 95.5L296.5 95.5L293.5 94.5ZM296.5 94.5L297.5 94.5L299.5 95.5L299.5 96.5L298.5 96.5L296.5 95.5ZM298.5 95.5L299.5 95.5L302.5 96.5L302.5 97.5L301.5 97.5L298.5 96.5ZM301.5 96.5L302.5 96.5L304.5 98.5L304.5 99.5L303.5 99.5L301.5 97.5ZM303.5 98.5L304.5 98.5L307.5 99.5L307.5 100.5L306.5 100.5L303.5 99.5ZM306.5 99.5L307.5 99.5L309.5 100.5L309.5 101.5L308.5 101.5L306.5 100.5ZM308.5 100.5L309.5 100.5L312.5 101.5L312.5 102.5L311.5 102.5L308.5 101.5ZM311.5 101.5L312.5 101.5L314.5 102.5L314.5 103.5L313.5 103.5L311.5 102.5ZM313.5 102.5L314.5 102.5L316.5 104.5L316.5 105.5L315.5 105.5L313.5 103.5ZM315.5 104.5L316.5 104.5L319.5 105.5L319.5 106.5L318.5 106.5L315.5 105.5ZM318.5 105.5L319.5 105.5L321.5 107.5L321.5 108.5L320.5 108.5L318.5 106.5ZM320.5 107.5L321.5 107.5L323.5 108.5L323.5 109.5L322.5 109.5L320.5 108.5ZM322.5 108.5L323.5 108.5L325.5 110.5L325.5 111.5L324.5 111.5L322.5 109.5ZM324.5 110.5L325.5 110.5L328.5 111.5L328.5 112.5L327.5 112.5L324.5 111.5ZM327.5 111.5L328.5 111.5L330.5 113.5L330.5 114.5L329.5 114.5L327.5 112.5ZM329.5 113.5L330.5 113.5L332.5 114.5L332.5 115.5L331.5 115.5L329.5 114.5ZM331.5 114.5L332.5 114.5L334.5 116.5L334.5 117.5L333.5 117.5L331.5 115.5ZM333.5 116.5L334.5 116.5L336.5 118.5L336.5 119.5L335.5 119.5L333.5 117.5ZM335.5 118.5L336.5 118.5L338.5 119.5L338.5 120.5L337.5 120.5L335.5 119.5ZM337.5 119.5L338.5 119.5L341.5 121.5L341.5 122.5L340.5 122.5L337.5 120.5ZM340.5 121.5L341.5 121.5L343.5 123.5L343.5 124.5L342.5 124.5L340.5 122.5ZM342.5 123.5L343.5 123.5L345.5 125.5L345.5 126.5L344.5 126.5L342.5 124.5ZM344.5 125.5L345.5 125.5L347.5 127.5L347.5 128.5L346.5 128.5L344.5 126.5ZM346.5 127.5L347.5 127.5L348.5 129.5L348.5 130.5L347.5 130.5L346.5 128.5ZM347.5 129.5L348.5 129.5L350.5 130.5L350.5 131.5L349.5 131.5L347.5 130.5ZM349.5 130.5L350.5 130.5L352.5 132.5L352.5 133.5L351.5 133.5L349.5 131.5ZM351.5 132.5L352.5 132.5L354.5 134.5L354.5 135.5L353.5 135.5L351.5 133.5ZM353.5 134.5L354.5 134.5L356.5 136.5L356.5 137.5L355.5 137.5L353.5 135.5ZM355.5 136.5L356.5 136.5L358.5 139.5L358.5 140.5L357.5 140.5L355.5 137.5ZM357.5 139.5L358.5 139.5L359.5 141.5L359.5 142.5L358.5 142.5L357.5 140.5ZM358.5 141.5L359.5 141.5L361.5 143.5L361.5 144.5L360.5 144.5L358.5 142.5ZM360.5 143.5L361.5 143.5L363.5 145.5L363.5 146.5L362.5 146.5L360.5 144.5ZM362.5 145.5L363.5 145.5L364.5 147.5L364.5 148.5L363.5 148.5L362.5 146.5ZM363.5 147.5L364.5 147.5L366.5 149.5L366.5 150.5L365.5 150.5L363.5 148.5ZM365.5 149.5L366.5 149.5L367.5 152.5L367.5 153.5L366.5 153.5L365.5 150.5ZM366.5 152.5L367.5 152.5L369.5 154.5L369.5 155.5L368.5 155.5L366.5 153.5ZM368.5 154.5L369.5 154.5L370.5 156.5L370.5 157.5L369.5 157.5L368.5 155.5ZM369.5 156.5L370.5 156.5L372.5 158.5L372.5 159.5L371.5 159.5L369.5 157.5ZM371.5 158.5L372.5 158.5L373.5 161.5L373.5 162.5L372.5 162.5L371.5 159.5ZM372.5 161.5L373.5 161.5L375.5 163.5L375.5 164.5L374.5 164.5L372.5 162.5ZM374.5 163.5L375.5 163.5L376.5 165.5L376.5 166.5L375.5 166.5L374.5 164.5ZM375.5 165.5L376.5 165.5L377.5 168.5L377.5 169.5L376.5 169.5L375.5 166.5ZM376.5 168.5L377.5 168.5L378.5 170.5L378.5 171.5L377.5 171.5L376.5 169.5ZM377.5 170.5L378.5 170.5L379.5 173.5L379.5 174.5L378.5 174.5L377.5 171.5ZM378.5 173.5L379.5 173.5L381.5 175.5L381.5 176.5L380.5 176.5L378.5 174.5ZM380.5 175.5L381.5 175.5L382.5 178.5L382.5 179.5L381.5 179.5L380.5 176.5ZM381.5 178.5L382.5 178.5L383.5 180.5L383.5 181.5L382.5 181.5L381.5 179.5ZM382.5 180.5L383.5 180.5L384.5 183.5L384.5 184.5L383.5 184.5L382.5 181.5ZM383.5 183.5L384.5 183.5L385.5 185.5L385.5 186.5L384.5 186.5L383.5 184.5ZM384.5 185.5L385.5 185.5L386.5 188.5L386.5 189.5L385.5 189.5L384.5 186.5ZM385.5 188.5H386.5V191.5H385.5ZM385.5 190.5L386.5 190.5L387.5 193.5L387.5 194.5L386.5 194.5L385.5 191.5ZM386.5 193.5L387.5 193.5L388.5 196.5L388.5 197.5L387.5 197.5L386.5 194.5ZM387.5 196.5L388.5 196.5L389.5 198.5L389.5 199.5L388.5 199.5L387.5 197.5ZM388.5 198.5H389.5V202.5H388.5ZM388.5 201.5L389.5 201.5L390.5 204.5L390.5 205.5L389.5 205.5L388.5 202.5ZM389.5 204.5L390.5 204.5L391.5 206.5L391.5 207.5L390.5 207.5L389.5 205.5ZM390.5 206.5H391.5V210.5H390.5ZM390.5 209.5L391.5 209.5L392.5 211.5L392.5 212.5L391.5 212.5L390.5 210.5ZM391.5 211.5H392.5V215.5H391.5ZM391.5 214.5H392.5V218.5H391.5ZM391.5 217.5L392.5 217.5L393.5 220.5L393.5 221.5L392.5 221.5L391.5 218.5ZM392.5 220.5H393.5V223.5H392.5ZM392.5 222.5H393.5V226.5H392.5ZM392.5 225.5L393.5 225.5L394.5 228.5L394.5 229.5L393.5 229.5L392.5 226.5ZM393.5 228.5H394.5V231.5H393.5ZM393.5 230.5H394.5V234.5H393.5ZM393.5 233.5H394.5V237.5H393.5ZM393.5 236.5H394.5V239.5H393.5Z"/>
<path class="p" transform="translate(0,.5)" stroke="#808080" d="M239 239h1M237 240h1M235 241h1M233 242h1M231 244h1M229 245h1M227 246h1M225 247h1M223 248h1M221 249h1M219 250h1M217 252h1M215 253h1M213 254h1M211 255h1M209 256h1M207 257h1M205 259h1M203 260h1M201 261h1M199 262h1M197 263h1M195 264h1M193 265h1M191 267h1M189 268h1M187 269h1M185 270h1M183 271h1M181 272h1M179 273h1M177 275h1M175 276h1M173 277h1M171 278h1M169 279h1M167 280h1M165 282h1M163 283h1M161 284h1M159 285h1M157 286h1M155 287h1M153 288h1M151 290h1M149 291h1M147 292h1M145 293h1M143 294h1M141 295h1M139 296h1M137 298h1M135 299h1M133 300h1M131 301h1M129 302h1M127 303h1M125 305h1M123 306h1M121 307h1M119 308h1M117 309h1M115 310h1M113 311h1M111 313h1M109 314h1M107 315h1M105 316h1M239 239h1M238 241h1M237 243h1M236 245h1M234 247h1M233 249h1M232 251h1M231 253h1M230 255h1M229 257h1M228 259h1M226 261h1M225 263h1M224 265h1M223 267h1M222 269h1M221 271h1M219 273h1M218 275h1M217 277h1M216 279h1M215 281h1M214 283h1M213 285h1M211 287h1M210 289h1M209 291h1M208 293h1M207 295h1M206 297h1M205 299h1M203 301h1M202 303h1M201 305h1M200 307h1M199 309h1M198 311h1M196 313h1M195 315h1M194 317h1M193 319h1M192 321h1M191 323h1M190 325h1M188 327h1M187 329h1M186 331h1M185 333h1M184 335h1M183 337h1M182 339h1M180 341h1M179 343h1M178 345h1M177 347h1M176 349h1M175 351h1M173 353h1M172 355h1M171 357h1M170 359h1M169 361h1M168 363h1M167 365h1M165 367h1M164 369h1M163 371h1M162 373h1M239 239h1M240 241h1M241 243h1M242 245h1M244 247h1M245 249h1M246 251h1M247 253h1M248 255h1M249 257h1M250 259h1M252 261h1M253 263h1M254 265h1M255 267h1M256 269h1M257 271h1M259 273h1M260 275h1M261 277h1M262 279h1M263 281h1M264 283h1M265 285h1M267 287h1M268 289h1M269 291h1M270 293h1M271 295h1M272 297h1M273 299h1M275 301h1M276 303h1M277 305h1M278 307h1M279 309h1M280 311h1M282 313h1M283 315h1M284 317h1M285 319h1M286 321h1M287 323h1M288 325h1M290 327h1M291 329h1M292 331h1M293 333h1M294 335h1M295 337h1M296 339h1M298 341h1M299 343h1M300 345h1M301 347h1M302 349h1M303 351h1M305 353h1M306 355h1M307 357h1M308 359h1M309 361h1M310 363h1M311 365h1M313 367h1M314 369h1M315 371h1M316 373h1M239 239h1M241 240h1M243 241h1M245 242h1M247 244h1M249 245h1M251 246h1M253 247h1M255 248h1M257 249h1M259 250h1M261 252h1M263 253h1M265 254h1M267 255h1M269 256h1M271 257h1M273 259h1M275 260h1M277 261h1M279 262h1M281 263h1M283 264h1M285 265h1M287 267h1M289 268h1M291 269h1M293 270h1M295 271h1M297 272h1M299 273h1M301 275h1M303 276h1M305 277h1M307 278h1M309 279h1M311 280h1M313 282h1M315 283h1M317 284h1M319 285h1M321 286h1M323 287h1M325 288h1M327 290h1M329 291h1M331 292h1M333 293h1M335 294h1M337 295h1M339 296h1M341 298h1M343 299h1M345 300h1M347 301h1M349 302h1M351 303h1M353 305h1M355 306h1M357 307h1M359 308h1M361 309h1M363 310h1M365 311h1M367 313h1M369 314h1M371 315h1M373 316h1M373 162h1M371 163h1M369 164h1M367 165h1M365 167h1M363 168h1M361 169h1M359 170h1M357 171h1M355 172h1M353 173h1M351 175h1M349 176h1M347 177h1M345 178h1M343 179h1M341 180h1M339 182h1M337 183h1M335 184h1M333 185h1M331 186h1M329 187h1M327 188h1M325 190h1M323 191h1M321 192h1M319 193h1M317 194h1M315 195h1M313 196h1M311 198h1M309 199h1M307 200h1M305 201h1M303 202h1M301 203h1M299 205h1M297 206h1M295 207h1M293 208h1M291 209h1M289 210h1M287 211h1M285 213h1M283 214h1M281 215h1M279 216h1M277 217h1M275 218h1M273 219h1M271 221h1M269 222h1M267 223h1M265 224h1M263 225h1M261 226h1M259 228h1M257 229h1M255 230h1M253 231h1M251 232h1M249 233h1M247 234h1M245 236h1M243 237h1M241 238h1M239 239h1M316 105h1M315 107h1M314 109h1M313 111h1M311 113h1M310 115h1M309 117h1M308 119h1M307 121h1M306 123h1M305 125h1M303 127h1M302 129h1M301 131h1M300 133h1M299 135h1M298 137h1M296 139h1M295 141h1M294 143h1M293 145h1M292 147h1M291 149h1M290 151h1M288 153h1M287 155h1M286 157h1M285 159h1M284 161h1M283 163h1M282 165h1M280 167h1M279 169h1M278 171h1M277 173h1M276 175h1M275 177h1M273 179h1M272 181h1M271 183h1M270 185h1M269 187h1M268 189h1M267 191h1M265 193h1M264 195h1M263 197h1M262 199h1M261 201h1M260 203h1M259 205h1M257 207h1M256 209h1M255 211h1M254 213h1M253 215h1M252 217h1M250 219h1M249 221h1M248 223h1M247 225h1M246 227h1M245 229h1M244 231h1M242 233h1M241 235h1M240 237h1M239 239h1M162 105h1M163 107h1M164 109h1M165 111h1M167 113h1M168 115h1M169 117h1M170 119h1M171 121h1M172 123h1M173 125h1M175 127h1M176 129h1M177 131h1M178 133h1M179 135h1M180 137h1M182 139h1M183 141h1M184 143h1M185 145h1M186 147h1M187 149h1M188 151h1M190 153h1M191 155h1M192 157h1M193 159h1M194 161h1M195 163h1M196 165h1M198 167h1M199 169h1M200 171h1M201 173h1M202 175h1M203 177h1M205 179h1M206 181h1M207 183h1M208 185h1M209 187h1M210 189h1M211 191h1M213 193h1M214 195h1M215 197h1M216 199h1M217 201h1M218 203h1M219 205h1M221 207h1M222 209h1M223 211h1M224 213h1M225 215h1M226 217h1M228 219h1M229 221h1M230 223h1M231 225h1M232 227h1M233 229h1M234 231h1M236 233h1M237 235h1M238 237h1M239 239h1M105 162h1M107 163h1M109 164h1M111 165h1M113 167h1M115 168h1M117 169h1M119 170h1M121 171h1M123 172h1M125 173h1M127 175h1M129 176h1M131 177h1M133 178h1M135 179h1M137 180h1M139 182h1M141 183h1M143 184h1M145 185h1M147 186h1M149 187h1M151 188h1M153 190h1M155 191h1M157 192h1M159 193h1M161 194h1M163 195h1M165 196h1M167 198h1M169 199h1M171 200h1M173 201h1M175 202h1M177 203h1M179 205h1M181 206h1M183 207h1M185 208h1M187 209h1M189 210h1M191 211h1M193 213h1M195 214h1M197 215h1M199 216h1M201 217h1M203 218h1M205 219h1M207 221h1M209 222h1M211 223h1M213 224h1M215 225h1M217 226h1M219 228h1M221 229h1M223 230h1M225 231h1M227 232h1M229 233h1M231 234h1M233 236h1M235 237h1M237 238h1M239 239h1"/>
<path transform="translate(.5,.5)" fill="#ff0000" d="M37.5 292.5H38.5V301.5H37.5ZM35.5 290.5L36.5 290.5L38.5 292.5L38.5 293.5L37.5 293.5L35.5 291.5ZM35.5 286.5H36.5V291.5H35.5ZM33.5 284.5L34.5 284.5L36.5 286.5L36.5 287.5L35.5 287.5L33.5 285.5ZM31.5 284.5H34.5V285.5H31.5ZM29.5 286.5L31.5 284.5L32.5 284.5L32.5 285.5L30.5 287.5L29.5 287.5ZM29.5 286.5H30.5V289.5H29.5ZM29.5 288.5L30.5 288.5L32.5 290.5L32.5 291.5L31.5 291.5L29.5 289.5ZM43.5 290.5L45.5 288.5L46.5 288.5L46.5 289.5L44.5 291.5L43.5 291.5ZM45.5 286.5H46.5V289.5H45.5ZM43.5 284.5L44.5 284.5L46.5 286.5L46.5 287.5L45.5 287.5L43.5 285.5ZM41.5 284.5H44.5V285.5H41.5ZM39.5 286.5L41.5 284.5L42.5 284.5L42.5 285.5L40.5 287.5L39.5 287.5ZM39.5 286.5H40.5V291.5H39.5ZM37.5 292.5L39.5 290.5L40.5 290.5L40.5 291.5L38.5 293.5L37.5 293.5Z"/>
<path transform="translate(.5,.5)" fill="#ffff00" d="M97.3 389.05L97.5 387.5L98.5 387.5L98.5 388.5L98.3 390.05L97.3 390.05ZM96.7 390.5L97.3 389.05L98.3 389.05L98.3 390.05L97.7 391.5L96.7 391.5ZM95.74 391.74L96.7 390.5L97.7 390.5L97.7 391.5L96.74 392.74L95.74 392.74ZM94.5 392.7L95.74 391.74L96.74 391.74L96.74 392.74L95.5 393.7L94.5 393.7ZM93.05 393.3L94.5 392.7L95.5 392.7L95.5 393.7L94.05 394.3L93.05 394.3ZM91.5 393.5L93.05 393.3L94.05 393.3L94.05 394.3L92.5 394.5L91.5 394.5ZM89.95 393.3L90.95 393.3L92.5 393.5L92.5 394.5L91.5 394.5L89.95 394.3ZM88.5 392.7L89.5 392.7L90.95 393.3L90.95 394.3L89.95 394.3L88.5 393.7ZM87.26 391.74L88.26 391.74L89.5 392.7L89.5 393.7L88.5 393.7L87.26 392.74ZM86.3 390.5L87.3 390.5L88.26 391.74L88.26 392.74L87.26 392.74L86.3 391.5ZM85.7 389.05L86.7 389.05L87.3 390.5L87.3 391.5L86.3 391.5L85.7 390.05ZM85.5 387.5L86.5 387.5L86.7 389.05L86.7 390.05L85.7 390.05L85.5 388.5ZM85.5 387.5L85.7 385.95L86.7 385.95L86.7 386.95L86.5 388.5L85.5 388.5ZM85.7 385.95L86.3 384.5L87.3 384.5L87.3 385.5L86.7 386.95L85.7 386.95ZM86.3 384.5L87.26 383.26L88.26 383.26L88.26 384.26L87.3 385.5L86.3 385.5ZM87.26 383.26L88.5 382.3L89.5 382.3L89.5 383.3L88.26 384.26L87.26 384.26ZM88.5 382.3L89.95 381.7L90.95 381.7L90.95 382.7L89.5 383.3L88.5 383.3ZM89.95 381.7L91.5 381.5L92.5 381.5L92.5 382.5L90.95 382.7L89.95 382.7ZM91.5 381.5L92.5 381.5L94.05 381.7L94.05 382.7L93.05 382.7L91.5 382.5ZM93.05 381.7L94.05 381.7L95.5 382.3L95.5 383.3L94.5 383.3L93.05 382.7ZM94.5 382.3L95.5 382.3L96.74 383.26L96.74 384.26L95.74 384.26L94.5 383.3ZM95.74 383.26L96.74 383.26L97.7 384.5L97.7 385.5L96.7 385.5L95.74 384.26ZM96.7 384.5L97.7 384.5L98.3 385.95L98.3 386.95L97.3 386.95L96.7 385.5ZM97.3 385.95L98.3 385.95L98.5 387.5L98.5 388.5L97.5 388.5L97.3 386.95ZM85.5 377.5L86.5 377.5L87.5 379.5L87.5 380.5L86.5 380.5L85.5 378.5ZM86.5 379.5L87.5 379.5L89.5 381L89.5 382L88.5 382L86.5 380.5ZM88.5 381L89.5 381L91.5 381.5L91.5 382.5L90.5 382.5L88.5 382ZM96.5 379.5L97.5 377.5L98.5 377.5L98.5 378.5L97.5 380.5L96.5 380.5ZM94.5 381L96.5 379.5L97.5 379.5L97.5 380.5L95.5 382L94.5 382ZM92.5 381.5L94.5 381L95.5 381L95.5 382L93.5 382.5L92.5 382.5Z"/>
<path transform="translate(.5,.5)" fill="#00ff00" d="M177.5 431.5L178.5 431.5L180.5 432.5L180.5 433.5L179.5 433.5L177.5 432.5ZM179.5 432.5L180.5 432.5L182.5 433.5L182.5 434.5L181.5 434.5L179.5 433.5ZM181.5 433.5H188.5V434.5H181.5ZM187.5 433.5L189.5 432.5L190.5 432.5L190.5 433.5L188.5 434.5L187.5 434.5ZM189.5 432.5L191.5 431.5L192.5 431.5L192.5 432.5L190.5 433.5L189.5 433.5ZM177.5 447.5L179.5 446.5L180.5 446.5L180.5 447.5L178.5 448.5L177.5 448.5ZM179.5 446.5L181.5 445.5L182.5 445.5L182.5 446.5L180.5 447.5L179.5 447.5ZM181.5 445.5H188.5V446.5H181.5ZM187.5 445.5L188.5 445.5L190.5 446.5L190.5 447.5L189.5 447.5L187.5 446.5ZM189.5 446.5L190.5 446.5L192.5 447.5L192.5 448.5L191.5 448.5L189.5 447.5ZM181.5 433.5H182.5V446.5H181.5ZM187.5 433.5H188.5V446.5H187.5Z"/>
<path transform="translate(.5,.5)" fill="#0000ff" d="M286.5 434.5H289.5V435.5H286.5ZM288.5 434.5L289.5 434.5L291.5 436.5L291.5 437.5L290.5 437.5L288.5 435.5ZM290.5 436.5H291.5V439.5H290.5ZM288.5 440.5L290.5 438.5L291.5 438.5L291.5 439.5L289.5 441.5L288.5 441.5ZM286.5 440.5H289.5V441.5H286.5ZM284.5 438.5L285.5 438.5L287.5 440.5L287.5 441.5L286.5 441.5L284.5 439.5ZM284.5 436.5H285.5V439.5H284.5ZM284.5 436.5L286.5 434.5L287.5 434.5L287.5 435.5L285.5 437.5L284.5 437.5ZM296.5 438.5H299.5V439.5H296.5ZM298.5 438.5L299.5 438.5L301.5 440.5L301.5 441.5L300.5 441.5L298.5 439.5ZM300.5 440.5H301.5V443.5H300.5ZM298.5 444.5L300.5 442.5L301.5 442.5L301.5 443.5L299.5 445.5L298.5 445.5ZM296.5 444.5H299.5V445.5H296.5ZM294.5 442.5L295.5 442.5L297.5 444.5L297.5 445.5L296.5 445.5L294.5 443.5ZM294.5 440.5H295.5V443.5H294.5ZM294.5 440.5L296.5 438.5L297.5 438.5L297.5 439.5L295.5 441.5L294.5 441.5ZM288.5 434.5L290.5 432.5L291.5 432.5L291.5 433.5L289.5 435.5L288.5 435.5ZM290.5 432.5H295.5V433.5H290.5ZM294.5 432.5L295.5 432.5L298.5 433.5L298.5 434.5L297.5 434.5L294.5 433.5ZM297.5 433.5L298.5 433.5L301.5 436.5L301.5 437.5L300.5 437.5L297.5 434.5ZM284.5 442.5L285.5 442.5L288.5 445.5L288.5 446.5L287.5 446.5L284.5 443.5ZM287.5 445.5L288.5 445.5L291.5 446.5L291.5 447.5L290.5 447.5L287.5 446.5ZM290.5 446.5H295.5V447.5H290.5ZM294.5 446.5L296.5 444.5L297.5 444.5L297.5 445.5L295.5 447.5L294.5 447.5Z"/>
<path transform="translate(.5,.5)" fill="#ff0000" d="M389.5 389.5L390.5 389.5L394.5 393.5L394.5 394.5L393.5 394.5L389.5 390.5ZM389.5 389.5L390.5 387.5L391.5 387.5L391.5 388.5L390.5 390.5L389.5 390.5ZM390.5 387.5L391.5 384.5L392.5 384.5L392.5 385.5L391.5 388.5L390.5 388.5ZM391.5 381.5H392.5V385.5H391.5ZM389.5 378.5L390.5 378.5L392.5 381.5L392.5 382.5L391.5 382.5L389.5 379.5ZM387.5 377.5L388.5 377.5L390.5 378.5L390.5 379.5L389.5 379.5L387.5 378.5ZM383.5 377.5H388.5V378.5H383.5ZM380.5 380.5L383.5 377.5L384.5 377.5L384.5 378.5L381.5 381.5L380.5 381.5ZM380.5 380.5H381.5V386.5H380.5ZM380.5 385.5L381.5 385.5L382.5 387.5L382.5 388.5L381.5 388.5L380.5 386.5ZM381.5 387.5L382.5 387.5L383.5 389.5L383.5 390.5L382.5 390.5L381.5 388.5ZM382.5 389.5H383.5V392.5H382.5ZM378.5 391.5H383.5V392.5H378.5ZM377.5 389.5L378.5 389.5L379.5 391.5L379.5 392.5L378.5 392.5L377.5 390.5Z"/>
<path transform="translate(.5,.5)" fill="#ffff00" d="M431.5 284.5L432.5 284.5L434.5 286.5L434.5 287.5L433.5 287.5L431.5 285.5ZM433.5 286.5H434.5V299.5H433.5ZM433.5 286.5L435.5 284.5L436.5 284.5L436.5 285.5L434.5 287.5L433.5 287.5ZM435.5 284.5L436.5 284.5L438.5 286.5L438.5 287.5L437.5 287.5L435.5 285.5ZM437.5 286.5H438.5V299.5H437.5ZM437.5 286.5L439.5 284.5L440.5 284.5L440.5 285.5L438.5 287.5L437.5 287.5ZM439.5 284.5L440.5 284.5L442.5 286.5L442.5 287.5L441.5 287.5L439.5 285.5ZM441.5 286.5H442.5V296.5H441.5ZM441.5 295.5L442.5 295.5L446.5 300.5L446.5 301.5L445.5 301.5L441.5 296.5ZM441.5 290.5L445.5 286.5L446.5 286.5L446.5 287.5L442.5 291.5L441.5 291.5ZM445.5 286.5H446.5V296.5H445.5ZM441.5 300.5L445.5 295.5L446.5 295.5L446.5 296.5L442.5 301.5L441.5 301.5Z"/>
<path transform="translate(.5,.5)" fill="#00ff00" d="M431.5 186.5H438.5V187.5H431.5ZM435.5 184.5L436.5 184.5L438.5 186.5L438.5 187.5L437.5 187.5L435.5 185.5ZM435.5 182.5H436.5V185.5H435.5ZM435.5 182.5L437.5 180.5L438.5 180.5L438.5 181.5L436.5 183.5L435.5 183.5ZM437.5 180.5H442.5V181.5H437.5ZM441.5 180.5L442.5 180.5L444.5 182.5L444.5 183.5L443.5 183.5L441.5 181.5ZM443.5 182.5H444.5V185.5H443.5ZM441.5 186.5L443.5 184.5L444.5 184.5L444.5 185.5L442.5 187.5L441.5 187.5ZM441.5 186.5H448.5V187.5H441.5ZM431.5 190.5H448.5V191.5H431.5Z"/>
<path transform="translate(.5,.5)" fill="#0000ff" d="M377.5 83.5L378.5 83.5L380.5 85.5L380.5 86.5L379.5 86.5L377.5 84.5ZM379.5 85.5H380.5V98.5H379.5ZM379.5 85.5L381.5 83.5L382.5 83.5L382.5 84.5L380.5 86.5L379.5 86.5ZM381.5 83.5L382.5 83.5L384.5 85.5L384.5 86.5L383.5 86.5L381.5 84.5ZM383.5 85.5H384.5V98.5H383.5ZM383.5 85.5L385.5 83.5L386.5 83.5L386.5 84.5L384.5 86.5L383.5 86.5ZM385.5 83.5L386.5 83.5L388.5 85.5L388.5 86.5L387.5 86.5L385.5 84.5ZM387.5 85.5H388.5V98.5H387.5ZM387.5 97.5L388.5 97.5L390.5 99.5L390.5 100.5L389.5 100.5L387.5 98.5ZM389.5 99.5H392.5V100.5H389.5ZM391.5 99.5L393.5 97.5L394.5 97.5L394.5 98.5L392.5 100.5L391.5 100.5ZM393.5 94.5H394.5V98.5H393.5ZM392.5 94.5H393.5V96.5H392.5Z"/>
<path transform="translate(.5,.5)" fill="#ff0000" d="M286.5 35.5L287.5 35.5L291.5 39.5L291.5 40.5L290.5 40.5L286.5 36.5ZM290.5 39.5L291.5 39.5L295.5 43.5L295.5 44.5L294.5 44.5L290.5 40.5ZM296.5 29.5H301.5V30.5H296.5ZM284.5 45.5L290.5 39.5L291.5 39.5L291.5 40.5L285.5 46.5L284.5 46.5ZM290.5 39.5L300.5 29.5L301.5 29.5L301.5 30.5L291.5 40.5L290.5 40.5ZM300.5 29.5H301.5V34.5H300.5Z"/>
<path transform="translate(.5,.5)" fill="#ffff00" d="M176.5 31.5L178.5 29.5L179.5 29.5L179.5 30.5L177.5 32.5L176.5 32.5ZM178.5 29.5L179.5 29.5L181.5 39.5L181.5 40.5L180.5 40.5L178.5 30.5ZM180.5 39.5H181.5V44.5H180.5ZM180.5 39.5L184.5 29.5L185.5 29.5L185.5 30.5L181.5 40.5L180.5 40.5ZM184.5 29.5L185.5 29.5L187.5 31.5L187.5 32.5L186.5 32.5L184.5 30.5ZM188.5 29.5H191.5V30.5H188.5ZM190.5 29.5L191.5 29.5L193.5 31.5L193.5 32.5L192.5 32.5L190.5 30.5ZM192.5 31.5H193.5V34.5H192.5ZM190.5 35.5L192.5 33.5L193.5 33.5L193.5 34.5L191.5 36.5L190.5 36.5ZM188.5 35.5H191.5V36.5H188.5ZM186.5 33.5L187.5 33.5L189.5 35.5L189.5 36.5L188.5 36.5L186.5 34.5ZM186.5 31.5H187.5V34.5H186.5ZM186.5 31.5L188.5 29.5L189.5 29.5L189.5 30.5L187.5 32.5L186.5 32.5ZM187.5 33.5L188.5 33.5L193.5 39.5L193.5 40.5L192.5 40.5L187.5 34.5ZM192.5 39.5H193.5V43.5H192.5ZM190.5 45.5L192.5 42.5L193.5 42.5L193.5 43.5L191.5 46.5L190.5 46.5Z"/>
<path transform="translate(.5,.5)" fill="#00ff00" d="M83.5 89.5L87.5 83.5L88.5 83.5L88.5 84.5L84.5 90.5L83.5 90.5ZM87.5 83.5L88.5 83.5L90.5 89.5L90.5 90.5L89.5 90.5L87.5 84.5ZM89.5 89.5L93.5 83.5L94.5 83.5L94.5 84.5L90.5 90.5L89.5 90.5ZM93.5 83.5L94.5 83.5L96.5 89.5L96.5 90.5L95.5 90.5L93.5 84.5ZM95.5 89.5L99.5 83.5L100.5 83.5L100.5 84.5L96.5 90.5L95.5 90.5ZM83.5 99.5L87.5 93.5L88.5 93.5L88.5 94.5L84.5 100.5L83.5 100.5ZM87.5 93.5L88.5 93.5L90.5 99.5L90.5 100.5L89.5 100.5L87.5 94.5ZM89.5 99.5L93.5 93.5L94.5 93.5L94.5 94.5L90.5 100.5L89.5 100.5ZM93.5 93.5L94.5 93.5L96.5 99.5L96.5 100.5L95.5 100.5L93.5 94.5ZM95.5 99.5L99.5 93.5L100.5 93.5L100.5 94.5L96.5 100.5L95.5 100.5Z"/>
<path transform="translate(.5,.5)" fill="#0000ff" d="M29.5 184.5H46.5V185.5H29.5ZM29.5 176.5L30.5 176.5L33.5 179.5L33.5 180.5L32.5 180.5L29.5 177.5ZM32.5 179.5L33.5 179.5L34.5 181.5L34.5 182.5L33.5 182.5L32.5 180.5ZM33.5 181.5H34.5V188.5H33.5ZM32.5 189.5L33.5 187.5L34.5 187.5L34.5 188.5L33.5 190.5L32.5 190.5ZM29.5 192.5L32.5 189.5L33.5 189.5L33.5 190.5L30.5 193.5L29.5 193.5ZM42.5 179.5L45.5 176.5L46.5 176.5L46.5 177.5L43.5 180.5L42.5 180.5ZM41.5 181.5L42.5 179.5L43.5 179.5L43.5 180.5L42.5 182.5L41.5 182.5ZM41.5 181.5H42.5V188.5H41.5ZM41.5 187.5L42.5 187.5L43.5 189.5L43.5 190.5L42.5 190.5L41.5 188.5ZM42.5 189.5L43.5 189.5L46.5 192.5L46.5 193.5L45.5 193.5L42.5 190.5Z"/>
<path class="p" transform="translate(0,.5)" stroke="#808080" d="M492 240h1M494 240h1M496 240h1M498 240h1M500 240h1M502 240h1M504 240h1M506 240h1M508 240h1M510 240h1M512 240h1M514 240h1M516 240h1M518 240h1M520 240h1M522 240h1M524 240h1M526 240h1M528 240h1M530 240h1M532 240h1M534 240h1M536 240h1M538 240h1M540 240h1M542 240h1M544 240h1M546 240h1M548 240h1M550 240h1M552 240h1M554 240h1M556 240h1M558 240h1M560 240h1M562 240h1M564 240h1M566 240h1M568 240h1M570 240h1M572 240h1M574 240h1M576 240h1M578 240h1M580 240h1M582 240h1M584 240h1M586 240h1M588 240h1M590 240h1M592 240h1M594 240h1M596 240h1M598 240h1M600 240h1M602 240h1M604 240h1M606 240h1M608 240h1M610 240h1M612 240h1M614 240h1M616 240h1M618 240h1M620 240h1M622 240h1M624 240h1M626 240h1M628 240h1M630 240h1M632 240h1M634 240h1M636 240h1M638 240h1M640 240h1M642 240h1M644 240h1M646 240h1M648 240h1M650 240h1M652 240h1M654 240h1M656 240h1M658 240h1M660 240h1M662 240h1M664 240h1M666 240h1M668 240h1M670 240h1M672 240h1M674 240h1M676 240h1M678 240h1M680 240h1M682 240h1M684 240h1M686 240h1M688 240h1M690 240h1M692 240h1M694 240h1M696 240h1M698 240h1M700 240h1M702 240h1M704 240h1M706 240h1M708 240h1M710 240h1M712 240h1M714 240h1M716 240h1M718 240h1M720 240h1M720 240h1M718 241h1M716 242h1M714 243h1M712 245h1M710 246h1M708 247h1M706 248h1M704 249h1M702 250h1M700 252h1M698 253h1M696 254h1M694 255h1M692 256h1M690 257h1M688 259h1M686 260h1M684 261h1M682 262h1M680 263h1M678 264h1M676 265h1M674 267h1M672 268h1M670 269h1M668 270h1M666 271h1M664 272h1M662 274h1M660 275h1M658 276h1M656 277h1M654 278h1M652 279h1M650 281h1M648 282h1M646 283h1M644 284h1M642 285h1M640 286h1M638 287h1M636 289h1M634 290h1M632 291h1M630 292h1M628 293h1M626 294h1M624 296h1M622 297h1M620 298h1M618 299h1M616 300h1M614 301h1M612 303h1M610 304h1M608 305h1M606 306h1M604 307h1M602 308h1M600 309h1M598 311h1M596 312h1M594 313h1M592 314h1M590 315h1M588 316h1M586 318h1M584 319h1M582 320h1M580 321h1M578 322h1M576 323h1M574 325h1M572 326h1M570 327h1M568 328h1M566 329h1M564 330h1M562 331h1M560 333h1M558 334h1M556 335h1M554 336h1M552 337h1M550 338h1M548 340h1M546 341h1M544 342h1M542 343h1M540 344h1M538 345h1M536 347h1M534 348h1M532 349h1M530 350h1M528 351h1M526 352h1M524 353h1M522 355h1M520 356h1M518 357h1M516 358h1M514 359h1M512 360h1M510 362h1M508 363h1M506 364h1M504 365h1M502 366h1M500 367h1M498 369h1M496 370h1M494 371h1M492 372h1M720 240h1M719 242h1M718 244h1M717 246h1M715 248h1M714 250h1M713 252h1M712 254h1M711 256h1M710 258h1M708 260h1M707 262h1M706 264h1M705 266h1M704 268h1M703 270h1M702 272h1M700 274h1M699 276h1M698 278h1M697 280h1M696 282h1M695 284h1M693 286h1M692 288h1M691 290h1M690 292h1M689 294h1M688 296h1M687 298h1M685 300h1M684 302h1M683 304h1M682 306h1M681 308h1M680 310h1M678 312h1M677 314h1M676 316h1M675 318h1M674 320h1M673 322h1M672 324h1M670 326h1M669 328h1M668 330h1M667 332h1M666 334h1M665 336h1M663 338h1M662 340h1M661 342h1M660 344h1M659 346h1M658 348h1M657 350h1M655 352h1M654 354h1M653 356h1M652 358h1M651 360h1M650 362h1M648 364h1M647 366h1M646 368h1M645 370h1M644 372h1M643 374h1M642 376h1M640 378h1M639 380h1M638 382h1M637 384h1M636 386h1M635 388h1M633 390h1M632 392h1M631 394h1M630 396h1M629 398h1M628 400h1M627 402h1M625 404h1M624 406h1M623 408h1M622 410h1M621 412h1M620 414h1M618 416h1M617 418h1M616 420h1M615 422h1M614 424h1M613 426h1M612 428h1M610 430h1M609 432h1M608 434h1M607 436h1M606 438h1M605 440h1M603 442h1M602 444h1M601 446h1M600 448h1M599 450h1M598 452h1M597 454h1M595 456h1M594 458h1M593 460h1M592 462h1M591 464h1M590 466h1M720 240h1M720 242h1M720 244h1M720 246h1M720 248h1M720 250h1M720 252h1M720 254h1M720 256h1M720 258h1M720 260h1M720 262h1M720 264h1M720 266h1M720 268h1M720 270h1M720 272h1M720 274h1M720 276h1M720 278h1M720 280h1M720 282h1M720 284h1M720 286h1M720 288h1M720 290h1M720 292h1M720 294h1M720 296h1M720 298h1M720 300h1M720 302h1M720 304h1M720 306h1M720 308h1M720 310h1M720 312h1M720 314h1M720 316h1M720 318h1M720 320h1M720 322h1M720 324h1M720 326h1M720 328h1M720 330h1M720 332h1M720 334h1M720 336h1M720 338h1M720 340h1M720 342h1M720 344h1M720 346h1M720 348h1M720 350h1M720 352h1M720 354h1M720 356h1M720 358h1M720 360h1M720 362h1M720 364h1M720 366h1M720 368h1M720 370h1M720 372h1M720 374h1M720 376h1M720 378h1M720 380h1M720 382h1M720 384h1M720 386h1M720 388h1M720 390h1M720 392h1M720 394h1M720 396h1M720 398h1M720 400h1M720 402h1M720 404h1M720 406h1M720 408h1M720 410h1M720 412h1M720 414h1M720 416h1M720 418h1M720 420h1M720 422h1M720 424h1M720 426h1M720 428h1M720 430h1M720 432h1M720 434h1M720 436h1M720 438h1M720 440h1M720 442h1M720 444h1M720 446h1M720 448h1M720 450h1M720 452h1M720 454h1M720 456h1M720 458h1M720 460h1M720 462h1M720 464h1M720 466h1M720 240h1M721 242h1M722 244h1M723 246h1M725 248h1M726 250h1M727 252h1M728 254h1M729 256h1M730 258h1M732 260h1M733 262h1M734 264h1M735 266h1M736 268h1M737 270h1M738 272h1M740 274h1M741 276h1M742 278h1M743 280h1M744 282h1M745 284h1M747 286h1M748 288h1M749 290h1M750 292h1M751 294h1M752 296h1M753 298h1M755 300h1M756 302h1M757 304h1M758 306h1M759 308h1M760 310h1M762 312h1M763 314h1M764 316h1M765 318h1M766 320h1M767 322h1M768 324h1M770 326h1M771 328h1M772 330h1M773 332h1M774 334h1M775 336h1M777 338h1M778 340h1M779 342h1M780 344h1M781 346h1M782 348h1M783 350h1M785 352h1M786 354h1M787 356h1M788 358h1M789 360h1M790 362h1M792 364h1M793 366h1M794 368h1M795 370h1M796 372h1M797 374h1M798 376h1M800 378h1M801 380h1M802 382h1M803 384h1M804 386h1M805 388h1M807 390h1M808 392h1M809 394h1M810 396h1M811 398h1M812 400h1M813 402h1M815 404h1M816 406h1M817 408h1M818 410h1M819 412h1M820 414h1M822 416h1M823 418h1M824 420h1M825 422h1M826 424h1M827 426h1M828 428h1M830 430h1M831 432h1M832 434h1M833 436h1M834 438h1M835 440h1M837 442h1M838 444h1M839 446h1M840 448h1M841 450h1M842 452h1M843 454h1M845 456h1M846 458h1M847 460h1M848 462h1M849 464h1M850 466h1M720 240h1M722 241h1M724 242h1M726 243h1M728 245h1M730 246h1M732 247h1M734 248h1M736 249h1M738 250h1M740 252h1M742 253h1M744 254h1M746 255h1M748 256h1M750 257h1M752 258h1M754 260h1M756 261h1M758 262h1M760 263h1M762 264h1M764 265h1M766 267h1M768 268h1M770 269h1M772 270h1M774 271h1M776 272h1M778 273h1M780 275h1M782 276h1M784 277h1M786 278h1M788 279h1M790 280h1M792 282h1M794 283h1M796 284h1M798 285h1M800 286h1M802 287h1M804 288h1M806 290h1M808 291h1M810 292h1M812 293h1M814 294h1M816 295h1M818 297h1M820 298h1M822 299h1M824 300h1M826 301h1M828 302h1M830 303h1M832 305h1M834 306h1M836 307h1M838 308h1M840 309h1M842 310h1M844 312h1M846 313h1M848 314h1M850 315h1M852 316h1M854 317h1M856 318h1M858 320h1M860 321h1M862 322h1M864 323h1M866 324h1M868 325h1M870 327h1M872 328h1M874 329h1M876 330h1M878 331h1M880 332h1M882 333h1M884 335h1M886 336h1M888 337h1M890 338h1M892 339h1M894 340h1M896 342h1M898 343h1M900 344h1M902 345h1M904 346h1M906 347h1M908 348h1M910 350h1M912 351h1M914 352h1M916 353h1M918 354h1M920 355h1M922 357h1M924 358h1M926 359h1M928 360h1M930 361h1M932 362h1M934 363h1M936 365h1M938 366h1M940 367h1M942 368h1M944 369h1M946 370h1M720 240h1M722 240h1M724 240h1M726 240h1M728 240h1M730 240h1M732 240h1M734 240h1M736 240h1M738 240h1M740 240h1M742 240h1M744 240h1M746 240h1M748 240h1M750 240h1M752 240h1M754 240h1M756 240h1M758 240h1M760 240h1M762 240h1M764 240h1M766 240h1M768 240h1M770 240h1M772 240h1M774 240h1M776 240h1M778 240h1M780 240h1M782 240h1M784 240h1M786 240h1M788 240h1M790 240h1M792 240h1M794 240h1M796 240h1M798 240h1M800 240h1M802 240h1M804 240h1M806 240h1M808 240h1M810 240h1M812 240h1M814 240h1M816 240h1M818 240h1M820 240h1M822 240h1M824 240h1M826 240h1M828 240h1M830 240h1M832 240h1M834 240h1M836 240h1M838 240h1M840 240h1M842 240h1M844 240h1M846 240h1M848 240h1M850 240h1M852 240h1M854 240h1M856 240h1M858 240h1M860 240h1M862 240h1M864 240h1M866 240h1M868 240h1M870 240h1M872 240h1M874 240h1M876 240h1M878 240h1M880 240h1M882 240h1M884 240h1M886 240h1M888 240h1M890 240h1M892 240h1M894 240h1M896 240h1M898 240h1M900 240h1M902 240h1M904 240h1M906 240h1M908 240h1M910 240h1M912 240h1M914 240h1M916 240h1M918 240h1M920 240h1M922 240h1M924 240h1M926 240h1M928 240h1M930 240h1M932 240h1M934 240h1M936 240h1M938 240h1M940 240h1M942 240h1M944 240h1M946 240h1M946 110h1M944 111h1M942 112h1M940 113h1M938 114h1M936 115h1M934 117h1M932 118h1M930 119h1M928 120h1M926 121h1M924 122h1M922 123h1M920 125h1M918 126h1M916 127h1M914 128h1M912 129h1M910 130h1M908 132h1M906 133h1M904 134h1M902 135h1M900 136h1M898 137h1M896 138h1M894 140h1M892 141h1M890 142h1M888 143h1M886 144h1M884 145h1M882 147h1M880 148h1M878 149h1M876 150h1M874 151h1M872 152h1M870 153h1M868 155h1M866 156h1M864 157h1M862 158h1M860 159h1M858 160h1M856 162h1M854 163h1M852 164h1M850 165h1M848 166h1M846 167h1M844 168h1M842 170h1M840 171h1M838 172h1M836 173h1M834 174h1M832 175h1M830 177h1M828 178h1M826 179h1M824 180h1M822 181h1M820 182h1M818 183h1M816 185h1M814 186h1M812 187h1M810 188h1M808 189h1M806 190h1M804 192h1M802 193h1M800 194h1M798 195h1M796 196h1M794 197h1M792 198h1M790 200h1M788 201h1M786 202h1M784 203h1M782 204h1M780 205h1M778 207h1M776 208h1M774 209h1M772 210h1M770 211h1M768 212h1M766 213h1M764 215h1M762 216h1M760 217h1M758 218h1M756 219h1M754 220h1M752 222h1M750 223h1M748 224h1M746 225h1M744 226h1M742 227h1M740 228h1M738 230h1M736 231h1M734 232h1M732 233h1M730 234h1M728 235h1M726 237h1M724 238h1M722 239h1M720 240h1M852 12h1M851 14h1M850 16h1M849 18h1M847 20h1M846 22h1M845 24h1M844 26h1M843 28h1M842 30h1M840 32h1M839 34h1M838 36h1M837 38h1M836 40h1M835 42h1M833 44h1M832 46h1M831 48h1M830 50h1M829 52h1M828 54h1M827 56h1M825 58h1M824 60h1M823 62h1M822 64h1M821 66h1M820 68h1M818 70h1M817 72h1M816 74h1M815 76h1M814 78h1M813 80h1M811 82h1M810 84h1M809 86h1M808 88h1M807 90h1M806 92h1M805 94h1M803 96h1M802 98h1M801 100h1M800 102h1M799 104h1M798 106h1M796 108h1M795 110h1M794 112h1M793 114h1M792 116h1M791 118h1M789 120h1M788 122h1M787 124h1M786 126h1M785 128h1M784 130h1M783 132h1M781 134h1M780 136h1M779 138h1M778 140h1M777 142h1M776 144h1M774 146h1M773 148h1M772 150h1M771 152h1M770 154h1M769 156h1M767 158h1M766 160h1M765 162h1M764 164h1M763 166h1M762 168h1M761 170h1M759 172h1M758 174h1M757 176h1M756 178h1M755 180h1M754 182h1M752 184h1M751 186h1M750 188h1M749 190h1M748 192h1M747 194h1M745 196h1M744 198h1M743 200h1M742 202h1M741 204h1M740 206h1M739 208h1M737 210h1M736 212h1M735 214h1M734 216h1M733 218h1M732 220h1M730 222h1M729 224h1M728 226h1M727 228h1M726 230h1M725 232h1M723 234h1M722 236h1M721 238h1M720 240h1M720 12h1M720 14h1M720 16h1M720 18h1M720 20h1M720 22h1M720 24h1M720 26h1M720 28h1M720 30h1M720 32h1M720 34h1M720 36h1M720 38h1M720 40h1M720 42h1M720 44h1M720 46h1M720 48h1M720 50h1M720 52h1M720 54h1M720 56h1M720 58h1M720 60h1M720 62h1M720 64h1M720 66h1M720 68h1M720 70h1M720 72h1M720 74h1M720 76h1M720 78h1M720 80h1M720 82h1M720 84h1M720 86h1M720 88h1M720 90h1M720 92h1M720 94h1M720 96h1M720 98h1M720 100h1M720 102h1M720 104h1M720 106h1M720 108h1M720 110h1M720 112h1M720 114h1M720 116h1M720 118h1M720 120h1M720 122h1M720 124h1M720 126h1M720 128h1M720 130h1M720 132h1M720 134h1M720 136h1M720 138h1M720 140h1M720 142h1M720 144h1M720 146h1M720 148h1M720 150h1M720 152h1M720 154h1M720 156h1M720 158h1M720 160h1M720 162h1M720 164h1M720 166h1M720 168h1M720 170h1M720 172h1M720 174h1M720 176h1M720 178h1M720 180h1M720 182h1M720 184h1M720 186h1M720 188h1M720 190h1M720 192h1M720 194h1M720 196h1M720 198h1M720 200h1M720 202h1M720 204h1M720 206h1M720 208h1M720 210h1M720 212h1M720 214h1M720 216h1M720 218h1M720 220h1M720 222h1M720 224h1M720 226h1M720 228h1M720 230h1M720 232h1M720 234h1M720 236h1M720 238h1M720 240h1M588 12h1M589 14h1M590 16h1M591 18h1M593 20h1M594 22h1M595 24h1M596 26h1M597 28h1M598 30h1M600 32h1M601 34h1M602 36h1M603 38h1M604 40h1M605 42h1M607 44h1M608 46h1M609 48h1M610 50h1M611 52h1M612 54h1M613 56h1M615 58h1M616 60h1M617 62h1M618 64h1M619 66h1M620 68h1M622 70h1M623 72h1M624 74h1M625 76h1M626 78h1M627 80h1M629 82h1M630 84h1M631 86h1M632 88h1M633 90h1M634 92h1M635 94h1M637 96h1M638 98h1M639 100h1M640 102h1M641 104h1M642 106h1M644 108h1M645 110h1M646 112h1M647 114h1M648 116h1M649 118h1M651 120h1M652 122h1M653 124h1M654 126h1M655 128h1M656 130h1M657 132h1M659 134h1M660 136h1M661 138h1M662 140h1M663 142h1M664 144h1M666 146h1M667 148h1M668 150h1M669 152h1M670 154h1M671 156h1M673 158h1M674 160h1M675 162h1M676 164h1M677 166h1M678 168h1M679 170h1M681 172h1M682 174h1M683 176h1M684 178h1M685 180h1M686 182h1M688 184h1M689 186h1M690 188h1M691 190h1M692 192h1M693 194h1M695 196h1M696 198h1M697 200h1M698 202h1M699 204h1M700 206h1M701 208h1M703 210h1M704 212h1M705 214h1M706 216h1M707 218h1M708 220h1M710 222h1M711 224h1M712 226h1M713 228h1M714 230h1M715 232h1M717 234h1M718 236h1M719 238h1M720 240h1M492 108h1M494 109h1M496 110h1M498 111h1M500 113h1M502 114h1M504 115h1M506 116h1M508 117h1M510 118h1M512 120h1M514 121h1M516 122h1M518 123h1M520 124h1M522 125h1M524 127h1M526 128h1M528 129h1M530 130h1M532 131h1M534 132h1M536 133h1M538 135h1M540 136h1M542 137h1M544 138h1M546 139h1M548 140h1M550 142h1M552 143h1M554 144h1M556 145h1M558 146h1M560 147h1M562 149h1M564 150h1M566 151h1M568 152h1M570 153h1M572 154h1M574 155h1M576 157h1M578 158h1M580 159h1M582 160h1M584 161h1M586 162h1M588 164h1M590 165h1M592 166h1M594 167h1M596 168h1M598 169h1M600 171h1M602 172h1M604 173h1M606 174h1M608 175h1M610 176h1M612 177h1M614 179h1M616 180h1M618 181h1M620 182h1M622 183h1M624 184h1M626 186h1M628 187h1M630 188h1M632 189h1M634 190h1M636 191h1M638 193h1M640 194h1M642 195h1M644 196h1M646 197h1M648 198h1M650 199h1M652 201h1M654 202h1M656 203h1M658 204h1M660 205h1M662 206h1M664 208h1M666 209h1M668 210h1M670 211h1M672 212h1M674 213h1M676 215h1M678 216h1M680 217h1M682 218h1M684 219h1M686 220h1M688 221h1M690 223h1M692 224h1M694 225h1M696 226h1M698 227h1M700 228h1M702 230h1M704 231h1M706 232h1M708 233h1M710 234h1M712 235h1M714 237h1M716 238h1M718 239h1M720 240h1"/>
<path transform="translate(.5,.5)" fill="#c0c0c0" d="M491.5 11.5H947.5V12.5H491.5ZM946.5 11.5H947.5V467.5H946.5ZM491.5 466.5H947.5V467.5H491.5ZM491.5 11.5H492.5V467.5H491.5Z"/>
<path transform="translate(.5,.5)" fill="#808080" d="M499.5 300.5H500.5V305.5H499.5ZM498.5 299.5L499.5 299.5L500.5 300.5L500.5 301.5L499.5 301.5L498.5 300.5ZM498.5 297.5H499.5V300.5H498.5ZM497.5 296.5L498.5 296.5L499.5 297.5L499.5 298.5L498.5 298.5L497.5 297.5ZM496.5 296.5H498.5V297.5H496.5ZM495.5 297.5L496.5 296.5L497.5 296.5L497.5 297.5L496.5 298.5L495.5 298.5ZM495.5 297.5H496.5V299.5H495.5ZM495.5 298.5L496.5 298.5L497.5 299.5L497.5 300.5L496.5 300.5L495.5 299.5ZM502.5 299.5L503.5 298.5L504.5 298.5L504.5 299.5L503.5 300.5L502.5 300.5ZM503.5 297.5H504.5V299.5H503.5ZM502.5 296.5L503.5 296.5L504.5 297.5L504.5 298.5L503.5 298.5L502.5 297.5ZM501.5 296.5H503.5V297.5H501.5ZM500.5 297.5L501.5 296.5L502.5 296.5L502.5 297.5L501.5 298.5L500.5 298.5ZM500.5 297.5H501.5V300.5H500.5ZM499.5 300.5L500.5 299.5L501.5 299.5L501.5 300.5L500.5 301.5L499.5 301.5ZM502.27 460.65L502.5 459.5L503.5 459.5L503.5 460.5L503.27 461.65L502.27 461.65ZM501.62 461.62L502.27 460.65L503.27 460.65L503.27 461.65L502.62 462.62L501.62 462.62ZM500.65 462.27L501.62 461.62L502.62 461.62L502.62 462.62L501.65 463.27L500.65 463.27ZM499.5 462.5L500.65 462.27L501.65 462.27L501.65 463.27L500.5 463.5L499.5 463.5ZM498.35 462.27L499.35 462.27L500.5 462.5L500.5 463.5L499.5 463.5L498.35 463.27ZM497.38 461.62L498.38 461.62L499.35 462.27L499.35 463.27L498.35 463.27L497.38 462.62ZM496.73 460.65L497.73 460.65L498.38 461.62L498.38 462.62L497.38 462.62L496.73 461.65ZM496.5 459.5L497.5 459.5L497.73 460.65L497.73 461.65L496.73 461.65L496.5 460.5ZM496.5 459.5L496.73 458.35L497.73 458.35L497.73 459.35L497.5 460.5L496.5 460.5ZM496.73 458.35L497.38 457.38L498.38 457.38L498.38 458.38L497.73 459.35L496.73 459.35ZM497.38 457.38L498.35 456.73L499.35 456.73L499.35 457.73L498.38 458.38L497.38 458.38ZM498.35 456.73L499.5 456.5L500.5 456.5L500.5 457.5L499.35 457.73L498.35 457.73ZM499.5 456.5L500.5 456.5L501.65 456.73L501.65 457.73L500.65 457.73L499.5 457.5ZM500.65 456.73L501.65 456.73L502.62 457.38L502.62 458.38L501.62 458.38L500.65 457.73ZM501.62 457.38L502.62 457.38L503.27 458.35L503.27 459.35L502.27 459.35L501.62 458.38ZM502.27 458.35L503.27 458.35L503.5 459.5L503.5 460.5L502.5 460.5L502.27 459.35ZM496.5 454.5L497.5 454.5L498 455.5L498 456.5L497 456.5L496.5 455.5ZM497 455.5L498 455.5L499 456.25L499 457.25L498 457.25L497 456.5ZM498 456.25L499 456.25L500 456.5L500 457.5L499 457.5L498 457.25ZM502 455.5L502.5 454.5L503.5 454.5L503.5 455.5L503 456.5L502 456.5ZM501 456.25L502 455.5L503 455.5L503 456.5L502 457.25L501 457.25ZM500 456.5L501 456.25L502 456.25L502 457.25L501 457.5L500 457.5ZM655 454.5L656 454.5L657 455L657 456L656 456L655 455.5ZM656 455L657 455L658 455.5L658 456.5L657 456.5L656 456ZM657 455.5H661V456.5H657ZM660 455.5L661 455L662 455L662 456L661 456.5L660 456.5ZM661 455L662 454.5L663 454.5L663 455.5L662 456L661 456ZM655 462.5L656 462L657 462L657 463L656 463.5L655 463.5ZM656 462L657 461.5L658 461.5L658 462.5L657 463L656 463ZM657 461.5H661V462.5H657ZM660 461.5L661 461.5L662 462L662 463L661 463L660 462.5ZM661 462L662 462L663 462.5L663 463.5L662 463.5L661 463ZM657 455.5H658V462.5H657ZM660 455.5H661V462.5H660ZM777.5 456H779.5V457H777.5ZM778.5 456L779.5 456L780.5 457L780.5 458L779.5 458L778.5 457ZM779.5 457H780.5V459H779.5ZM778.5 459L779.5 458L780.5 458L780.5 459L779.5 460L778.5 460ZM777.5 459H779.5V460H777.5ZM776.5 458L777.5 458L778.5 459L778.5 460L777.5 460L776.5 459ZM776.5 457H777.5V459H776.5ZM776.5 457L777.5 456L778.5 456L778.5 457L777.5 458L776.5 458ZM782.5 458H784.5V459H782.5ZM783.5 458L784.5 458L785.5 459L785.5 460L784.5 460L783.5 459ZM784.5 459H785.5V461H784.5ZM783.5 461L784.5 460L785.5 460L785.5 461L784.5 462L783.5 462ZM782.5 461H784.5V462H782.5ZM781.5 460L782.5 460L783.5 461L783.5 462L782.5 462L781.5 461ZM781.5 459H782.5V461H781.5ZM781.5 459L782.5 458L783.5 458L783.5 459L782.5 460L781.5 460ZM778.5 456L779.5 455L780.5 455L780.5 456L779.5 457L778.5 457ZM779.5 455H782.5V456H779.5ZM781.5 455L782.5 455L784 455.5L784 456.5L783 456.5L781.5 456ZM783 455.5L784 455.5L785.5 457L785.5 458L784.5 458L783 456.5ZM776.5 460L777.5 460L779 461.5L779 462.5L778 462.5L776.5 461ZM778 461.5L779 461.5L780.5 462L780.5 463L779.5 463L778 462.5ZM779.5 462H782.5V463H779.5ZM781.5 462L782.5 461L783.5 461L783.5 462L782.5 463L781.5 463ZM940.5 460.5L941.5 460.5L943.5 462.5L943.5 463.5L942.5 463.5L940.5 461.5ZM940.5 460.5L941 459.5L942 459.5L942 460.5L941.5 461.5L940.5 461.5ZM941 459.5L941.5 458L942.5 458L942.5 459L942 460.5L941 460.5ZM941.5 456.5H942.5V459H941.5ZM940.5 455L941.5 455L942.5 456.5L942.5 457.5L941.5 457.5L940.5 456ZM939.5 454.5L940.5 454.5L941.5 455L941.5 456L940.5 456L939.5 455.5ZM937.5 454.5H940.5V455.5H937.5ZM936 456L937.5 454.5L938.5 454.5L938.5 455.5L937 457L936 457ZM936 456H937V459.5H936ZM936 458.5L937 458.5L937.5 459.5L937.5 460.5L936.5 460.5L936 459.5ZM936.5 459.5L937.5 459.5L938 460.5L938 461.5L937 461.5L936.5 460.5ZM937 460.5H938V462.5H937ZM935 461.5H938V462.5H935ZM934.5 460.5L935.5 460.5L936 461.5L936 462.5L935 462.5L934.5 461.5ZM934.5 296.5L935.5 296.5L936.5 297.5L936.5 298.5L935.5 298.5L934.5 297.5ZM935.5 297.5H936.5V304.5H935.5ZM935.5 297.5L936.5 296.5L937.5 296.5L937.5 297.5L936.5 298.5L935.5 298.5ZM936.5 296.5L937.5 296.5L938.5 297.5L938.5 298.5L937.5 298.5L936.5 297.5ZM937.5 297.5H938.5V304.5H937.5ZM937.5 297.5L938.5 296.5L939.5 296.5L939.5 297.5L938.5 298.5L937.5 298.5ZM938.5 296.5L939.5 296.5L940.5 297.5L940.5 298.5L939.5 298.5L938.5 297.5ZM939.5 297.5H940.5V303H939.5ZM939.5 302L940.5 302L942.5 304.5L942.5 305.5L941.5 305.5L939.5 303ZM939.5 299.5L941.5 297.5L942.5 297.5L942.5 298.5L940.5 300.5L939.5 300.5ZM941.5 297.5H942.5V303H941.5ZM939.5 304.5L941.5 302L942.5 302L942.5 303L940.5 305.5L939.5 305.5ZM934.5 179.5H938.5V180.5H934.5ZM936.5 178.5L937.5 178.5L938.5 179.5L938.5 180.5L937.5 180.5L936.5 179.5ZM936.5 177.5H937.5V179.5H936.5ZM936.5 177.5L937.5 176.5L938.5 176.5L938.5 177.5L937.5 178.5L936.5 178.5ZM937.5 176.5H940.5V177.5H937.5ZM939.5 176.5L940.5 176.5L941.5 177.5L941.5 178.5L940.5 178.5L939.5 177.5ZM940.5 177.5H941.5V179.5H940.5ZM939.5 179.5L940.5 178.5L941.5 178.5L941.5 179.5L940.5 180.5L939.5 180.5ZM939.5 179.5H943.5V180.5H939.5ZM934.5 181.5H943.5V182.5H934.5ZM934.5 15.5L935.5 15.5L936.5 16.5L936.5 17.5L935.5 17.5L934.5 16.5ZM935.5 16.5H936.5V23.5H935.5ZM935.5 16.5L936.5 15.5L937.5 15.5L937.5 16.5L936.5 17.5L935.5 17.5ZM936.5 15.5L937.5 15.5L938.5 16.5L938.5 17.5L937.5 17.5L936.5 16.5ZM937.5 16.5H938.5V23.5H937.5ZM937.5 16.5L938.5 15.5L939.5 15.5L939.5 16.5L938.5 17.5L937.5 17.5ZM938.5 15.5L939.5 15.5L940.5 16.5L940.5 17.5L939.5 17.5L938.5 16.5ZM939.5 16.5H940.5V23.5H939.5ZM939.5 22.5L940.5 22.5L941.5 23.5L941.5 24.5L940.5 24.5L939.5 23.5ZM940.5 23.5H942.5V24.5H940.5ZM941.5 23.5L942.5 22.5L943.5 22.5L943.5 23.5L942.5 24.5L941.5 24.5ZM942.5 21H943.5V23.5H942.5ZM942 21H943V22.5H942ZM777.5 18.5L778.5 18.5L780.5 20.5L780.5 21.5L779.5 21.5L777.5 19.5ZM779.5 20.5L780.5 20.5L782.5 22.5L782.5 23.5L781.5 23.5L779.5 21.5ZM782.5 15.5H785.5V16.5H782.5ZM776.5 23.5L779.5 20.5L780.5 20.5L780.5 21.5L777.5 24.5L776.5 24.5ZM779.5 20.5L784.5 15.5L785.5 15.5L785.5 16.5L780.5 21.5L779.5 21.5ZM784.5 15.5H785.5V18.5H784.5ZM654.5 16.5L655.5 15.5L656.5 15.5L656.5 16.5L655.5 17.5L654.5 17.5ZM655.5 15.5L656.5 15.5L657.5 20.5L657.5 21.5L656.5 21.5L655.5 16.5ZM656.5 20.5H657.5V23.5H656.5ZM656.5 20.5L658.5 15.5L659.5 15.5L659.5 16.5L657.5 21.5L656.5 21.5ZM658.5 15.5L659.5 15.5L660.5 16.5L660.5 17.5L659.5 17.5L658.5 16.5ZM660.5 15.5H662.5V16.5H660.5ZM661.5 15.5L662.5 15.5L663.5 16.5L663.5 17.5L662.5 17.5L661.5 16.5ZM662.5 16.5H663.5V18.5H662.5ZM661.5 18.5L662.5 17.5L663.5 17.5L663.5 18.5L662.5 19.5L661.5 19.5ZM660.5 18.5H662.5V19.5H660.5ZM659.5 17.5L660.5 17.5L661.5 18.5L661.5 19.5L660.5 19.5L659.5 18.5ZM659.5 16.5H660.5V18.5H659.5ZM659.5 16.5L660.5 15.5L661.5 15.5L661.5 16.5L660.5 17.5L659.5 17.5ZM660 17.5L661 17.5L663.5 20.5L663.5 21.5L662.5 21.5L660 18.5ZM662.5 20.5H663.5V23H662.5ZM661.5 23.5L662.5 22L663.5 22L663.5 23L662.5 24.5L661.5 24.5ZM495.5 18.5L497.5 15.5L498.5 15.5L498.5 16.5L496.5 19.5L495.5 19.5ZM497.5 15.5L498.5 15.5L499.5 18.5L499.5 19.5L498.5 19.5L497.5 16.5ZM498.5 18.5L500.5 15.5L501.5 15.5L501.5 16.5L499.5 19.5L498.5 19.5ZM500.5 15.5L501.5 15.5L502.5 18.5L502.5 19.5L501.5 19.5L500.5 16.5ZM501.5 18.5L503.5 15.5L504.5 15.5L504.5 16.5L502.5 19.5L501.5 19.5ZM495.5 23.5L497.5 20.5L498.5 20.5L498.5 21.5L496.5 24.5L495.5 24.5ZM497.5 20.5L498.5 20.5L499.5 23.5L499.5 24.5L498.5 24.5L497.5 21.5ZM498.5 23.5L500.5 20.5L501.5 20.5L501.5 21.5L499.5 24.5L498.5 24.5ZM500.5 20.5L501.5 20.5L502.5 23.5L502.5 24.5L501.5 24.5L500.5 21.5ZM501.5 23.5L503.5 20.5L504.5 20.5L504.5 21.5L502.5 24.5L501.5 24.5ZM495.5 178.5H504.5V179.5H495.5ZM495.5 174.5L496.5 174.5L498 176L498 177L497 177L495.5 175.5ZM497 176L498 176L498.5 177L498.5 178L497.5 178L497 177ZM497.5 177H498.5V181H497.5ZM497 181L497.5 180L498.5 180L498.5 181L498 182L497 182ZM495.5 182.5L497 181L498 181L498 182L496.5 183.5L495.5 183.5ZM502 176L503.5 174.5L504.5 174.5L504.5 175.5L503 177L502 177ZM501.5 177L502 176L503 176L503 177L502.5 178L501.5 178ZM501.5 177H502.5V181H501.5ZM501.5 180L502.5 180L503 181L503 182L502 182L501.5 181ZM502 181L503 181L504.5 182.5L504.5 183.5L503.5 183.5L502 182Z"/>
<path class="p" transform="translate(0,.5)" stroke="#808080" d="M719 238h3M718 239h5M718 240h5M718 241h5M719 242h3"/>
<path transform="translate(.5,.5)" fill="#ff0000" d="M727.23 255.57L727.5 253.5L728.5 253.5L728.5 254.5L728.23 256.57L727.23 256.57ZM726.43 257.5L727.23 255.57L728.23 255.57L728.23 256.57L727.43 258.5L726.43 258.5ZM725.16 259.16L726.43 257.5L727.43 257.5L727.43 258.5L726.16 260.16L725.16 260.16ZM723.5 260.43L725.16 259.16L726.16 259.16L726.16 260.16L724.5 261.43L723.5 261.43ZM721.57 261.23L723.5 260.43L724.5 260.43L724.5 261.43L722.57 262.23L721.57 262.23ZM719.5 261.5L721.57 261.23L722.57 261.23L722.57 262.23L720.5 262.5L719.5 262.5ZM717.43 261.23L718.43 261.23L720.5 261.5L720.5 262.5L719.5 262.5L717.43 262.23ZM715.5 260.43L716.5 260.43L718.43 261.23L718.43 262.23L717.43 262.23L715.5 261.43ZM713.84 259.16L714.84 259.16L716.5 260.43L716.5 261.43L715.5 261.43L713.84 260.16ZM712.57 257.5L713.57 257.5L714.84 259.16L714.84 260.16L713.84 260.16L712.57 258.5ZM711.77 255.57L712.77 255.57L713.57 257.5L713.57 258.5L712.57 258.5L711.77 256.57ZM711.5 253.5L712.5 253.5L712.77 255.57L712.77 256.57L711.77 256.57L711.5 254.5ZM711.5 253.5L711.77 251.43L712.77 251.43L712.77 252.43L712.5 254.5L711.5 254.5ZM711.77 251.43L712.57 249.5L713.57 249.5L713.57 250.5L712.77 252.43L711.77 252.43ZM712.57 249.5L713.84 247.84L714.84 247.84L714.84 248.84L713.57 250.5L712.57 250.5ZM713.84 247.84L715.5 246.57L716.5 246.57L716.5 247.57L714.84 248.84L713.84 248.84ZM715.5 246.57L717.43 245.77L718.43 245.77L718.43 246.77L716.5 247.57L715.5 247.57ZM717.43 245.77L719.5 245.5L720.5 245.5L720.5 246.5L718.43 246.77L717.43 246.77ZM719.5 245.5L720.5 245.5L722.57 245.77L722.57 246.77L721.57 246.77L719.5 246.5ZM721.57 245.77L722.57 245.77L724.5 246.57L724.5 247.57L723.5 247.57L721.57 246.77ZM723.5 246.57L724.5 246.57L726.16 247.84L726.16 248.84L725.16 248.84L723.5 247.57ZM725.16 247.84L726.16 247.84L727.43 249.5L727.43 250.5L726.43 250.5L725.16 248.84ZM726.43 249.5L727.43 249.5L728.23 251.43L728.23 252.43L727.23 252.43L726.43 250.5ZM727.23 251.43L728.23 251.43L728.5 253.5L728.5 254.5L727.5 254.5L727.23 252.43Z"/>
<path class="p" transform="translate(0,.5)" stroke="#ff0000" d="M720 254h1"/>
<circle cx="720.5" cy="240.5" r="1.55" fill="#ff0000"/>
<path transform="translate(.5,.5)" fill="#00ff00" d="M711.2 228.03L711.5 226.5L712.5 226.5L712.5 227.5L712.2 229.03L711.2 229.03ZM710.33 229.33L711.2 228.03L712.2 228.03L712.2 229.03L711.33 230.33L710.33 230.33ZM709.03 230.2L710.33 229.33L711.33 229.33L711.33 230.33L710.03 231.2L709.03 231.2ZM707.5 230.5L709.03 230.2L710.03 230.2L710.03 231.2L708.5 231.5L707.5 231.5ZM705.97 230.2L706.97 230.2L708.5 230.5L708.5 231.5L707.5 231.5L705.97 231.2ZM704.67 229.33L705.67 229.33L706.97 230.2L706.97 231.2L705.97 231.2L704.67 230.33ZM703.8 228.03L704.8 228.03L705.67 229.33L705.67 230.33L704.67 230.33L703.8 229.03ZM703.5 226.5L704.5 226.5L704.8 228.03L704.8 229.03L703.8 229.03L703.5 227.5ZM703.5 226.5L703.8 224.97L704.8 224.97L704.8 225.97L704.5 227.5L703.5 227.5ZM703.8 224.97L704.67 223.67L705.67 223.67L705.67 224.67L704.8 225.97L703.8 225.97ZM704.67 223.67L705.97 222.8L706.97 222.8L706.97 223.8L705.67 224.67L704.67 224.67ZM705.97 222.8L707.5 222.5L708.5 222.5L708.5 223.5L706.97 223.8L705.97 223.8ZM707.5 222.5L708.5 222.5L710.03 222.8L710.03 223.8L709.03 223.8L707.5 223.5ZM709.03 222.8L710.03 222.8L711.33 223.67L711.33 224.67L710.33 224.67L709.03 223.8ZM710.33 223.67L711.33 223.67L712.2 224.97L712.2 225.97L711.2 225.97L710.33 224.67ZM711.2 224.97L712.2 224.97L712.5 226.5L712.5 227.5L711.5 227.5L711.2 225.97ZM707.5 230.5H708.5V237.5H707.5ZM703.5 234.5H712.5V235.5H703.5ZM703.5 220.5L704.5 220.5L705.5 222.5L705.5 223.5L704.5 223.5L703.5 221.5ZM704.5 222.5L705.5 222.5L707.5 223L707.5 224L706.5 224L704.5 223.5ZM710.5 222.5L711.5 220.5L712.5 220.5L712.5 221.5L711.5 223.5L710.5 223.5ZM708.5 223L710.5 222.5L711.5 222.5L711.5 223.5L709.5 224L708.5 224Z"/>
<circle cx="708.5" cy="243.5" r="1.55" fill="#00ff00"/>
<path transform="translate(.5,.5)" fill="#00ff00" d="M720.2 195.03L720.5 193.5L721.5 193.5L721.5 194.5L721.2 196.03L720.2 196.03ZM719.33 196.33L720.2 195.03L721.2 195.03L721.2 196.03L720.33 197.33L719.33 197.33ZM718.03 197.2L719.33 196.33L720.33 196.33L720.33 197.33L719.03 198.2L718.03 198.2ZM716.5 197.5L718.03 197.2L719.03 197.2L719.03 198.2L717.5 198.5L716.5 198.5ZM714.97 197.2L715.97 197.2L717.5 197.5L717.5 198.5L716.5 198.5L714.97 198.2ZM713.67 196.33L714.67 196.33L715.97 197.2L715.97 198.2L714.97 198.2L713.67 197.33ZM712.8 195.03L713.8 195.03L714.67 196.33L714.67 197.33L713.67 197.33L712.8 196.03ZM712.5 193.5L713.5 193.5L713.8 195.03L713.8 196.03L712.8 196.03L712.5 194.5ZM712.5 193.5L712.8 191.97L713.8 191.97L713.8 192.97L713.5 194.5L712.5 194.5ZM712.8 191.97L713.67 190.67L714.67 190.67L714.67 191.67L713.8 192.97L712.8 192.97ZM713.67 190.67L714.97 189.8L715.97 189.8L715.97 190.8L714.67 191.67L713.67 191.67ZM714.97 189.8L716.5 189.5L717.5 189.5L717.5 190.5L715.97 190.8L714.97 190.8ZM716.5 189.5L717.5 189.5L719.03 189.8L719.03 190.8L718.03 190.8L716.5 190.5ZM718.03 189.8L719.03 189.8L720.33 190.67L720.33 191.67L719.33 191.67L718.03 190.8ZM719.33 190.67L720.33 190.67L721.2 191.97L721.2 192.97L720.2 192.97L719.33 191.67ZM720.2 191.97L721.2 191.97L721.5 193.5L721.5 194.5L720.5 194.5L720.2 192.97ZM716.5 197.5H717.5V206.5H716.5ZM712.5 201.5H721.5V202.5H712.5Z"/>
<circle cx="717.5" cy="212.5" r="1.55" fill="#00ff00"/>
<path transform="translate(.5,.5)" fill="#ffff00" d="M746.23 221.57L746.5 219.5L747.5 219.5L747.5 220.5L747.23 222.57L746.23 222.57ZM745.43 223.5L746.23 221.57L747.23 221.57L747.23 222.57L746.43 224.5L745.43 224.5ZM744.16 225.16L745.43 223.5L746.43 223.5L746.43 224.5L745.16 226.16L744.16 226.16ZM742.5 226.43L744.16 225.16L745.16 225.16L745.16 226.16L743.5 227.43L742.5 227.43ZM740.57 227.23L742.5 226.43L743.5 226.43L743.5 227.43L741.57 228.23L740.57 228.23ZM738.5 227.5L740.57 227.23L741.57 227.23L741.57 228.23L739.5 228.5L738.5 228.5ZM736.43 227.23L737.43 227.23L739.5 227.5L739.5 228.5L738.5 228.5L736.43 228.23ZM734.5 226.43L735.5 226.43L737.43 227.23L737.43 228.23L736.43 228.23L734.5 227.43ZM732.84 225.16L733.84 225.16L735.5 226.43L735.5 227.43L734.5 227.43L732.84 226.16ZM731.57 223.5L732.57 223.5L733.84 225.16L733.84 226.16L732.84 226.16L731.57 224.5ZM730.77 221.57L731.77 221.57L732.57 223.5L732.57 224.5L731.57 224.5L730.77 222.57ZM730.5 219.5L731.5 219.5L731.77 221.57L731.77 222.57L730.77 222.57L730.5 220.5ZM730.5 219.5L730.77 217.43L731.77 217.43L731.77 218.43L731.5 220.5L730.5 220.5ZM730.77 217.43L731.57 215.5L732.57 215.5L732.57 216.5L731.77 218.43L730.77 218.43ZM731.57 215.5L732.84 213.84L733.84 213.84L733.84 214.84L732.57 216.5L731.57 216.5ZM732.84 213.84L734.5 212.57L735.5 212.57L735.5 213.57L733.84 214.84L732.84 214.84ZM734.5 212.57L736.43 211.77L737.43 211.77L737.43 212.77L735.5 213.57L734.5 213.57ZM736.43 211.77L738.5 211.5L739.5 211.5L739.5 212.5L737.43 212.77L736.43 212.77ZM738.5 211.5L739.5 211.5L741.57 211.77L741.57 212.77L740.57 212.77L738.5 212.5ZM740.57 211.77L741.57 211.77L743.5 212.57L743.5 213.57L742.5 213.57L740.57 212.77ZM742.5 212.57L743.5 212.57L745.16 213.84L745.16 214.84L744.16 214.84L742.5 213.57ZM744.16 213.84L745.16 213.84L746.43 215.5L746.43 216.5L745.43 216.5L744.16 214.84ZM745.43 215.5L746.43 215.5L747.23 217.43L747.23 218.43L746.23 218.43L745.43 216.5ZM746.23 217.43L747.23 217.43L747.5 219.5L747.5 220.5L746.5 220.5L746.23 218.43ZM730.5 219.5H747.5V220.5H730.5ZM738.5 211.5H739.5V228.5H738.5Z"/>
<circle cx="739.5" cy="206.5" r="1.55" fill="#ffff00"/>
<path transform="translate(.5,.5)" fill="#ff0000" d="M785.12 267.41L785.5 265.5L786.5 265.5L786.5 266.5L786.12 268.41L785.12 268.41ZM784.04 269.04L785.12 267.41L786.12 267.41L786.12 268.41L785.04 270.04L784.04 270.04ZM782.41 270.12L784.04 269.04L785.04 269.04L785.04 270.04L783.41 271.12L782.41 271.12ZM780.5 270.5L782.41 270.12L783.41 270.12L783.41 271.12L781.5 271.5L780.5 271.5ZM778.59 270.12L779.59 270.12L781.5 270.5L781.5 271.5L780.5 271.5L778.59 271.12ZM776.96 269.04L777.96 269.04L779.59 270.12L779.59 271.12L778.59 271.12L776.96 270.04ZM775.88 267.41L776.88 267.41L777.96 269.04L777.96 270.04L776.96 270.04L775.88 268.41ZM775.5 265.5L776.5 265.5L776.88 267.41L776.88 268.41L775.88 268.41L775.5 266.5ZM775.5 265.5L775.88 263.59L776.88 263.59L776.88 264.59L776.5 266.5L775.5 266.5ZM775.88 263.59L776.96 261.96L777.96 261.96L777.96 262.96L776.88 264.59L775.88 264.59ZM776.96 261.96L778.59 260.88L779.59 260.88L779.59 261.88L777.96 262.96L776.96 262.96ZM778.59 260.88L780.5 260.5L781.5 260.5L781.5 261.5L779.59 261.88L778.59 261.88ZM780.5 260.5L781.5 260.5L783.41 260.88L783.41 261.88L782.41 261.88L780.5 261.5ZM782.41 260.88L783.41 260.88L785.04 261.96L785.04 262.96L784.04 262.96L782.41 261.88ZM784.04 261.96L785.04 261.96L786.12 263.59L786.12 264.59L785.12 264.59L784.04 262.96ZM785.12 263.59L786.12 263.59L786.5 265.5L786.5 266.5L785.5 266.5L785.12 264.59ZM784 262L791.5 254.5L792.5 254.5L792.5 255.5L785 263L784 263ZM786.5 254.5H792.5V255.5H786.5ZM791.5 254.5H792.5V260.5H791.5Z"/>
<circle cx="784.5" cy="249.5" r="1.55" fill="#ff0000"/>
<path transform="translate(.5,.5)" fill="#ff0000" d="M715.5 448.5H718.5V449.5H715.5ZM717.5 448.5L718.5 448.5L719.5 450.5L719.5 451.5L718.5 451.5L717.5 449.5ZM718.5 450.5H719.5V453.5H718.5ZM714.5 459.5L718.5 452.5L719.5 452.5L719.5 453.5L715.5 460.5L714.5 460.5ZM714.5 459.5H715.5V461.5H714.5ZM714.5 460.5H729.5V461.5H714.5ZM724.5 448.5L726.5 446.5L727.5 446.5L727.5 447.5L725.5 449.5L724.5 449.5ZM724.5 448.5H725.5V463.5H724.5Z"/>
<circle cx="721.5" cy="441.5" r="1.55" fill="#ff0000"/>
<path transform="translate(.5,.5)" fill="#00ffff" d="M603.5 228.5H610.5V229.5H603.5ZM609.5 228.5H616.5V229.5H609.5ZM609.5 228.5H610.5V231.5H609.5ZM609.5 226.5H610.5V229.5H609.5ZM609.5 226.5L611.5 224.5L612.5 224.5L612.5 225.5L610.5 227.5L609.5 227.5ZM611.5 224.5H614.5V225.5H611.5ZM613.5 224.5L615.5 222.5L616.5 222.5L616.5 223.5L614.5 225.5L613.5 225.5ZM615.5 216.5H616.5V223.5H615.5ZM613.5 214.5L614.5 214.5L616.5 216.5L616.5 217.5L615.5 217.5L613.5 215.5ZM609.5 214.5H614.5V215.5H609.5ZM607.5 216.5L609.5 214.5L610.5 214.5L610.5 215.5L608.5 217.5L607.5 217.5Z"/>
<circle cx="610.5" cy="209.5" r="1.55" fill="#00ffff"/>
<path transform="translate(.5,.5)" fill="#00ffff" d="M648.5 156.5L652.5 148.5L653.5 148.5L653.5 149.5L649.5 157.5L648.5 157.5ZM648.5 156.5L649.5 156.5L653.5 160.5L653.5 161.5L652.5 161.5L648.5 157.5ZM652.5 160.5L656.5 156.5L657.5 156.5L657.5 157.5L653.5 161.5L652.5 161.5ZM652.5 148.5L653.5 148.5L657.5 156.5L657.5 157.5L656.5 157.5L652.5 149.5ZM652.5 160.5H653.5V165.5H652.5ZM646.5 162.5H659.5V163.5H646.5Z"/>
<circle cx="653.5" cy="143.5" r="1.55" fill="#00ffff"/>
<path transform="translate(.5,.5)" fill="#00ffff" d="M792.5 140.5H793.5V157.5H792.5ZM788.5 154.5H797.5V155.5H788.5ZM785.5 146.5H800.5V147.5H785.5ZM787.5 141.5L788.5 141.5L798.5 151.5L798.5 152.5L797.5 152.5L787.5 142.5ZM787.5 151.5L797.5 141.5L798.5 141.5L798.5 142.5L788.5 152.5L787.5 152.5Z"/>
<circle cx="793.5" cy="135.5" r="1.55" fill="#00ffff"/>
<path transform="translate(.5,.5)" fill="#00ffff" d="M775.5 182.5H776.5V186.5H775.5ZM771.5 186.5L772.5 186.5L776.5 192.5L776.5 193.5L775.5 193.5L771.5 187.5ZM775.5 192.5L779.5 186.5L780.5 186.5L780.5 187.5L776.5 193.5L775.5 193.5ZM767.5 190.5H771.5V191.5H767.5ZM770.5 190.5L771.5 190.5L776.5 198.5L776.5 199.5L775.5 199.5L770.5 191.5ZM775.5 198.5L780.5 190.5L781.5 190.5L781.5 191.5L776.5 199.5L775.5 199.5ZM780.5 190.5H784.5V191.5H780.5Z"/>
<circle cx="776.5" cy="177.5" r="1.55" fill="#00ffff"/>
<circle cx="686.5" cy="12.5" r="1.55" fill="#ff00ff"/>
<path class="p" transform="translate(0,.5)" stroke="#808080" d="M478 478h1M958 478h1"/>
<path class="p" transform="translate(0,.5)" stroke="#ff0000" d="M124 242h1M128 246h1M132 250h1M135 254h1M139 258h1M143 262h1M147 266h1M151 270h1M155 274h1M158 278h1M162 282h1M166 286h1M170 290h1M174 294h1M177 298h1M181 302h1M185 306h1M189 310h1M193 314h1M197 318h1M200 322h1M204 326h1M208 330h1M212 334h1M216 338h1M220 342h1M223 346h1M227 350h1M231 354h1M308 320h1M311 320h1M314 320h1M317 320h1M320 320h1M284 321h1M287 321h1M290 321h1M293 321h1M296 321h1M299 321h1M302 321h1M305 321h1M257 322h1M260 322h1M263 322h1M266 322h1M269 322h1M272 322h1M275 322h1M278 322h1M281 322h1M230 323h1M233 323h1M236 323h1M239 323h1M242 323h1M245 323h1M248 323h1M251 323h1M254 323h1M206 324h1M209 324h1M212 324h1M215 324h1M218 324h1M221 324h1M224 324h1M227 324h1M179 325h1M182 325h1M185 325h1M188 325h1M191 325h1M194 325h1M197 325h1M200 325h1M203 325h1M164 326h1M167 326h1M170 326h1M173 326h1M176 326h1M124 239h1M127 242h1M130 245h1M132 248h1M135 251h1M138 254h1M141 257h1M144 260h1M146 263h1M149 266h1M152 269h1M155 272h1M157 275h1M160 278h1M163 281h1M166 284h1M169 287h1M171 290h1M174 293h1M177 296h1M180 299h1M183 302h1M185 305h1M188 308h1M191 311h1M194 314h1M197 317h1M199 320h1M202 323h1M205 326h1M208 329h1M211 332h1M213 335h1M216 338h1M219 341h1M222 344h1M224 347h1M227 350h1M230 353h1"/>
<path transform="translate(.5,.5)" fill="#ff0000" d="M127.5 267.5L208.5 127.5L209.5 127.5L209.5 128.5L128.5 268.5L127.5 268.5Z"/>
<path class="p" transform="translate(0,.5)" stroke="#00ff00" d="M175 144h1M175 148h1M175 152h1M175 156h1M175 160h1M175 164h1M175 168h1M175 172h1M175 176h1M176 180h1M176 184h1M176 188h1M176 192h1M176 196h1M176 200h1M176 204h1M176 208h1M176 212h1M176 216h1M176 220h1M176 224h1M176 228h1M176 232h1M176 236h1M176 240h1M177 244h1M177 248h1M177 252h1M177 256h1M177 260h1M177 264h1M177 268h1M177 272h1M177 276h1M177 280h1M177 284h1M177 288h1M177 292h1M177 296h1M177 300h1M177 304h1M178 308h1M178 312h1M178 316h1M178 320h1M178 324h1M178 328h1M178 332h1M178 336h1M209 128h1M209 130h1M208 132h1M208 134h1M207 136h1M207 138h1M206 140h1M206 142h1M205 144h1M205 146h1M204 148h1M204 150h1M204 152h1M203 154h1M203 156h1M202 158h1M202 160h1M201 162h1M201 164h1M200 166h1M200 168h1M199 170h1M199 172h1M199 174h1M198 176h1M198 178h1M197 180h1M197 182h1M196 184h1M196 186h1M195 188h1M195 190h1M194 192h1M194 194h1M194 196h1M193 198h1M193 200h1M192 202h1M192 204h1M191 206h1M191 208h1M190 210h1M190 212h1M189 214h1M189 216h1M189 218h1M188 220h1M188 222h1M187 224h1M187 226h1M186 228h1M186 230h1M185 232h1M185 234h1M184 236h1M184 238h1M184 240h1M183 242h1M183 244h1M182 246h1M182 248h1M181 250h1M181 252h1M180 254h1M180 256h1M179 258h1M179 260h1M179 262h1M178 264h1M178 266h1M177 268h1M177 270h1M176 272h1M176 274h1M175 276h1M175 278h1M174 280h1M174 282h1M174 284h1M173 286h1M173 288h1M172 290h1M172 292h1M171 294h1M171 296h1M170 298h1M170 300h1M169 302h1M169 304h1M169 306h1M168 308h1M168 310h1M167 312h1M167 314h1M166 316h1M166 318h1M165 320h1M165 322h1M164 324h1M164 326h1M175 145h1M175 147h1M175 149h1M175 151h1M175 153h1M175 155h1M175 157h1M176 159h1M176 161h1M176 163h1M176 165h1M176 167h1M176 169h1M176 171h1M176 173h1M176 175h1M176 177h1M176 179h1M176 181h1M176 183h1M176 185h1M177 187h1M177 189h1M177 191h1M177 193h1M177 195h1M177 197h1M177 199h1M177 201h1M177 203h1M177 205h1M177 207h1M177 209h1M177 211h1M177 213h1M178 215h1M178 217h1M178 219h1M178 221h1M178 223h1M178 225h1M178 227h1M178 229h1M178 231h1M178 233h1M178 235h1M178 237h1M178 239h1M178 241h1M179 243h1M179 245h1M179 247h1M179 249h1M179 251h1M179 253h1M179 255h1M179 257h1M179 259h1M179 261h1M179 263h1M179 265h1M179 267h1M179 269h1M180 271h1M180 273h1M180 275h1M180 277h1M180 279h1M180 281h1M180 283h1M180 285h1M180 287h1M180 289h1M180 291h1M180 293h1M180 295h1M180 297h1M181 299h1M181 301h1M181 303h1M181 305h1M181 307h1M181 309h1M181 311h1M181 313h1M181 315h1M181 317h1M181 319h1M181 321h1M181 323h1M181 325h1M182 327h1M182 329h1M182 331h1M182 333h1M182 335h1M182 337h1M182 339h1"/>
<path transform="translate(.5,.5)" fill="#00ff00" d="M127.5 267.5L128.5 267.5L321.5 319.5L321.5 320.5L320.5 320.5L127.5 268.5Z"/>
<path class="p" transform="translate(0,.5)" stroke="#00ffff" d="M174 146h1M172 149h1M171 152h1M169 155h1M167 158h1M166 161h1M164 164h1M163 167h1M161 170h1M159 173h1M158 176h1M156 179h1M155 182h1M153 185h1M151 188h1M150 191h1M148 194h1M147 197h1M145 200h1M143 203h1M142 206h1M140 209h1M138 212h1M137 215h1M135 218h1M134 221h1M132 224h1M130 227h1M129 230h1M127 233h1M126 236h1M124 239h1M124 242h1M126 245h1M127 248h1M129 251h1M131 254h1M133 257h1M134 260h1M136 263h1M138 266h1M140 269h1M141 272h1M143 275h1M145 278h1M146 281h1M148 284h1M150 287h1M152 290h1M153 293h1M155 296h1M157 299h1M158 302h1M160 305h1M162 308h1M164 311h1M165 314h1M167 317h1M169 320h1M171 323h1M172 326h1M174 329h1M176 332h1M177 335h1M175 144h1M174 146h1M173 148h1M172 150h1M171 152h1M170 154h1M169 156h1M168 158h1M167 160h1M166 162h1M165 164h1M164 166h1M163 168h1M161 170h1M160 172h1M159 174h1M158 176h1M157 178h1M156 180h1M155 182h1M154 184h1M153 186h1M152 188h1M151 190h1M150 192h1M149 194h1M148 196h1M147 198h1M146 200h1M145 202h1M144 204h1M143 206h1M142 208h1M141 210h1M140 212h1M139 214h1M138 216h1M136 218h1M135 220h1M134 222h1M133 224h1M132 226h1M131 228h1M130 230h1M129 232h1M128 234h1M127 236h1M126 238h1M125 240h1M124 242h1"/>
<path transform="translate(.5,.5)" fill="#00ffff" d="M123.5 238.5L124.5 238.5L178.5 335.5L178.5 336.5L177.5 336.5L123.5 239.5ZM123.5 241.5L124.5 241.5L182.5 338.5L182.5 339.5L181.5 339.5L123.5 242.5ZM123.5 238.5L124.5 238.5L182.5 338.5L182.5 339.5L181.5 339.5L123.5 239.5Z"/>
<path class="p" transform="translate(0,.5)" stroke="#ffff00" d="M178 336h1M180 337h1M182 339h1M124 239h1M124 241h1"/>
<path transform="translate(.5,.5)" fill="#ffffff" d="M104.5 229.5L105.5 229.5L115.5 238.5L115.5 239.5L114.5 239.5L104.5 230.5Z"/>
<path transform="translate(.5,.5)" fill="#ffff00" d="M90.5 222.5H99.5V223.5H90.5ZM94.5 220.5H95.5V235.5H94.5ZM94.5 230.5L98.5 227L99.5 227L99.5 228L95.5 231.5L94.5 231.5ZM98.5 227L101 226.5L102 226.5L102 227.5L99.5 228L98.5 228ZM101 226.5L102 226.5L103.5 228.5L103.5 229.5L102.5 229.5L101 227.5ZM102.5 228.5H103.5V232H102.5ZM101 233L102.5 231L103.5 231L103.5 232L102 234L101 234ZM101 233H102V236H101ZM101 235L102 235L103.5 236.5L103.5 237.5L102.5 237.5L101 236Z"/>
<circle cx="119.5" cy="239.5" r="1.55" fill="#ffff00"/>
<path transform="translate(.5,.5)" fill="#ffffff" d="M104.5 246.5L114.5 241.5L115.5 241.5L115.5 242.5L105.5 247.5L104.5 247.5Z"/>
<path transform="translate(.5,.5)" fill="#0000ff" d="M96.5 238.5H97.5V255.5H96.5ZM92.5 250.5H101.5V251.5H92.5ZM90.5 238.5H91.5V243.5H90.5ZM90.5 242.5L91.5 242.5L92.5 244.5L92.5 245.5L91.5 245.5L90.5 243.5ZM91.5 244.5L92.5 244.5L94.5 246.5L94.5 247.5L93.5 247.5L91.5 245.5ZM93.5 246.5L94.5 246.5L97.5 247.5L97.5 248.5L96.5 248.5L93.5 247.5ZM102.5 238.5H103.5V243.5H102.5ZM101.5 244.5L102.5 242.5L103.5 242.5L103.5 243.5L102.5 245.5L101.5 245.5ZM99.5 246.5L101.5 244.5L102.5 244.5L102.5 245.5L100.5 247.5L99.5 247.5ZM96.5 247.5L99.5 246.5L100.5 246.5L100.5 247.5L97.5 248.5L96.5 248.5ZM88.5 240.5L90.5 238.5L91.5 238.5L91.5 239.5L89.5 241.5L88.5 241.5ZM90.5 238.5L91.5 238.5L93.5 240.5L93.5 241.5L92.5 241.5L90.5 239.5ZM94.5 240.5L96.5 238.5L97.5 238.5L97.5 239.5L95.5 241.5L94.5 241.5ZM96.5 238.5L97.5 238.5L99.5 240.5L99.5 241.5L98.5 241.5L96.5 239.5ZM100.5 240.5L102.5 238.5L103.5 238.5L103.5 239.5L101.5 241.5L100.5 241.5ZM102.5 238.5L103.5 238.5L105.5 240.5L105.5 241.5L104.5 241.5L102.5 239.5Z"/>
<circle cx="119.5" cy="242.5" r="1.55" fill="#0000ff"/>
<path transform="translate(.5,.5)" fill="#ffffff" d="M108.5 272.5L117.5 269.5L118.5 269.5L118.5 270.5L109.5 273.5L108.5 273.5Z"/>
<path transform="translate(.5,.5)" fill="#00ff00" d="M104.2 272.03L104.5 270.5L105.5 270.5L105.5 271.5L105.2 273.03L104.2 273.03ZM103.33 273.33L104.2 272.03L105.2 272.03L105.2 273.03L104.33 274.33L103.33 274.33ZM102.03 274.2L103.33 273.33L104.33 273.33L104.33 274.33L103.03 275.2L102.03 275.2ZM100.5 274.5L102.03 274.2L103.03 274.2L103.03 275.2L101.5 275.5L100.5 275.5ZM98.97 274.2L99.97 274.2L101.5 274.5L101.5 275.5L100.5 275.5L98.97 275.2ZM97.67 273.33L98.67 273.33L99.97 274.2L99.97 275.2L98.97 275.2L97.67 274.33ZM96.8 272.03L97.8 272.03L98.67 273.33L98.67 274.33L97.67 274.33L96.8 273.03ZM96.5 270.5L97.5 270.5L97.8 272.03L97.8 273.03L96.8 273.03L96.5 271.5ZM96.5 270.5L96.8 268.97L97.8 268.97L97.8 269.97L97.5 271.5L96.5 271.5ZM96.8 268.97L97.67 267.67L98.67 267.67L98.67 268.67L97.8 269.97L96.8 269.97ZM97.67 267.67L98.97 266.8L99.97 266.8L99.97 267.8L98.67 268.67L97.67 268.67ZM98.97 266.8L100.5 266.5L101.5 266.5L101.5 267.5L99.97 267.8L98.97 267.8ZM100.5 266.5L101.5 266.5L103.03 266.8L103.03 267.8L102.03 267.8L100.5 267.5ZM102.03 266.8L103.03 266.8L104.33 267.67L104.33 268.67L103.33 268.67L102.03 267.8ZM103.33 267.67L104.33 267.67L105.2 268.97L105.2 269.97L104.2 269.97L103.33 268.67ZM104.2 268.97L105.2 268.97L105.5 270.5L105.5 271.5L104.5 271.5L104.2 269.97ZM100.5 274.5H101.5V283.5H100.5ZM96.5 278.5H105.5V279.5H96.5Z"/>
<circle cx="123.5" cy="269.5" r="1.55" fill="#00ff00"/>
<path transform="translate(.5,.5)" fill="#ffffff" d="M150.5 339.5L157.5 333.5L158.5 333.5L158.5 334.5L151.5 340.5L150.5 340.5Z"/>
<path transform="translate(.5,.5)" fill="#00ff00" d="M148.2 345.03L148.5 343.5L149.5 343.5L149.5 344.5L149.2 346.03L148.2 346.03ZM147.33 346.33L148.2 345.03L149.2 345.03L149.2 346.03L148.33 347.33L147.33 347.33ZM146.03 347.2L147.33 346.33L148.33 346.33L148.33 347.33L147.03 348.2L146.03 348.2ZM144.5 347.5L146.03 347.2L147.03 347.2L147.03 348.2L145.5 348.5L144.5 348.5ZM142.97 347.2L143.97 347.2L145.5 347.5L145.5 348.5L144.5 348.5L142.97 348.2ZM141.67 346.33L142.67 346.33L143.97 347.2L143.97 348.2L142.97 348.2L141.67 347.33ZM140.8 345.03L141.8 345.03L142.67 346.33L142.67 347.33L141.67 347.33L140.8 346.03ZM140.5 343.5L141.5 343.5L141.8 345.03L141.8 346.03L140.8 346.03L140.5 344.5ZM140.5 343.5L140.8 341.97L141.8 341.97L141.8 342.97L141.5 344.5L140.5 344.5ZM140.8 341.97L141.67 340.67L142.67 340.67L142.67 341.67L141.8 342.97L140.8 342.97ZM141.67 340.67L142.97 339.8L143.97 339.8L143.97 340.8L142.67 341.67L141.67 341.67ZM142.97 339.8L144.5 339.5L145.5 339.5L145.5 340.5L143.97 340.8L142.97 340.8ZM144.5 339.5L145.5 339.5L147.03 339.8L147.03 340.8L146.03 340.8L144.5 340.5ZM146.03 339.8L147.03 339.8L148.33 340.67L148.33 341.67L147.33 341.67L146.03 340.8ZM147.33 340.67L148.33 340.67L149.2 341.97L149.2 342.97L148.2 342.97L147.33 341.67ZM148.2 341.97L149.2 341.97L149.5 343.5L149.5 344.5L148.5 344.5L148.2 342.97ZM144.5 347.5H145.5V354.5H144.5ZM140.5 351.5H149.5V352.5H140.5ZM140.5 337.5L141.5 337.5L142.5 339.5L142.5 340.5L141.5 340.5L140.5 338.5ZM141.5 339.5L142.5 339.5L144.5 340L144.5 341L143.5 341L141.5 340.5ZM147.5 339.5L148.5 337.5L149.5 337.5L149.5 338.5L148.5 340.5L147.5 340.5ZM145.5 340L147.5 339.5L148.5 339.5L148.5 340.5L146.5 341L145.5 341Z"/>
<circle cx="161.5" cy="330.5" r="1.55" fill="#00ff00"/>
<path transform="translate(.5,.5)" fill="#ffffff" d="M163.5 349.5L171.5 343.5L172.5 343.5L172.5 344.5L164.5 350.5L163.5 350.5Z"/>
<path transform="translate(.5,.5)" fill="#00ff00" d="M153.5 348.5L154.5 348.5L156.5 350.5L156.5 351.5L155.5 351.5L153.5 349.5ZM155.5 350.5H156.5V357.5H155.5ZM153.5 358.5L155.5 356.5L156.5 356.5L156.5 357.5L154.5 359.5L153.5 359.5ZM163.5 350.5L165.5 348.5L166.5 348.5L166.5 349.5L164.5 351.5L163.5 351.5ZM163.5 350.5H164.5V357.5H163.5ZM163.5 356.5L164.5 356.5L166.5 358.5L166.5 359.5L165.5 359.5L163.5 357.5ZM155.5 354.5H164.5V355.5H155.5ZM159.5 352.5H160.5V361.5H159.5ZM161.35 363.27L161.5 362.5L162.5 362.5L162.5 363.5L162.35 364.27L161.35 364.27ZM160.91 363.91L161.35 363.27L162.35 363.27L162.35 364.27L161.91 364.91L160.91 364.91ZM160.27 364.35L160.91 363.91L161.91 363.91L161.91 364.91L161.27 365.35L160.27 365.35ZM159.5 364.5L160.27 364.35L161.27 364.35L161.27 365.35L160.5 365.5L159.5 365.5ZM158.73 364.35L159.73 364.35L160.5 364.5L160.5 365.5L159.5 365.5L158.73 365.35ZM158.09 363.91L159.09 363.91L159.73 364.35L159.73 365.35L158.73 365.35L158.09 364.91ZM157.65 363.27L158.65 363.27L159.09 363.91L159.09 364.91L158.09 364.91L157.65 364.27ZM157.5 362.5L158.5 362.5L158.65 363.27L158.65 364.27L157.65 364.27L157.5 363.5ZM157.5 362.5L157.65 361.73L158.65 361.73L158.65 362.73L158.5 363.5L157.5 363.5ZM157.65 361.73L158.09 361.09L159.09 361.09L159.09 362.09L158.65 362.73L157.65 362.73ZM158.09 361.09L158.73 360.65L159.73 360.65L159.73 361.65L159.09 362.09L158.09 362.09ZM158.73 360.65L159.5 360.5L160.5 360.5L160.5 361.5L159.73 361.65L158.73 361.65ZM159.5 360.5L160.5 360.5L161.27 360.65L161.27 361.65L160.27 361.65L159.5 361.5ZM160.27 360.65L161.27 360.65L161.91 361.09L161.91 362.09L160.91 362.09L160.27 361.65ZM160.91 361.09L161.91 361.09L162.35 361.73L162.35 362.73L161.35 362.73L160.91 362.09ZM161.35 361.73L162.35 361.73L162.5 362.5L162.5 363.5L161.5 363.5L161.35 362.73Z"/>
<circle cx="175.5" cy="340.5" r="1.55" fill="#00ff00"/>
<path transform="translate(.5,.5)" fill="#ffffff" d="M177.5 346.5L178.5 346.5L180.5 358.5L180.5 359.5L179.5 359.5L177.5 347.5Z"/>
<path transform="translate(.5,.5)" fill="#ff0000" d="M183.23 368.57L183.5 366.5L184.5 366.5L184.5 367.5L184.23 369.57L183.23 369.57ZM182.43 370.5L183.23 368.57L184.23 368.57L184.23 369.57L183.43 371.5L182.43 371.5ZM181.16 372.16L182.43 370.5L183.43 370.5L183.43 371.5L182.16 373.16L181.16 373.16ZM179.5 373.43L181.16 372.16L182.16 372.16L182.16 373.16L180.5 374.43L179.5 374.43ZM177.57 374.23L179.5 373.43L180.5 373.43L180.5 374.43L178.57 375.23L177.57 375.23ZM175.5 374.5L177.57 374.23L178.57 374.23L178.57 375.23L176.5 375.5L175.5 375.5ZM173.43 374.23L174.43 374.23L176.5 374.5L176.5 375.5L175.5 375.5L173.43 375.23ZM171.5 373.43L172.5 373.43L174.43 374.23L174.43 375.23L173.43 375.23L171.5 374.43ZM169.84 372.16L170.84 372.16L172.5 373.43L172.5 374.43L171.5 374.43L169.84 373.16ZM168.57 370.5L169.57 370.5L170.84 372.16L170.84 373.16L169.84 373.16L168.57 371.5ZM167.77 368.57L168.77 368.57L169.57 370.5L169.57 371.5L168.57 371.5L167.77 369.57ZM167.5 366.5L168.5 366.5L168.77 368.57L168.77 369.57L167.77 369.57L167.5 367.5ZM167.5 366.5L167.77 364.43L168.77 364.43L168.77 365.43L168.5 367.5L167.5 367.5ZM167.77 364.43L168.57 362.5L169.57 362.5L169.57 363.5L168.77 365.43L167.77 365.43ZM168.57 362.5L169.84 360.84L170.84 360.84L170.84 361.84L169.57 363.5L168.57 363.5ZM169.84 360.84L171.5 359.57L172.5 359.57L172.5 360.57L170.84 361.84L169.84 361.84ZM171.5 359.57L173.43 358.77L174.43 358.77L174.43 359.77L172.5 360.57L171.5 360.57ZM173.43 358.77L175.5 358.5L176.5 358.5L176.5 359.5L174.43 359.77L173.43 359.77ZM175.5 358.5L176.5 358.5L178.57 358.77L178.57 359.77L177.57 359.77L175.5 359.5ZM177.57 358.77L178.57 358.77L180.5 359.57L180.5 360.57L179.5 360.57L177.57 359.77ZM179.5 359.57L180.5 359.57L182.16 360.84L182.16 361.84L181.16 361.84L179.5 360.57ZM181.16 360.84L182.16 360.84L183.43 362.5L183.43 363.5L182.43 363.5L181.16 361.84ZM182.43 362.5L183.43 362.5L184.23 364.43L184.23 365.43L183.23 365.43L182.43 363.5ZM183.23 364.43L184.23 364.43L184.5 366.5L184.5 367.5L183.5 367.5L183.23 365.43Z"/>
<path class="p" transform="translate(0,.5)" stroke="#ff0000" d="M176 367h1"/>
<circle cx="180.5" cy="343.5" r="1.55" fill="#ff0000"/>
<path transform="translate(.5,.5)" fill="#ffffff" d="M228.5 372.5L229.5 362.5L230.5 362.5L230.5 363.5L229.5 373.5L228.5 373.5Z"/>
<path transform="translate(.5,.5)" fill="#ff0000" d="M222.5 374.5H225.5V375.5H222.5ZM224.5 374.5L225.5 374.5L226.5 376.5L226.5 377.5L225.5 377.5L224.5 375.5ZM225.5 376.5H226.5V379.5H225.5ZM221.5 385.5L225.5 378.5L226.5 378.5L226.5 379.5L222.5 386.5L221.5 386.5ZM221.5 385.5H222.5V387.5H221.5ZM221.5 386.5H236.5V387.5H221.5ZM231.5 374.5L233.5 372.5L234.5 372.5L234.5 373.5L232.5 375.5L231.5 375.5ZM231.5 374.5H232.5V389.5H231.5Z"/>
<circle cx="230.5" cy="358.5" r="1.55" fill="#ff0000"/>
<path transform="translate(.5,.5)" fill="#ffffff" d="M327.5 326.5L328.5 326.5L334.5 332.5L334.5 333.5L333.5 333.5L327.5 327.5Z"/>
<path transform="translate(.5,.5)" fill="#ff0000" d="M341.12 343.41L341.5 341.5L342.5 341.5L342.5 342.5L342.12 344.41L341.12 344.41ZM340.04 345.04L341.12 343.41L342.12 343.41L342.12 344.41L341.04 346.04L340.04 346.04ZM338.41 346.12L340.04 345.04L341.04 345.04L341.04 346.04L339.41 347.12L338.41 347.12ZM336.5 346.5L338.41 346.12L339.41 346.12L339.41 347.12L337.5 347.5L336.5 347.5ZM334.59 346.12L335.59 346.12L337.5 346.5L337.5 347.5L336.5 347.5L334.59 347.12ZM332.96 345.04L333.96 345.04L335.59 346.12L335.59 347.12L334.59 347.12L332.96 346.04ZM331.88 343.41L332.88 343.41L333.96 345.04L333.96 346.04L332.96 346.04L331.88 344.41ZM331.5 341.5L332.5 341.5L332.88 343.41L332.88 344.41L331.88 344.41L331.5 342.5ZM331.5 341.5L331.88 339.59L332.88 339.59L332.88 340.59L332.5 342.5L331.5 342.5ZM331.88 339.59L332.96 337.96L333.96 337.96L333.96 338.96L332.88 340.59L331.88 340.59ZM332.96 337.96L334.59 336.88L335.59 336.88L335.59 337.88L333.96 338.96L332.96 338.96ZM334.59 336.88L336.5 336.5L337.5 336.5L337.5 337.5L335.59 337.88L334.59 337.88ZM336.5 336.5L337.5 336.5L339.41 336.88L339.41 337.88L338.41 337.88L336.5 337.5ZM338.41 336.88L339.41 336.88L341.04 337.96L341.04 338.96L340.04 338.96L338.41 337.88ZM340.04 337.96L341.04 337.96L342.12 339.59L342.12 340.59L341.12 340.59L340.04 338.96ZM341.12 339.59L342.12 339.59L342.5 341.5L342.5 342.5L341.5 342.5L341.12 340.59ZM340 338L347.5 330.5L348.5 330.5L348.5 331.5L341 339L340 339ZM342.5 330.5H348.5V331.5H342.5ZM347.5 330.5H348.5V336.5H347.5Z"/>
<circle cx="324.5" cy="323.5" r="1.55" fill="#ff0000"/>
<path transform="translate(.5,.5)" fill="#808080" d="M164.5 126.5L165.5 126.5L170.5 134.5L170.5 135.5L169.5 135.5L164.5 127.5Z"/>
<path transform="translate(.5,.5)" fill="#0000ff" d="M159.5 119.5H160.5V128.5H159.5ZM155.5 123.5H164.5V124.5H155.5ZM161.53 114.34L161.7 113.5L162.7 113.5L162.7 114.5L162.53 115.34L161.53 115.34ZM161.06 115.06L161.53 114.34L162.53 114.34L162.53 115.34L162.06 116.06L161.06 116.06ZM160.34 115.53L161.06 115.06L162.06 115.06L162.06 116.06L161.34 116.53L160.34 116.53ZM159.5 115.7L160.34 115.53L161.34 115.53L161.34 116.53L160.5 116.7L159.5 116.7ZM158.66 115.53L159.66 115.53L160.5 115.7L160.5 116.7L159.5 116.7L158.66 116.53ZM157.94 115.06L158.94 115.06L159.66 115.53L159.66 116.53L158.66 116.53L157.94 116.06ZM157.47 114.34L158.47 114.34L158.94 115.06L158.94 116.06L157.94 116.06L157.47 115.34ZM157.3 113.5L158.3 113.5L158.47 114.34L158.47 115.34L157.47 115.34L157.3 114.5ZM157.3 113.5L157.47 112.66L158.47 112.66L158.47 113.66L158.3 114.5L157.3 114.5ZM157.47 112.66L157.94 111.94L158.94 111.94L158.94 112.94L158.47 113.66L157.47 113.66ZM157.94 111.94L158.66 111.47L159.66 111.47L159.66 112.47L158.94 112.94L157.94 112.94ZM158.66 111.47L159.5 111.3L160.5 111.3L160.5 112.3L159.66 112.47L158.66 112.47ZM159.5 111.3L160.5 111.3L161.34 111.47L161.34 112.47L160.34 112.47L159.5 112.3ZM160.34 111.47L161.34 111.47L162.06 111.94L162.06 112.94L161.06 112.94L160.34 112.47ZM161.06 111.94L162.06 111.94L162.53 112.66L162.53 113.66L161.53 113.66L161.06 112.94ZM161.53 112.66L162.53 112.66L162.7 113.5L162.7 114.5L161.7 114.5L161.53 113.66ZM153.5 111.5H154.5V116.5H153.5ZM153.5 115.5L154.5 115.5L158.5 119.5L158.5 120.5L157.5 120.5L153.5 116.5ZM157.5 119.5H162.5V120.5H157.5ZM161.5 119.5L165.5 115.5L166.5 115.5L166.5 116.5L162.5 120.5L161.5 120.5ZM165.5 111.5H166.5V116.5H165.5Z"/>
<circle cx="173.5" cy="140.5" r="1.55" fill="#0000ff"/>
<path transform="translate(.5,.5)" fill="#808080" d="M202.5 109.5L203.5 109.5L206.5 118.5L206.5 119.5L205.5 119.5L202.5 110.5Z"/>
<circle cx="207.5" cy="124.5" r="1.55" fill="#ff00ff"/>
<defs><filter id="n" x="0" y="0" width="960" height="480" filterUnits="userSpaceOnUse"><feOffset dx="0" dy="0"/></filter></defs><g filter="url(#n)">
<text x="0.0" y="0.0" fill="#ff0000" stroke="#ff0000" font-size="13" text-anchor="middle" transform="translate(78.6,287.1) scale(.82,1)">1</text>
<text x="0.0" y="0.0" fill="#ffff00" stroke="#ffff00" font-size="13" text-anchor="middle" transform="translate(121.7,361.8) scale(.82,1)">2</text>
<text x="0.0" y="0.0" fill="#00ff00" stroke="#00ff00" font-size="13" text-anchor="middle" transform="translate(196.4,404.9) scale(.82,1)">3</text>
<text x="0.0" y="0.0" fill="#0000ff" stroke="#0000ff" font-size="13" text-anchor="middle" transform="translate(282.6,404.9) scale(.82,1)">4</text>
<text x="0.0" y="0.0" fill="#ff0000" stroke="#ff0000" font-size="13" text-anchor="middle" transform="translate(357.3,361.8) scale(.82,1)">5</text>
<text x="0.0" y="0.0" fill="#ffff00" stroke="#ffff00" font-size="13" text-anchor="middle" transform="translate(400.4,287.1) scale(.82,1)">6</text>
<text x="0.0" y="0.0" fill="#00ff00" stroke="#00ff00" font-size="13" text-anchor="middle" transform="translate(400.4,200.9) scale(.82,1)">7</text>
<text x="0.0" y="0.0" fill="#0000ff" stroke="#0000ff" font-size="13" text-anchor="middle" transform="translate(357.3,126.2) scale(.82,1)">8</text>
<text x="0.0" y="0.0" fill="#ff0000" stroke="#ff0000" font-size="13" text-anchor="middle" transform="translate(282.6,83.1) scale(.82,1)">9</text>
<text x="0.0" y="0.0" fill="#ffff00" stroke="#ffff00" font-size="13" text-anchor="middle" transform="translate(197.3,83.1) scale(.82,1)" letter-spacing="2">10</text>
<text x="0.0" y="0.0" fill="#00ff00" stroke="#00ff00" font-size="13" text-anchor="middle" transform="translate(122.6,126.2) scale(.82,1)" letter-spacing="2">11</text>
<text x="0.0" y="0.0" fill="#0000ff" stroke="#0000ff" font-size="13" text-anchor="middle" transform="translate(79.5,200.9) scale(.82,1)" letter-spacing="2">12</text>
<text x="678.0" y="25.0" fill="#ff00ff" stroke="#ff00ff" font-size="10" text-anchor="start" >3I/</text>
<text x="677.7" y="34.2" fill="#ff00ff" stroke="#ff00ff" font-size="11.5" text-anchor="start" font-weight="bold" textLength="17.6" lengthAdjust="spacingAndGlyphs">ATLAS</text>
<text x="46.0" y="477.0" fill="#c0c0c0" stroke="#c0c0c0" font-size="10" text-anchor="start" xml:space="preserve">Comet 3I/Atlas, Wed May 21 2025 12:00am (Zone h0e)   0°00W  0°00N</text>
<text x="526.0" y="477.0" fill="#c0c0c0" stroke="#c0c0c0" font-size="10" text-anchor="start" xml:space="preserve">Comet 3I/Atlas, Wed May 21 2025 12:00am (Zone h0e)   0°00W  0°00N</text>
<text x="193.0" y="101.0" fill="#ff00ff" stroke="#ff00ff" font-size="10" text-anchor="start" >3I/</text>
<text x="192.7" y="110.2" fill="#ff00ff" stroke="#ff00ff" font-size="11.5" text-anchor="start" font-weight="bold" textLength="17.6" lengthAdjust="spacingAndGlyphs">ATLAS</text>
</g>
</svg></body></html>
